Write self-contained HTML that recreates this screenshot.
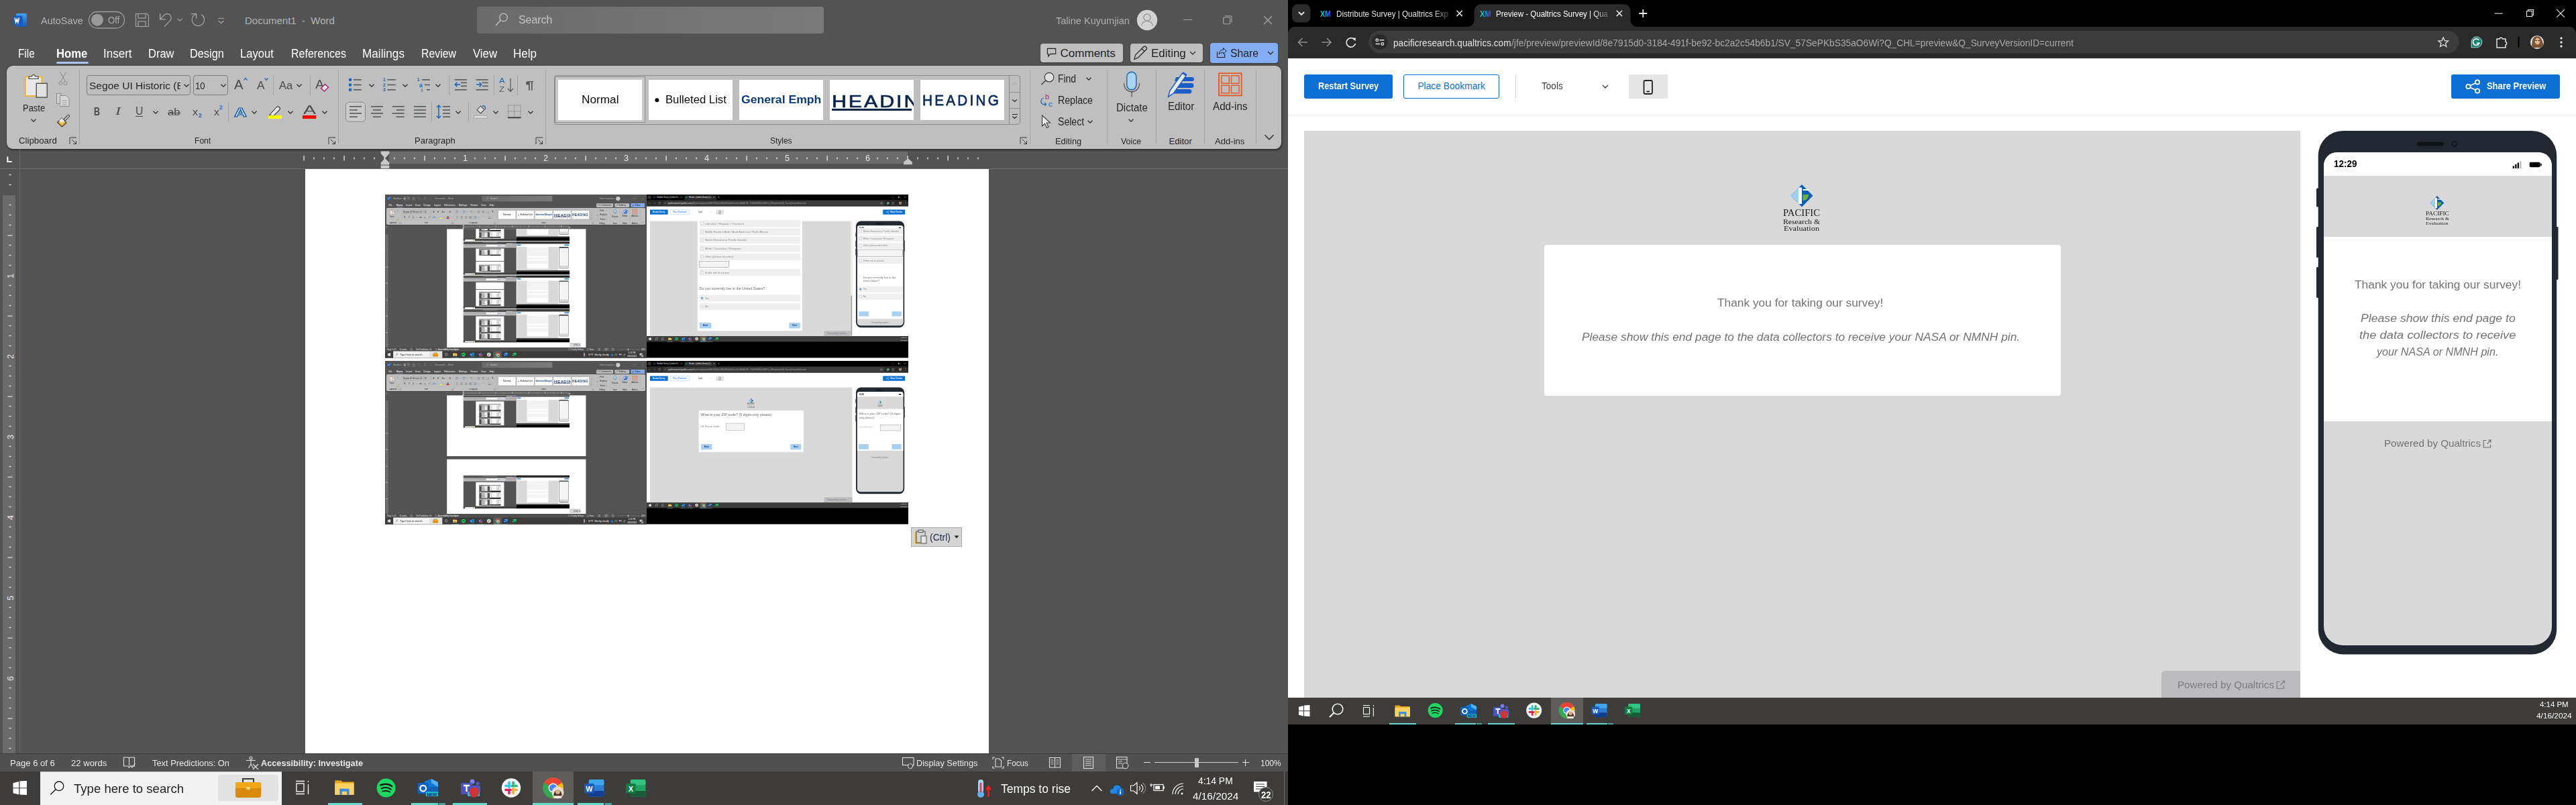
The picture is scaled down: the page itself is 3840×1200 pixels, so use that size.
<!DOCTYPE html><html><head><meta charset="utf-8"><style>*{margin:0;padding:0;box-sizing:border-box}
html,body{width:3840px;height:1200px;overflow:hidden;background:#000;font-family:"Liberation Sans",sans-serif}
.a{position:absolute}
.tx{white-space:nowrap;transform-origin:0 0}
svg{display:block}
</style></head><body><div class="a" style="left:0;top:0;width:1920px;height:1200px;overflow:hidden"><div class="a" style="left:0.00px;top:0.00px;width:1920.00px;height:1200.00px;background:#535353;"></div><svg class="a" style="left:19.00px;top:19.00px;overflow:visible;" width="22.00" height="22.00" viewBox="19.00 19.00 22.00 22.00"><defs><linearGradient id="wg" x1="0" y1="0" x2="0" y2="1"><stop offset="0" stop-color="#41a5ee"/><stop offset="0.5" stop-color="#2b7cd3"/><stop offset="1" stop-color="#185abd"/></linearGradient></defs><rect x="24" y="20" width="16" height="20" rx="1.5" fill="url(#wg)"/><rect x="20" y="23.5" width="13.5" height="13" rx="1.5" fill="#185abd"/><path d="M22 26.5 L23.6 33.5 L25.2 28.5 L26.8 33.5 L28.4 26.5" fill="none" stroke="#fff" stroke-width="1.6"/></svg><div id="t245" class="a tx" style="top:23.07px;font-size:15px;line-height:15px;color:#b4b4b4;left:61.20px;transform:scaleX(0.9639);">AutoSave</div><svg class="a" style="left:131.00px;top:16.00px;overflow:visible;" width="56.00" height="27.00" viewBox="131.00 16.00 56.00 27.00"><rect x="132.5" y="17.5" width="53" height="24.5" rx="12.25" fill="none" stroke="#9c9c9c" stroke-width="1.3"/><circle cx="145" cy="29.7" r="9" fill="#9a9a9a"/></svg><div id="t246" class="a tx" style="top:23.36px;font-size:14px;line-height:14px;color:#a8a8a8;left:160.50px;transform:scaleX(0.9394);">Off</div><svg class="a" style="left:201.00px;top:19.00px;overflow:visible;" width="22.00" height="22.00" viewBox="201.00 19.00 22.00 22.00"><path d="M202.5 20.5 H219 L221.5 23 V39.5 H202.5 Z" fill="none" stroke="#a3a3a3" stroke-width="1.2"/><rect x="206" y="20.5" width="11" height="6.5" fill="none" stroke="#a3a3a3" stroke-width="1.2"/><rect x="206" y="32" width="11" height="7.5" fill="none" stroke="#a3a3a3" stroke-width="1.2"/></svg><svg class="a" style="left:236.00px;top:18.00px;overflow:visible;" width="22.00" height="24.00" viewBox="236.00 18.00 22.00 24.00"><path d="M238.6 20.2 V28.8 H247" fill="none" stroke="#a8a8a8" stroke-width="1.3"/><path d="M238.9 28.5 L244.7 22.4 A6.15 6.15 0 0 1 253.4 31.1 L244.9 39.6" fill="none" stroke="#a8a8a8" stroke-width="1.2"/></svg><svg class="a" style="left:261.20px;top:24.00px;overflow:visible;" width="14.00" height="11.00" viewBox="261.20 24.00 14.00 11.00"><path d="M264.7 27.75 L268.2 31.25 L271.7 27.75" fill="none" stroke="#a3a3a3" stroke-width="1.1"/></svg><svg class="a" style="left:283.00px;top:18.00px;overflow:visible;" width="24.00" height="24.00" viewBox="283.00 18.00 24.00 24.00"><path d="M285.1 20.6 H292.6 V27.7" fill="none" stroke="#a8a8a8" stroke-width="1.3"/><path d="M292.4 20.8 L288.4 23.3 A9.2 9.2 0 1 0 300.2 21.5" fill="none" stroke="#a8a8a8" stroke-width="1.2"/></svg><svg class="a" style="left:323.00px;top:25.00px;overflow:visible;" width="13.00" height="12.00" viewBox="323.00 25.00 13.00 12.00"><path d="M325.3 27.4 H334" stroke="#a8a8a8" stroke-width="1"/><path d="M325.8 31 L329.6 34.7 L333.5 31" fill="none" stroke="#a8a8a8" stroke-width="1.1"/></svg><div id="t247" class="a tx" style="top:23.07px;font-size:15px;line-height:15px;color:#b4b4b4;left:365.00px;">Document1&nbsp;&nbsp;-&nbsp;&nbsp;Word</div><div class="a" style="left:711.00px;top:10.00px;width:517.00px;height:40.00px;background:linear-gradient(90deg,#6b6b6b,#7a7a7a);border-radius:4px"></div><svg class="a" style="left:736.00px;top:18.00px;overflow:visible;" width="24.00" height="23.00" viewBox="736.00 18.00 24.00 23.00"><circle cx="750.5" cy="26" r="5.8" fill="none" stroke="#c4c4c4" stroke-width="1.3"/><path d="M746.5 30 L739 38" stroke="#c4c4c4" stroke-width="1.3"/></svg><div id="t248" class="a tx" style="top:21.00px;font-size:17px;line-height:17px;color:#c6c6c6;left:773.40px;transform:scaleX(0.9338);">Search</div><div id="t249" class="a tx" style="top:23.07px;font-size:15px;line-height:15px;color:#b0b0b0;left:1573.60px;transform:scaleX(0.9683);">Taline Kuyumjian</div><svg class="a" style="left:1694.00px;top:14.00px;overflow:visible;" width="32.00" height="32.00" viewBox="1694.00 14.00 32.00 32.00"><circle cx="1710" cy="30" r="15.2" fill="#d3d3d3"/><circle cx="1710" cy="26" r="5.2" fill="none" stroke="#8e8e8e" stroke-width="1.2"/><path d="M1701.5 38.5 C1702.5 33 1706 31.5 1710 31.5 C1714 31.5 1717.5 33 1718.5 38.5" fill="none" stroke="#8e8e8e" stroke-width="1.2"/></svg><div class="a" style="left:1763.50px;top:29.00px;width:13.00px;height:1.20px;background:#a8a8a8;"></div><svg class="a" style="left:1822.00px;top:22.00px;overflow:visible;" width="16.00" height="16.00" viewBox="1822.00 22.00 16.00 16.00"><rect x="1823.6" y="25.8" width="10" height="10" rx="1.5" fill="none" stroke="#a8a8a8" stroke-width="1.1"/><path d="M1826 23.8 H1834 A2 2 0 0 1 1836 25.8 V33.5" fill="none" stroke="#a8a8a8" stroke-width="1.1"/></svg><svg class="a" style="left:1883.00px;top:23.00px;overflow:visible;" width="14.00" height="14.00" viewBox="1883.00 23.00 14.00 14.00"><path d="M1884 24 L1896 36 M1896 24 L1884 36" stroke="#a8a8a8" stroke-width="1.2"/></svg><div id="t250" class="a tx" style="top:71.55px;font-size:17.5px;line-height:17.5px;color:#ffffff;left:27.30px;transform:scaleX(0.8759);">File</div><div id="t251" class="a tx" style="top:71.55px;font-size:17.5px;line-height:17.5px;color:#ffffff;left:154.00px;transform:scaleX(0.9733);">Insert</div><div id="t252" class="a tx" style="top:71.55px;font-size:17.5px;line-height:17.5px;color:#ffffff;left:220.50px;transform:scaleX(0.9428);">Draw</div><div id="t253" class="a tx" style="top:71.55px;font-size:17.5px;line-height:17.5px;color:#ffffff;left:283.20px;transform:scaleX(0.9326);">Design</div><div id="t254" class="a tx" style="top:71.55px;font-size:17.5px;line-height:17.5px;color:#ffffff;left:358.00px;transform:scaleX(0.9516);">Layout</div><div id="t255" class="a tx" style="top:71.55px;font-size:17.5px;line-height:17.5px;color:#ffffff;left:434.00px;transform:scaleX(0.9163);">References</div><div id="t256" class="a tx" style="top:71.55px;font-size:17.5px;line-height:17.5px;color:#ffffff;left:540.00px;transform:scaleX(0.9815);">Mailings</div><div id="t257" class="a tx" style="top:71.55px;font-size:17.5px;line-height:17.5px;color:#ffffff;left:628.00px;transform:scaleX(0.9063);">Review</div><div id="t258" class="a tx" style="top:71.55px;font-size:17.5px;line-height:17.5px;color:#ffffff;left:705.00px;transform:scaleX(0.9571);">View</div><div id="t259" class="a tx" style="top:71.55px;font-size:17.5px;line-height:17.5px;color:#ffffff;left:765.00px;transform:scaleX(0.9725);">Help</div><div id="t260" class="a tx" style="top:71.55px;font-size:17.5px;line-height:17.5px;color:#ffffff;font-weight:700;left:84.40px;transform:scaleX(0.9543);">Home</div><div class="a" style="left:84.40px;top:92.20px;width:47.30px;height:2.40px;background:#a9c5f2;border-radius:1.5px"></div><div class="a" style="left:1550.60px;top:64.50px;width:123.90px;height:28.90px;background:#c0c0c0;border-radius:4px;box-shadow:0 1px 1.5px rgba(0,0,0,0.35)"></div><svg class="a" style="left:1559.00px;top:70.00px;overflow:visible;" width="17.00" height="18.00" viewBox="1559.00 70.00 17.00 18.00"><path d="M1561.4 72.4 H1573.7 V80.4 H1566 L1562.6 84 V80.4 H1561.4 Z" fill="none" stroke="#1f1f1f" stroke-width="1.1"/></svg><div id="t261" class="a tx" style="top:70.80px;font-size:17px;line-height:17px;color:#1f1f1f;left:1580.60px;">Comments</div><div class="a" style="left:1685.30px;top:64.50px;width:108.10px;height:28.90px;background:#c0c0c0;border-radius:4px;box-shadow:0 1px 1.5px rgba(0,0,0,0.35)"></div><svg class="a" style="left:1688.00px;top:67.00px;overflow:visible;" width="23.00" height="24.00" viewBox="1688.00 67.00 23.00 24.00"><path d="M1691 88.5 L1692.5 82 L1704.5 70 A2.2 2.2 0 0 1 1708.5 74 L1696.5 86 Z M1702 72.5 L1706 76.5" fill="none" stroke="#262626" stroke-width="1.2"/></svg><div id="t262" class="a tx" style="top:70.80px;font-size:17px;line-height:17px;color:#1f1f1f;left:1715.50px;transform:scaleX(0.9946);">Editing</div><svg class="a" style="left:1769.50px;top:72.50px;overflow:visible;" width="16.00" height="12.00" viewBox="1769.50 72.50 16.00 12.00"><path d="M1773.5 76.5 L1777.5 80.5 L1781.5 76.5" fill="none" stroke="#262626" stroke-width="1.2"/></svg><div class="a" style="left:1804.00px;top:64.20px;width:101.00px;height:29.60px;background:#85adf1;border-radius:4px;box-shadow:0 1px 1.5px rgba(0,0,0,0.35)"></div><svg class="a" style="left:1812.00px;top:70.00px;overflow:visible;" width="18.00" height="18.00" viewBox="1812.00 70.00 18.00 18.00"><path d="M1814.5 77.2 V85.5 H1825.7 V80.2" fill="none" stroke="#1f1f1f" stroke-width="1.1"/><path d="M1817 80.6 C1817.8 76 1820 74.3 1823.5 74.3 V71.5 L1828.2 76.1 L1823.6 80.3 V78.2 C1821 78.2 1819 79 1817 80.6 Z" fill="none" stroke="#1f1f1f" stroke-width="1"/></svg><div id="t263" class="a tx" style="top:70.80px;font-size:17px;line-height:17px;color:#1f1f1f;left:1834.30px;transform:scaleX(0.9258);">Share</div><svg class="a" style="left:1886.00px;top:72.50px;overflow:visible;" width="16.00" height="12.00" viewBox="1886.00 72.50 16.00 12.00"><path d="M1890.0 76.5 L1894 80.5 L1898.0 76.5" fill="none" stroke="#1f1f1f" stroke-width="1.2"/></svg><div class="a" style="left:10.00px;top:98.00px;width:1900.00px;height:124.00px;background:#bfbfbf;border-radius:9px;box-shadow:0 0 1.5px rgba(0,0,0,0.55),1px 2px 3px rgba(0,0,0,0.4)"></div><svg class="a" style="left:35.00px;top:107.00px;overflow:visible;" width="37.00" height="40.00" viewBox="35.00 107.00 37.00 40.00"><rect x="37.8" y="114.5" width="24.5" height="28.5" fill="#e8e8e8" stroke="#f0b429" stroke-width="1.8"/><path d="M43 117.5 V114 H47.5 A2.5 2.5 0 0 1 52.5 114 H57 V117.5 Z" fill="#e8e8e8" stroke="#454545" stroke-width="1.2"/><rect x="54.2" y="124.3" width="16" height="20.8" fill="#e2e2e2" stroke="#454545" stroke-width="1.3"/></svg><div id="t264" class="a tx" style="top:153.72px;font-size:14.5px;line-height:14.5px;color:#262626;left:34.40px;transform:scaleX(0.8927);">Paste</div><svg class="a" style="left:43.40px;top:173.50px;overflow:visible;" width="14.00" height="11.00" viewBox="43.40 173.50 14.00 11.00"><path d="M46.9 177.25 L50.4 180.75 L53.9 177.25" fill="none" stroke="#262626" stroke-width="1.2"/></svg><svg class="a" style="left:86.00px;top:106.00px;overflow:visible;" width="16.00" height="22.00" viewBox="86.00 106.00 16.00 22.00"><path d="M89.5 107 L97 121 M98.5 107 L91 121" stroke="#8c8c8c" stroke-width="1"/><circle cx="90.5" cy="124" r="2.5" fill="none" stroke="#8c8c8c"/><circle cx="97.5" cy="124" r="2.5" fill="none" stroke="#8c8c8c"/></svg><svg class="a" style="left:83.00px;top:138.00px;overflow:visible;" width="22.00" height="22.00" viewBox="83.00 138.00 22.00 22.00"><path d="M84.5 139.5 H91 V154.5 H84.5 Z" fill="#cfcfcf" stroke="#8c8c8c"/><path d="M89.5 142.5 H98.5 L103 147 V158.5 H89.5 Z" fill="#d8d8d8" stroke="#8c8c8c"/><path d="M92.5 150 H100 M92.5 153 H100 M92.5 156 H100" stroke="#8c8c8c" stroke-width="0.8"/></svg><svg class="a" style="left:84.00px;top:170.00px;overflow:visible;" width="21.00" height="20.00" viewBox="84.00 170.00 21.00 20.00"><path d="M95 178 L101.5 171.5 A1.5 1.5 0 0 1 103.5 173.5 L97 180 Z" fill="#e8e8e8" stroke="#3a3a3a" stroke-width="1.1"/><path d="M85.5 182.5 L92 176 L99 183 L92.5 189 Z" fill="#f0b429" stroke="#3a3a3a" stroke-width="1.1"/><path d="M88 180 L92 176 L96.5 180.5 L92.5 184 Z" fill="#e8e8e8"/></svg><div id="t265" class="a tx" style="top:203.25px;font-size:13.2px;line-height:13.2px;color:#262626;left:27.50px;transform:scaleX(1.0063);">Clipboard</div><svg class="a" style="left:103.00px;top:204.00px;overflow:visible;" width="12.00" height="12.00" viewBox="103.00 204.00 12.00 12.00"><path d="M104 215 V205 H114" fill="none" stroke="#3a3a3a" stroke-width="1"/><path d="M107 208 L113.5 214.5 M113.5 210 V214.5 H109" fill="none" stroke="#3a3a3a" stroke-width="1"/></svg><div class="a" style="left:118.20px;top:104.00px;width:1.00px;height:110.50px;background:#a2a2a2;"></div><div class="a" style="left:129.20px;top:112.00px;width:155.20px;height:29.80px;background:transparent;border:1px solid #7d7d7d;border-radius:4px"></div><div class="a" style="left:130px;top:113px;width:139px;height:28px;overflow:hidden"><div id="t266" class="a tx" style="top:7.17px;font-size:15.2px;line-height:15.2px;color:#262626;left:2.50px;transform:scaleX(1.0232);">Segoe UI Historic (Body)</div></div><svg class="a" style="left:270.50px;top:121.80px;overflow:visible;" width="14.00" height="11.00" viewBox="270.50 121.80 14.00 11.00"><path d="M274.0 125.55 L277.5 129.05 L281.0 125.55" fill="none" stroke="#262626" stroke-width="1.2"/></svg><div class="a" style="left:287.50px;top:112.00px;width:52.90px;height:29.80px;background:transparent;border:1px solid #7d7d7d;border-radius:4px"></div><div id="t267" class="a tx" style="top:120.27px;font-size:15.2px;line-height:15.2px;color:#262626;left:291.00px;transform:scaleX(0.8702);">10</div><svg class="a" style="left:326.00px;top:121.80px;overflow:visible;" width="14.00" height="11.00" viewBox="326.00 121.80 14.00 11.00"><path d="M329.5 125.55 L333 129.05 L336.5 125.55" fill="none" stroke="#262626" stroke-width="1.2"/></svg><div id="t268" class="a tx" style="top:115.04px;font-size:21px;line-height:21px;color:#4a4a4a;left:349.00px;transform:scaleX(0.9638);">A</div><svg class="a" style="left:362.00px;top:114.00px;overflow:visible;" width="8.00" height="7.00" viewBox="362.00 114.00 8.00 7.00"><path d="M363.5 119.5 L366 116.5 L368.5 119.5" fill="none" stroke="#2b6cb0" stroke-width="1.3"/></svg><div id="t269" class="a tx" style="top:118.70px;font-size:17px;line-height:17px;color:#4a4a4a;left:383.00px;transform:scaleX(1.0142);">A</div><svg class="a" style="left:393.00px;top:115.00px;overflow:visible;" width="8.00" height="7.00" viewBox="393.00 115.00 8.00 7.00"><path d="M394.5 116.5 L397 119.5 L399.5 116.5" fill="none" stroke="#2b6cb0" stroke-width="1.3"/></svg><div class="a" style="left:406.90px;top:112.00px;width:1.00px;height:29.80px;background:#a2a2a2;"></div><div id="t270" class="a tx" style="top:119.10px;font-size:17px;line-height:17px;color:#4a4a4a;left:415.50px;transform:scaleX(0.9715);">Aa</div><svg class="a" style="left:439.20px;top:121.80px;overflow:visible;" width="14.00" height="11.00" viewBox="439.20 121.80 14.00 11.00"><path d="M442.7 125.55 L446.2 129.05 L449.7 125.55" fill="none" stroke="#262626" stroke-width="1.2"/></svg><div class="a" style="left:461.80px;top:112.00px;width:1.00px;height:29.80px;background:#a2a2a2;"></div><div id="t271" class="a tx" style="top:116.51px;font-size:18px;line-height:18px;color:#4a4a4a;left:470.40px;transform:scaleX(1.0828);">A</div><svg class="a" style="left:477.00px;top:124.00px;overflow:visible;" width="14.00" height="14.00" viewBox="477.00 124.00 14.00 14.00"><path d="M478.5 131.5 L484.5 125.5 L489.5 130 L483.5 136 Z" fill="#e8e8e8" stroke="#b0287c" stroke-width="1.6"/></svg><div id="t272" class="a tx" style="top:157.64px;font-size:16.5px;line-height:16.5px;color:#4a4a4a;font-weight:700;left:139.70px;transform:scaleX(0.7553);">B</div><div id="t273" class="a tx" style="top:157.64px;font-size:16.5px;line-height:16.5px;color:#4a4a4a;font-style:italic;font-family:'Liberation Serif',serif;left:171.70px;transform:scaleX(1.4560);">I</div><div id="t274" class="a tx" style="top:157.34px;font-size:16.5px;line-height:16.5px;color:#4a4a4a;left:201.60px;transform:scaleX(0.9567);">U</div><div class="a" style="left:201.60px;top:173.20px;width:11.40px;height:1.20px;background:#4a4a4a;"></div><svg class="a" style="left:224.80px;top:162.00px;overflow:visible;" width="14.00" height="11.00" viewBox="224.80 162.00 14.00 11.00"><path d="M228.3 165.75 L231.8 169.25 L235.3 165.75" fill="none" stroke="#262626" stroke-width="1.2"/></svg><div id="t275" class="a tx" style="top:160.46px;font-size:14px;line-height:14px;color:#4a4a4a;left:250.00px;transform:scaleX(1.1944);">ab</div><div class="a" style="left:249.50px;top:168.00px;width:19.50px;height:1.00px;background:#4a4a4a;"></div><div id="t276" class="a tx" style="top:159.66px;font-size:14px;line-height:14px;color:#4a4a4a;left:287.00px;transform:scaleX(1.1429);">x</div><div id="t277" class="a tx" style="top:166.86px;font-size:9.5px;line-height:9.5px;color:#2b6cb0;font-weight:700;left:295.50px;transform:scaleX(0.9464);">2</div><div id="t278" class="a tx" style="top:159.66px;font-size:14px;line-height:14px;color:#4a4a4a;left:318.60px;transform:scaleX(1.1429);">x</div><div id="t279" class="a tx" style="top:154.86px;font-size:9.5px;line-height:9.5px;color:#2b6cb0;font-weight:700;left:327.00px;transform:scaleX(0.9464);">2</div><div class="a" style="left:339.90px;top:152.00px;width:1.00px;height:29.40px;background:#a2a2a2;"></div><div id="t280" class="a tx" style="top:157.52px;font-size:19px;line-height:19px;color:#1565c0;font-weight:700;left:348.50px;transform:scaleX(1.3847);-webkit-text-stroke:1px #0b4f9c;color:#bcd9f5">A</div><svg class="a" style="left:372.00px;top:162.00px;overflow:visible;" width="14.00" height="11.00" viewBox="372.00 162.00 14.00 11.00"><path d="M375.5 165.75 L379 169.25 L382.5 165.75" fill="none" stroke="#262626" stroke-width="1.2"/></svg><svg class="a" style="left:398.00px;top:155.00px;overflow:visible;" width="24.00" height="23.00" viewBox="398.00 155.00 24.00 23.00"><path d="M403 170 L412 160 A2.5 2.5 0 0 1 416.5 164 L407.5 173 L402 171.5 Z" fill="#e8e8e8" stroke="#3a3a3a" stroke-width="1.1"/><path d="M401 171 L404 173 L400 174" fill="#3a3a3a"/></svg><div class="a" style="left:400.00px;top:172.20px;width:20.20px;height:5.00px;background:#ffff00;"></div><svg class="a" style="left:426.30px;top:162.00px;overflow:visible;" width="14.00" height="11.00" viewBox="426.30 162.00 14.00 11.00"><path d="M429.8 165.75 L433.3 169.25 L436.8 165.75" fill="none" stroke="#262626" stroke-width="1.2"/></svg><div id="t281" class="a tx" style="top:155.75px;font-size:17.5px;line-height:17.5px;color:#4a4a4a;left:451.50px;transform:scaleX(1.6278);">A</div><div class="a" style="left:451.00px;top:172.20px;width:20.00px;height:5.00px;background:#ff0000;"></div><svg class="a" style="left:477.00px;top:162.00px;overflow:visible;" width="14.00" height="11.00" viewBox="477.00 162.00 14.00 11.00"><path d="M480.5 165.75 L484 169.25 L487.5 165.75" fill="none" stroke="#262626" stroke-width="1.2"/></svg><div id="t282" class="a tx" style="top:203.25px;font-size:13.2px;line-height:13.2px;color:#262626;left:289.60px;transform:scaleX(0.9171);">Font</div><svg class="a" style="left:489.00px;top:204.00px;overflow:visible;" width="12.00" height="12.00" viewBox="489.00 204.00 12.00 12.00"><path d="M490 215 V205 H500" fill="none" stroke="#3a3a3a" stroke-width="1"/><path d="M493 208 L499.5 214.5 M499.5 210 V214.5 H495" fill="none" stroke="#3a3a3a" stroke-width="1"/></svg><div class="a" style="left:503.80px;top:104.00px;width:1.00px;height:110.50px;background:#a2a2a2;"></div><svg class="a" style="left:510.00px;top:105.00px;overflow:visible;" width="302.00" height="80.00" viewBox="510.00 105.00 302.00 80.00"><rect x="520" y="116.9" width="4" height="4" fill="#1565c0"/><rect x="526.8" y="118.10000000000001" width="12" height="1.6" fill="#5a5a5a"/><rect x="520" y="124.5" width="4" height="4" fill="#1565c0"/><rect x="526.8" y="125.7" width="12" height="1.6" fill="#5a5a5a"/><rect x="520" y="131.8" width="4" height="4" fill="#1565c0"/><rect x="526.8" y="133.0" width="12" height="1.6" fill="#5a5a5a"/><rect x="577.4" y="118.10000000000001" width="12.4" height="1.6" fill="#5a5a5a"/><rect x="577.4" y="125.7" width="12.4" height="1.6" fill="#5a5a5a"/><rect x="577.4" y="133.0" width="12.4" height="1.6" fill="#5a5a5a"/><rect x="629" y="118.1" width="12" height="1.6" fill="#5a5a5a"/><rect x="633" y="125.7" width="8" height="1.6" fill="#5a5a5a"/><rect x="636" y="133" width="5" height="1.6" fill="#5a5a5a"/><rect x="677.9" y="118.1" width="18" height="1.6" fill="#5a5a5a"/><rect x="686.9" y="122.5" width="9" height="1.6" fill="#5a5a5a"/><rect x="686.9" y="127.5" width="9" height="1.6" fill="#5a5a5a"/><rect x="677.9" y="133" width="18" height="1.6" fill="#5a5a5a"/><rect x="709.8" y="118.1" width="18" height="1.6" fill="#5a5a5a"/><rect x="718.8" y="122.5" width="9" height="1.6" fill="#5a5a5a"/><rect x="718.8" y="127.5" width="9" height="1.6" fill="#5a5a5a"/><rect x="709.8" y="133" width="18" height="1.6" fill="#5a5a5a"/><path d="M686 126 H678.5 M681.5 122.8 L678.3 126 L681.5 129.2" fill="none" stroke="#1565c0" stroke-width="1.5"/><path d="M710 126 H717.5 M714.5 122.8 L717.7 126 L714.5 129.2" fill="none" stroke="#1565c0" stroke-width="1.5"/><path d="M761 117 V136 M757 132 L761 136.5 L765 132" fill="none" stroke="#5a5a5a" stroke-width="1.3"/><rect x="515.5" y="152.3" width="29" height="29" rx="5" fill="#c9c9c9" stroke="#8a8a8a" stroke-width="1"/><rect x="521" y="158.0" width="18" height="1.6" fill="#5a5a5a"/><rect x="553.0" y="158.0" width="18" height="1.6" fill="#5a5a5a"/><rect x="584.7" y="158.0" width="18" height="1.6" fill="#5a5a5a"/><rect x="617" y="158.0" width="18" height="1.6" fill="#5a5a5a"/><rect x="521" y="163.2" width="12" height="1.6" fill="#5a5a5a"/><rect x="556.0" y="163.2" width="12" height="1.6" fill="#5a5a5a"/><rect x="590.7" y="163.2" width="12" height="1.6" fill="#5a5a5a"/><rect x="617" y="163.2" width="18" height="1.6" fill="#5a5a5a"/><rect x="521" y="168.2" width="18" height="1.6" fill="#5a5a5a"/><rect x="553.0" y="168.2" width="18" height="1.6" fill="#5a5a5a"/><rect x="584.7" y="168.2" width="18" height="1.6" fill="#5a5a5a"/><rect x="617" y="168.2" width="18" height="1.6" fill="#5a5a5a"/><rect x="521" y="173.39999999999998" width="12" height="1.6" fill="#5a5a5a"/><rect x="556.0" y="173.39999999999998" width="12" height="1.6" fill="#5a5a5a"/><rect x="590.7" y="173.39999999999998" width="12" height="1.6" fill="#5a5a5a"/><rect x="617" y="173.39999999999998" width="18" height="1.6" fill="#5a5a5a"/><rect x="660" y="158.0" width="11" height="1.6" fill="#5a5a5a"/><rect x="660" y="163.2" width="11" height="1.6" fill="#5a5a5a"/><rect x="660" y="168.2" width="11" height="1.6" fill="#5a5a5a"/><rect x="660" y="173.39999999999998" width="11" height="1.6" fill="#5a5a5a"/><path d="M654 157 V176 M651 160 L654 157 L657 160 M651 173 L654 176 L657 173" fill="none" stroke="#1565c0" stroke-width="1.5"/><path d="M711 164 L716.5 158 L722 163.5 L716.5 169 Z" fill="#e0e0e0" stroke="#4a4a4a" stroke-width="1.1"/><path d="M719 158 C722 157 724 159 723.5 163" fill="none" stroke="#1565c0" stroke-width="1.4"/><rect x="706.5" y="172.5" width="19.5" height="3.5" fill="#e0e0e0" stroke="#a0a0a0" stroke-width="0.8"/><rect x="757.5" y="157" width="18.5" height="18" fill="none" stroke="#6a6a6a" stroke-width="0.9" stroke-dasharray="1.2 1.2"/><path d="M766.7 157 V175 M757.5 166 H776" stroke="#6a6a6a" stroke-width="0.9" stroke-dasharray="1.2 1.2"/><rect x="757" y="174.5" width="19.5" height="1.8" fill="#3a3a3a"/></svg><div id="t283" class="a tx" style="top:114.99px;font-size:8px;line-height:8px;color:#1565c0;font-weight:700;left:571.00px;transform:scaleX(0.8541);">1</div><div id="t284" class="a tx" style="top:122.59px;font-size:8px;line-height:8px;color:#1565c0;font-weight:700;left:571.00px;transform:scaleX(0.8541);">2</div><div id="t285" class="a tx" style="top:129.89px;font-size:8px;line-height:8px;color:#1565c0;font-weight:700;left:571.00px;transform:scaleX(0.8541);">3</div><div id="t286" class="a tx" style="top:115.24px;font-size:7.5px;line-height:7.5px;color:#1565c0;font-weight:700;left:622.00px;transform:scaleX(0.8391);">1</div><div id="t287" class="a tx" style="top:122.85px;font-size:8.5px;line-height:8.5px;color:#1565c0;font-weight:700;left:624.50px;transform:scaleX(1.0577);">a</div><div id="t288" class="a tx" style="top:130.84px;font-size:7.5px;line-height:7.5px;color:#1565c0;font-weight:700;left:628.00px;transform:scaleX(0.9598);">i</div><div id="t289" class="a tx" style="top:114.93px;font-size:11px;line-height:11px;color:#1565c0;left:743.80px;transform:scaleX(1.1585);">A</div><div id="t290" class="a tx" style="top:127.83px;font-size:11px;line-height:11px;color:#5a5a5a;left:744.00px;transform:scaleX(1.1906);">Z</div><div id="t291" class="a tx" style="top:118.50px;font-size:17px;line-height:17px;color:#5a5a5a;font-weight:700;left:782.50px;transform:scaleX(1.3750);">&para;</div><svg class="a" style="left:546.50px;top:121.80px;overflow:visible;" width="14.00" height="11.00" viewBox="546.50 121.80 14.00 11.00"><path d="M550.0 125.55 L553.5 129.05 L557.0 125.55" fill="none" stroke="#262626" stroke-width="1.2"/></svg><svg class="a" style="left:597.40px;top:121.80px;overflow:visible;" width="14.00" height="11.00" viewBox="597.40 121.80 14.00 11.00"><path d="M600.9 125.55 L604.4 129.05 L607.9 125.55" fill="none" stroke="#262626" stroke-width="1.2"/></svg><svg class="a" style="left:646.30px;top:121.80px;overflow:visible;" width="14.00" height="11.00" viewBox="646.30 121.80 14.00 11.00"><path d="M649.8 125.55 L653.3 129.05 L656.8 125.55" fill="none" stroke="#262626" stroke-width="1.2"/></svg><svg class="a" style="left:675.70px;top:162.00px;overflow:visible;" width="14.00" height="11.00" viewBox="675.70 162.00 14.00 11.00"><path d="M679.2 165.75 L682.7 169.25 L686.2 165.75" fill="none" stroke="#262626" stroke-width="1.2"/></svg><svg class="a" style="left:732.20px;top:162.00px;overflow:visible;" width="14.00" height="11.00" viewBox="732.20 162.00 14.00 11.00"><path d="M735.7 165.75 L739.2 169.25 L742.7 165.75" fill="none" stroke="#262626" stroke-width="1.2"/></svg><svg class="a" style="left:783.60px;top:162.00px;overflow:visible;" width="14.00" height="11.00" viewBox="783.60 162.00 14.00 11.00"><path d="M787.1 165.75 L790.6 169.25 L794.1 165.75" fill="none" stroke="#262626" stroke-width="1.2"/></svg><div class="a" style="left:669.00px;top:112.00px;width:1.00px;height:29.80px;background:#a2a2a2;"></div><div class="a" style="left:736.00px;top:112.00px;width:1.00px;height:29.80px;background:#a2a2a2;"></div><div class="a" style="left:771.10px;top:112.00px;width:1.00px;height:29.80px;background:#a2a2a2;"></div><div class="a" style="left:642.90px;top:152.30px;width:1.00px;height:29.10px;background:#a2a2a2;"></div><div class="a" style="left:698.00px;top:152.30px;width:1.00px;height:29.10px;background:#a2a2a2;"></div><div id="t292" class="a tx" style="top:203.25px;font-size:13.2px;line-height:13.2px;color:#262626;left:618.00px;transform:scaleX(0.9856);">Paragraph</div><svg class="a" style="left:798.00px;top:204.00px;overflow:visible;" width="12.00" height="12.00" viewBox="798.00 204.00 12.00 12.00"><path d="M799 215 V205 H809" fill="none" stroke="#3a3a3a" stroke-width="1"/><path d="M802 208 L808.5 214.5 M808.5 210 V214.5 H804" fill="none" stroke="#3a3a3a" stroke-width="1"/></svg><div class="a" style="left:813.10px;top:104.00px;width:1.00px;height:110.50px;background:#a2a2a2;"></div><div class="a" style="left:825.70px;top:112.40px;width:695.70px;height:73.90px;background:transparent;border:1px solid #8a8a8a;border-radius:4px"></div><div class="a" style="left:827.30px;top:114.40px;width:134.50px;height:69.10px;background:#c8c8c8;border:1px solid #8a8a8a"></div><div class="a" style="left:832.00px;top:118.90px;width:125.30px;height:60.10px;background:#ffffff;"></div><div class="a" style="left:967.00px;top:118.90px;width:125.30px;height:60.10px;background:#ffffff;"></div><div class="a" style="left:1102.00px;top:118.90px;width:125.30px;height:60.10px;background:#ffffff;"></div><div class="a" style="left:1237.00px;top:118.90px;width:125.30px;height:60.10px;background:#ffffff;"></div><div class="a" style="left:1372.00px;top:118.90px;width:125.30px;height:60.10px;background:#ffffff;"></div><div id="t293" class="a tx" style="top:140.45px;font-size:17.3px;line-height:17.3px;color:#0a0a0a;left:866.80px;transform:scaleX(0.9966);">Normal</div><svg class="a" style="left:975.00px;top:144.00px;overflow:visible;" width="9.00" height="10.00" viewBox="975.00 144.00 9.00 10.00"><circle cx="979.3" cy="149.2" r="3" fill="#0a0a0a"/></svg><div id="t294" class="a tx" style="top:140.45px;font-size:17.3px;line-height:17.3px;color:#0a0a0a;left:991.70px;transform:scaleX(0.9645);">Bulleted List</div><div class="a" style="left:1102px;top:119px;width:125px;height:60px;overflow:hidden"><div id="t295" class="a tx" style="top:21.45px;font-size:17.3px;line-height:17.3px;color:#0b3a7a;font-weight:700;left:2.60px;transform:scaleX(1.0182);">General Emph</div></div><div class="a" style="left:1237px;top:119px;width:125px;height:60px;overflow:hidden"><div id="t296" class="a tx" style="top:18.60px;font-size:26px;line-height:26px;color:#0b2550;letter-spacing:2.5px;left:3.30px;transform:scaleX(1.1682);-webkit-text-stroke:0.7px #0b2550">HEADING 1</div><div class="a" style="left:3.30px;top:43.00px;width:118.70px;height:2.50px;background:#0b2550;"></div></div><div id="t297" class="a tx" style="top:138.95px;font-size:22px;line-height:22px;color:#0d2c5e;letter-spacing:3.5px;left:1375.00px;transform:scaleX(0.9380);-webkit-text-stroke:0.8px #0d2c5e">HEADING</div><div class="a" style="left:1503.60px;top:112.40px;width:1.00px;height:73.90px;background:#8a8a8a;"></div><div class="a" style="left:1504.00px;top:137.30px;width:17.00px;height:1.00px;background:#8a8a8a;"></div><div class="a" style="left:1504.00px;top:160.70px;width:17.00px;height:1.00px;background:#8a8a8a;"></div><svg class="a" style="left:1506.00px;top:120.00px;overflow:visible;" width="13.00" height="9.00" viewBox="1506.00 120.00 13.00 9.00"><path d="M1509.3 126 L1512.5 123 L1515.7 126" fill="none" stroke="#9a9a9a" stroke-width="1"/></svg><svg class="a" style="left:1506.00px;top:145.00px;overflow:visible;" width="13.00" height="10.00" viewBox="1506.00 145.00 13.00 10.00"><path d="M1509.25 148.5 L1512.5 151.5 L1515.75 148.5" fill="none" stroke="#262626" stroke-width="1.1"/></svg><div class="a" style="left:1509.00px;top:169.50px;width:7.50px;height:1.00px;background:#262626;"></div><svg class="a" style="left:1506.00px;top:169.50px;overflow:visible;" width="13.00" height="10.00" viewBox="1506.00 169.50 13.00 10.00"><path d="M1509.25 173.0 L1512.5 176.0 L1515.75 173.0" fill="none" stroke="#262626" stroke-width="1.1"/></svg><div id="t298" class="a tx" style="top:203.25px;font-size:13.2px;line-height:13.2px;color:#262626;left:1147.75px;transform:scaleX(0.9050);">Styles</div><svg class="a" style="left:1519.60px;top:204.00px;overflow:visible;" width="12.00" height="12.00" viewBox="1519.60 204.00 12.00 12.00"><path d="M1520.6 215 V205 H1530.6" fill="none" stroke="#3a3a3a" stroke-width="1"/><path d="M1523.6 208 L1530.1 214.5 M1530.1 210 V214.5 H1525.6" fill="none" stroke="#3a3a3a" stroke-width="1"/></svg><div class="a" style="left:1535.20px;top:104.00px;width:1.00px;height:110.50px;background:#a2a2a2;"></div><svg class="a" style="left:1550.00px;top:106.00px;overflow:visible;" width="24.00" height="22.00" viewBox="1550.00 106.00 24.00 22.00"><circle cx="1564" cy="115.2" r="6.8" fill="#e0e0e0" stroke="#3a3a3a" stroke-width="1.2"/><path d="M1559 120 L1552.3 126" stroke="#3a3a3a" stroke-width="1.4"/></svg><div id="t299" class="a tx" style="top:109.98px;font-size:15.8px;line-height:15.8px;color:#262626;left:1576.50px;transform:scaleX(0.8786);">Find</div><svg class="a" style="left:1616.30px;top:111.80px;overflow:visible;" width="14.00" height="11.00" viewBox="1616.30 111.80 14.00 11.00"><path d="M1619.8 115.55 L1623.3 119.05 L1626.8 115.55" fill="none" stroke="#262626" stroke-width="1.2"/></svg><div id="t300" class="a tx" style="top:139.62px;font-size:10px;line-height:10px;color:#b0287c;left:1558.00px;transform:scaleX(1.0788);">b</div><div id="t301" class="a tx" style="top:150.62px;font-size:10px;line-height:10px;color:#1565c0;left:1563.00px;transform:scaleX(1.2000);">c</div><svg class="a" style="left:1549.00px;top:141.00px;overflow:visible;" width="13.00" height="19.00" viewBox="1549.00 141.00 13.00 19.00"><path d="M1556 146 C1551 147 1550.5 154 1555 155.5 L1559.5 155.5 M1557 153 L1559.5 155.5 L1557 158" fill="none" stroke="#1565c0" stroke-width="1.2"/></svg><div id="t302" class="a tx" style="top:142.23px;font-size:15.8px;line-height:15.8px;color:#262626;left:1576.50px;transform:scaleX(0.8972);">Replace</div><svg class="a" style="left:1552.00px;top:170.00px;overflow:visible;" width="16.00" height="22.00" viewBox="1552.00 170.00 16.00 22.00"><path d="M1553.5 172 V188 L1557.5 184.5 L1560.5 190.5 L1563 189.3 L1560 183 H1565.5 Z" fill="#e8e8e8" stroke="#3a3a3a" stroke-width="1.1"/></svg><div id="t303" class="a tx" style="top:173.68px;font-size:15.8px;line-height:15.8px;color:#262626;left:1576.50px;transform:scaleX(0.8906);">Select</div><svg class="a" style="left:1617.50px;top:175.50px;overflow:visible;" width="14.00" height="11.00" viewBox="1617.50 175.50 14.00 11.00"><path d="M1621.0 179.25 L1624.5 182.75 L1628.0 179.25" fill="none" stroke="#262626" stroke-width="1.2"/></svg><div id="t304" class="a tx" style="top:204.25px;font-size:13.2px;line-height:13.2px;color:#262626;left:1573.30px;transform:scaleX(0.9697);">Editing</div><div class="a" style="left:1649.80px;top:104.00px;width:1.00px;height:110.50px;background:#a2a2a2;"></div><svg class="a" style="left:1672.00px;top:105.00px;overflow:visible;" width="30.00" height="41.00" viewBox="1672.00 105.00 30.00 41.00"><rect x="1679.8" y="107.3" width="14" height="26.5" rx="7" fill="#a9d4f5" stroke="#1565c0" stroke-width="1.4"/><path d="M1675.5 124 C1675.5 141 1698.5 141 1698.5 124" fill="none" stroke="#5a5a5a" stroke-width="1.3"/><path d="M1687 136.5 V144.5" stroke="#5a5a5a" stroke-width="1.3"/></svg><div id="t305" class="a tx" style="top:153.08px;font-size:15.8px;line-height:15.8px;color:#262626;left:1663.70px;transform:scaleX(0.9519);">Dictate</div><svg class="a" style="left:1679.30px;top:174.30px;overflow:visible;" width="14.00" height="11.00" viewBox="1679.30 174.30 14.00 11.00"><path d="M1682.8 178.05 L1686.3 181.55 L1689.8 178.05" fill="none" stroke="#262626" stroke-width="1.2"/></svg><div id="t306" class="a tx" style="top:204.25px;font-size:13.2px;line-height:13.2px;color:#262626;left:1671.30px;transform:scaleX(0.9362);">Voice</div><div class="a" style="left:1723.00px;top:104.00px;width:1.00px;height:110.50px;background:#a2a2a2;"></div><svg class="a" style="left:1739.00px;top:105.00px;overflow:visible;" width="42.00" height="42.00" viewBox="1739.00 105.00 42.00 42.00"><path d="M1751 124 H1776 A3.5 3.5 0 0 1 1776 131 H1749 Z M1753 115 H1777 A3 3 0 0 1 1777 121 H1751 Z M1749 133 H1773 A3 3 0 0 1 1773 139.5 H1746 Z" fill="#1a5cc8"/><path d="M1741.5 144.3 L1744 135 L1762.5 109 L1768 113 L1749.5 139 Z" fill="#e8e8e8" stroke="#1a5cc8" stroke-width="1.5"/><path d="M1762.5 109 L1764 107.3 L1769.5 111 L1768 113 Z" fill="#1a5cc8"/></svg><div id="t307" class="a tx" style="top:151.28px;font-size:15.8px;line-height:15.8px;color:#262626;left:1740.80px;transform:scaleX(0.9499);">Editor</div><div id="t308" class="a tx" style="top:204.25px;font-size:13.2px;line-height:13.2px;color:#262626;left:1742.40px;">Editor</div><div class="a" style="left:1794.80px;top:104.00px;width:1.00px;height:110.50px;background:#a2a2a2;"></div><svg class="a" style="left:1814.00px;top:106.00px;overflow:visible;" width="40.00" height="40.00" viewBox="1814.00 106.00 40.00 40.00"><rect x="1817" y="109.2" width="33.7" height="33.2" fill="none" stroke="#e35d2a" stroke-width="1.9"/><rect x="1820.8" y="112.8" width="11.5" height="11.5" fill="none" stroke="#e35d2a" stroke-width="1.5"/><rect x="1835.5" y="112.8" width="11.5" height="11.5" fill="none" stroke="#e35d2a" stroke-width="1.5"/><rect x="1820.8" y="127.3" width="11.5" height="11.5" fill="none" stroke="#e35d2a" stroke-width="1.5"/><rect x="1835.5" y="127.3" width="11.5" height="11.5" fill="none" stroke="#e35d2a" stroke-width="1.5"/></svg><div id="t309" class="a tx" style="top:151.28px;font-size:15.8px;line-height:15.8px;color:#262626;left:1808.00px;transform:scaleX(0.9615);">Add-ins</div><div id="t310" class="a tx" style="top:204.25px;font-size:13.2px;line-height:13.2px;color:#262626;left:1811.00px;transform:scaleX(0.9930);">Add-ins</div><div class="a" style="left:1871.90px;top:104.00px;width:1.00px;height:110.50px;background:#a2a2a2;"></div><svg class="a" style="left:1878.50px;top:196.30px;overflow:visible;" width="26.00" height="17.00" viewBox="1878.50 196.30 26.00 17.00"><path d="M1885.0 201.55 L1891.5 208.05 L1898.0 201.55" fill="none" stroke="#262626" stroke-width="1.3"/></svg><div class="a" style="left:580.00px;top:226.00px;width:773.00px;height:18.00px;background:#6b6b6b;"></div><svg class="a" style="left:440.00px;top:222.00px;overflow:visible;" width="1040.00" height="30.00" viewBox="440.00 222.00 1040.00 30.00"><rect x="452.4" y="232" width="1.3" height="7.5" fill="#e8e8e8"/><rect x="467.3" y="234.6" width="1.4" height="2.8" fill="#e8e8e8"/><rect x="482.3" y="234.6" width="1.4" height="2.8" fill="#e8e8e8"/><rect x="497.3" y="234.6" width="1.4" height="2.8" fill="#e8e8e8"/><rect x="512.4" y="232" width="1.3" height="7.5" fill="#e8e8e8"/><rect x="527.3" y="234.6" width="1.4" height="2.8" fill="#e8e8e8"/><rect x="542.3" y="234.6" width="1.4" height="2.8" fill="#e8e8e8"/><rect x="557.3" y="234.6" width="1.4" height="2.8" fill="#e8e8e8"/><rect x="572.4" y="232" width="1.3" height="7.5" fill="#e8e8e8"/><rect x="587.3" y="234.6" width="1.4" height="2.8" fill="#e8e8e8"/><rect x="602.3" y="234.6" width="1.4" height="2.8" fill="#e8e8e8"/><rect x="617.3" y="234.6" width="1.4" height="2.8" fill="#e8e8e8"/><rect x="632.4" y="232" width="1.3" height="7.5" fill="#e8e8e8"/><rect x="647.3" y="234.6" width="1.4" height="2.8" fill="#e8e8e8"/><rect x="662.3" y="234.6" width="1.4" height="2.8" fill="#e8e8e8"/><rect x="677.3" y="234.6" width="1.4" height="2.8" fill="#e8e8e8"/><rect x="707.3" y="234.6" width="1.4" height="2.8" fill="#e8e8e8"/><rect x="722.3" y="234.6" width="1.4" height="2.8" fill="#e8e8e8"/><rect x="737.3" y="234.6" width="1.4" height="2.8" fill="#e8e8e8"/><rect x="752.4" y="232" width="1.3" height="7.5" fill="#e8e8e8"/><rect x="767.3" y="234.6" width="1.4" height="2.8" fill="#e8e8e8"/><rect x="782.3" y="234.6" width="1.4" height="2.8" fill="#e8e8e8"/><rect x="797.3" y="234.6" width="1.4" height="2.8" fill="#e8e8e8"/><rect x="827.3" y="234.6" width="1.4" height="2.8" fill="#e8e8e8"/><rect x="842.3" y="234.6" width="1.4" height="2.8" fill="#e8e8e8"/><rect x="857.3" y="234.6" width="1.4" height="2.8" fill="#e8e8e8"/><rect x="872.4" y="232" width="1.3" height="7.5" fill="#e8e8e8"/><rect x="887.3" y="234.6" width="1.4" height="2.8" fill="#e8e8e8"/><rect x="902.3" y="234.6" width="1.4" height="2.8" fill="#e8e8e8"/><rect x="917.3" y="234.6" width="1.4" height="2.8" fill="#e8e8e8"/><rect x="947.3" y="234.6" width="1.4" height="2.8" fill="#e8e8e8"/><rect x="962.3" y="234.6" width="1.4" height="2.8" fill="#e8e8e8"/><rect x="977.3" y="234.6" width="1.4" height="2.8" fill="#e8e8e8"/><rect x="992.4" y="232" width="1.3" height="7.5" fill="#e8e8e8"/><rect x="1007.3" y="234.6" width="1.4" height="2.8" fill="#e8e8e8"/><rect x="1022.3" y="234.6" width="1.4" height="2.8" fill="#e8e8e8"/><rect x="1037.3" y="234.6" width="1.4" height="2.8" fill="#e8e8e8"/><rect x="1067.3" y="234.6" width="1.4" height="2.8" fill="#e8e8e8"/><rect x="1082.3" y="234.6" width="1.4" height="2.8" fill="#e8e8e8"/><rect x="1097.3" y="234.6" width="1.4" height="2.8" fill="#e8e8e8"/><rect x="1112.4" y="232" width="1.3" height="7.5" fill="#e8e8e8"/><rect x="1127.3" y="234.6" width="1.4" height="2.8" fill="#e8e8e8"/><rect x="1142.3" y="234.6" width="1.4" height="2.8" fill="#e8e8e8"/><rect x="1157.3" y="234.6" width="1.4" height="2.8" fill="#e8e8e8"/><rect x="1187.3" y="234.6" width="1.4" height="2.8" fill="#e8e8e8"/><rect x="1202.3" y="234.6" width="1.4" height="2.8" fill="#e8e8e8"/><rect x="1217.3" y="234.6" width="1.4" height="2.8" fill="#e8e8e8"/><rect x="1232.4" y="232" width="1.3" height="7.5" fill="#e8e8e8"/><rect x="1247.3" y="234.6" width="1.4" height="2.8" fill="#e8e8e8"/><rect x="1262.3" y="234.6" width="1.4" height="2.8" fill="#e8e8e8"/><rect x="1277.3" y="234.6" width="1.4" height="2.8" fill="#e8e8e8"/><rect x="1307.3" y="234.6" width="1.4" height="2.8" fill="#e8e8e8"/><rect x="1322.3" y="234.6" width="1.4" height="2.8" fill="#e8e8e8"/><rect x="1337.3" y="234.6" width="1.4" height="2.8" fill="#e8e8e8"/><rect x="1352.4" y="232" width="1.3" height="7.5" fill="#e8e8e8"/><rect x="1367.3" y="234.6" width="1.4" height="2.8" fill="#e8e8e8"/><rect x="1382.3" y="234.6" width="1.4" height="2.8" fill="#e8e8e8"/><rect x="1397.3" y="234.6" width="1.4" height="2.8" fill="#e8e8e8"/><rect x="1412.4" y="232" width="1.3" height="7.5" fill="#e8e8e8"/><rect x="1427.3" y="234.6" width="1.4" height="2.8" fill="#e8e8e8"/><rect x="1442.3" y="234.6" width="1.4" height="2.8" fill="#e8e8e8"/><rect x="1457.3" y="234.6" width="1.4" height="2.8" fill="#e8e8e8"/></svg><div id="t311" class="a tx" style="top:228.85px;font-size:13px;line-height:13px;color:#e8e8e8;left:689.50px;transform:scaleX(0.9682);">1</div><div id="t312" class="a tx" style="top:228.85px;font-size:13px;line-height:13px;color:#e8e8e8;left:809.50px;transform:scaleX(0.9682);">2</div><div id="t313" class="a tx" style="top:228.85px;font-size:13px;line-height:13px;color:#e8e8e8;left:929.50px;transform:scaleX(0.9682);">3</div><div id="t314" class="a tx" style="top:228.85px;font-size:13px;line-height:13px;color:#e8e8e8;left:1049.50px;transform:scaleX(0.9682);">4</div><div id="t315" class="a tx" style="top:228.85px;font-size:13px;line-height:13px;color:#e8e8e8;left:1169.50px;transform:scaleX(0.9682);">5</div><div id="t316" class="a tx" style="top:228.85px;font-size:13px;line-height:13px;color:#e8e8e8;left:1289.50px;transform:scaleX(0.9682);">6</div><svg class="a" style="left:566.00px;top:224.00px;overflow:visible;" width="16.00" height="28.00" viewBox="566.00 224.00 16.00 28.00"><path d="M567.7 225.5 H580.3 V229 L574 236 L567.7 229 Z" fill="#c9c9c9"/><path d="M574 236 L580.3 242.5 V245.5 H567.7 V242.5 Z" fill="#c9c9c9"/><rect x="567.7" y="246.5" width="12.6" height="5.5" fill="#c9c9c9"/></svg><svg class="a" style="left:1346.00px;top:235.00px;overflow:visible;" width="15.00" height="12.00" viewBox="1346.00 235.00 15.00 12.00"><path d="M1353.5 236.3 L1359.8 241.5 V245.2 H1347.2 V241.5 Z" fill="#c4c4c4"/></svg><svg class="a" style="left:9.00px;top:232.00px;overflow:visible;" width="10.00" height="11.00" viewBox="9.00 232.00 10.00 11.00"><path d="M11.3 233.6 V241 H17.7" fill="none" stroke="#f0f0f0" stroke-width="2.2"/></svg><div class="a" style="left:0.00px;top:251.00px;width:1920.00px;height:1.00px;background:#6a6a6a;"></div><div class="a" style="left:28.80px;top:222.00px;width:1.00px;height:901.00px;background:#666666;"></div><div class="a" style="left:4.00px;top:291.00px;width:19.00px;height:832.00px;background:#6b6b6b;"></div><svg class="a" style="left:0.00px;top:252.00px;overflow:visible;" width="30.00" height="871.00" viewBox="0.00 252.00 30.00 871.00"><rect x="13.6" y="259.8" width="2.8" height="1.4" fill="#e8e8e8"/><rect x="13.6" y="274.8" width="2.8" height="1.4" fill="#e8e8e8"/><rect x="13.6" y="304.8" width="2.8" height="1.4" fill="#e8e8e8"/><rect x="13.6" y="319.8" width="2.8" height="1.4" fill="#e8e8e8"/><rect x="13.6" y="334.8" width="2.8" height="1.4" fill="#e8e8e8"/><rect x="11.5" y="350.5" width="7" height="1.2" fill="#e8e8e8"/><rect x="13.6" y="364.8" width="2.8" height="1.4" fill="#e8e8e8"/><rect x="13.6" y="379.8" width="2.8" height="1.4" fill="#e8e8e8"/><rect x="13.6" y="394.8" width="2.8" height="1.4" fill="#e8e8e8"/><rect x="13.6" y="424.8" width="2.8" height="1.4" fill="#e8e8e8"/><rect x="13.6" y="439.8" width="2.8" height="1.4" fill="#e8e8e8"/><rect x="13.6" y="454.8" width="2.8" height="1.4" fill="#e8e8e8"/><rect x="11.5" y="470.5" width="7" height="1.2" fill="#e8e8e8"/><rect x="13.6" y="484.8" width="2.8" height="1.4" fill="#e8e8e8"/><rect x="13.6" y="499.8" width="2.8" height="1.4" fill="#e8e8e8"/><rect x="13.6" y="514.8" width="2.8" height="1.4" fill="#e8e8e8"/><rect x="13.6" y="544.8" width="2.8" height="1.4" fill="#e8e8e8"/><rect x="13.6" y="559.8" width="2.8" height="1.4" fill="#e8e8e8"/><rect x="13.6" y="574.8" width="2.8" height="1.4" fill="#e8e8e8"/><rect x="11.5" y="590.5" width="7" height="1.2" fill="#e8e8e8"/><rect x="13.6" y="604.8" width="2.8" height="1.4" fill="#e8e8e8"/><rect x="13.6" y="619.8" width="2.8" height="1.4" fill="#e8e8e8"/><rect x="13.6" y="634.8" width="2.8" height="1.4" fill="#e8e8e8"/><rect x="13.6" y="664.8" width="2.8" height="1.4" fill="#e8e8e8"/><rect x="13.6" y="679.8" width="2.8" height="1.4" fill="#e8e8e8"/><rect x="13.6" y="694.8" width="2.8" height="1.4" fill="#e8e8e8"/><rect x="11.5" y="710.5" width="7" height="1.2" fill="#e8e8e8"/><rect x="13.6" y="724.8" width="2.8" height="1.4" fill="#e8e8e8"/><rect x="13.6" y="739.8" width="2.8" height="1.4" fill="#e8e8e8"/><rect x="13.6" y="754.8" width="2.8" height="1.4" fill="#e8e8e8"/><rect x="13.6" y="784.8" width="2.8" height="1.4" fill="#e8e8e8"/><rect x="13.6" y="799.8" width="2.8" height="1.4" fill="#e8e8e8"/><rect x="13.6" y="814.8" width="2.8" height="1.4" fill="#e8e8e8"/><rect x="11.5" y="830.5" width="7" height="1.2" fill="#e8e8e8"/><rect x="13.6" y="844.8" width="2.8" height="1.4" fill="#e8e8e8"/><rect x="13.6" y="859.8" width="2.8" height="1.4" fill="#e8e8e8"/><rect x="13.6" y="874.8" width="2.8" height="1.4" fill="#e8e8e8"/><rect x="13.6" y="904.8" width="2.8" height="1.4" fill="#e8e8e8"/><rect x="13.6" y="919.8" width="2.8" height="1.4" fill="#e8e8e8"/><rect x="13.6" y="934.8" width="2.8" height="1.4" fill="#e8e8e8"/><rect x="11.5" y="950.5" width="7" height="1.2" fill="#e8e8e8"/><rect x="13.6" y="964.8" width="2.8" height="1.4" fill="#e8e8e8"/><rect x="13.6" y="979.8" width="2.8" height="1.4" fill="#e8e8e8"/><rect x="13.6" y="994.8" width="2.8" height="1.4" fill="#e8e8e8"/><rect x="13.6" y="1024.8" width="2.8" height="1.4" fill="#e8e8e8"/><rect x="13.6" y="1039.8" width="2.8" height="1.4" fill="#e8e8e8"/><rect x="13.6" y="1054.8" width="2.8" height="1.4" fill="#e8e8e8"/><rect x="11.5" y="1070.5" width="7" height="1.2" fill="#e8e8e8"/><rect x="13.6" y="1084.8" width="2.8" height="1.4" fill="#e8e8e8"/><rect x="13.6" y="1099.8" width="2.8" height="1.4" fill="#e8e8e8"/><rect x="13.6" y="1114.8" width="2.8" height="1.4" fill="#e8e8e8"/></svg><div class="a" style="left:8px;top:404px;width:14px;height:14px;"><div id="t317" class="a tx" style="top:0.65px;font-size:13px;line-height:13px;color:#e8e8e8;left:3.50px;transform:scaleX(0.9682);transform-origin:50% 50%;rotate:-90deg">1</div></div><div class="a" style="left:8px;top:524px;width:14px;height:14px;"><div id="t318" class="a tx" style="top:0.65px;font-size:13px;line-height:13px;color:#e8e8e8;left:3.50px;transform:scaleX(0.9682);transform-origin:50% 50%;rotate:-90deg">2</div></div><div class="a" style="left:8px;top:644px;width:14px;height:14px;"><div id="t319" class="a tx" style="top:0.65px;font-size:13px;line-height:13px;color:#e8e8e8;left:3.50px;transform:scaleX(0.9682);transform-origin:50% 50%;rotate:-90deg">3</div></div><div class="a" style="left:8px;top:764px;width:14px;height:14px;"><div id="t320" class="a tx" style="top:0.65px;font-size:13px;line-height:13px;color:#e8e8e8;left:3.50px;transform:scaleX(0.9682);transform-origin:50% 50%;rotate:-90deg">4</div></div><div class="a" style="left:8px;top:884px;width:14px;height:14px;"><div id="t321" class="a tx" style="top:0.65px;font-size:13px;line-height:13px;color:#e8e8e8;left:3.50px;transform:scaleX(0.9682);transform-origin:50% 50%;rotate:-90deg">5</div></div><div class="a" style="left:8px;top:1004px;width:14px;height:14px;"><div id="t322" class="a tx" style="top:0.65px;font-size:13px;line-height:13px;color:#e8e8e8;left:3.50px;transform:scaleX(0.9682);transform-origin:50% 50%;rotate:-90deg">6</div></div><div class="a" style="left:30px;top:252px;width:1890px;height:871px;overflow:hidden"><div class="a" style="left:-30px;top:-252px;width:1920px;height:1200px"><div class="a" style="left:454.50px;top:252.00px;width:1019.00px;height:871.00px;background:#ffffff;"></div><div class="a" style="left:574px;top:290px;width:3840px;height:1200px;transform:scale(0.203125);transform-origin:0 0;overflow:hidden"><div class="a" style="left:0;top:0;width:1920px;height:1200px;overflow:hidden"><div class="a" style="left:0.00px;top:0.00px;width:1920.00px;height:1200.00px;background:#535353;"></div><svg class="a" style="left:19.00px;top:19.00px;overflow:visible;" width="22.00" height="22.00" viewBox="19.00 19.00 22.00 22.00"><defs><linearGradient id="wg" x1="0" y1="0" x2="0" y2="1"><stop offset="0" stop-color="#41a5ee"/><stop offset="0.5" stop-color="#2b7cd3"/><stop offset="1" stop-color="#185abd"/></linearGradient></defs><rect x="24" y="20" width="16" height="20" rx="1.5" fill="url(#wg)"/><rect x="20" y="23.5" width="13.5" height="13" rx="1.5" fill="#185abd"/><path d="M22 26.5 L23.6 33.5 L25.2 28.5 L26.8 33.5 L28.4 26.5" fill="none" stroke="#fff" stroke-width="1.6"/></svg><div id="t1" class="a tx" style="top:23.07px;font-size:15px;line-height:15px;color:#b4b4b4;left:61.20px;transform:scaleX(0.9639);">AutoSave</div><svg class="a" style="left:131.00px;top:16.00px;overflow:visible;" width="56.00" height="27.00" viewBox="131.00 16.00 56.00 27.00"><rect x="132.5" y="17.5" width="53" height="24.5" rx="12.25" fill="none" stroke="#9c9c9c" stroke-width="1.3"/><circle cx="145" cy="29.7" r="9" fill="#9a9a9a"/></svg><div id="t2" class="a tx" style="top:23.36px;font-size:14px;line-height:14px;color:#a8a8a8;left:160.50px;transform:scaleX(0.9394);">Off</div><svg class="a" style="left:201.00px;top:19.00px;overflow:visible;" width="22.00" height="22.00" viewBox="201.00 19.00 22.00 22.00"><path d="M202.5 20.5 H219 L221.5 23 V39.5 H202.5 Z" fill="none" stroke="#a3a3a3" stroke-width="1.2"/><rect x="206" y="20.5" width="11" height="6.5" fill="none" stroke="#a3a3a3" stroke-width="1.2"/><rect x="206" y="32" width="11" height="7.5" fill="none" stroke="#a3a3a3" stroke-width="1.2"/></svg><svg class="a" style="left:236.00px;top:18.00px;overflow:visible;" width="22.00" height="24.00" viewBox="236.00 18.00 22.00 24.00"><path d="M238.6 20.2 V28.8 H247" fill="none" stroke="#a8a8a8" stroke-width="1.3"/><path d="M238.9 28.5 L244.7 22.4 A6.15 6.15 0 0 1 253.4 31.1 L244.9 39.6" fill="none" stroke="#a8a8a8" stroke-width="1.2"/></svg><svg class="a" style="left:261.20px;top:24.00px;overflow:visible;" width="14.00" height="11.00" viewBox="261.20 24.00 14.00 11.00"><path d="M264.7 27.75 L268.2 31.25 L271.7 27.75" fill="none" stroke="#a3a3a3" stroke-width="1.1"/></svg><svg class="a" style="left:283.00px;top:18.00px;overflow:visible;" width="24.00" height="24.00" viewBox="283.00 18.00 24.00 24.00"><path d="M285.1 20.6 H292.6 V27.7" fill="none" stroke="#a8a8a8" stroke-width="1.3"/><path d="M292.4 20.8 L288.4 23.3 A9.2 9.2 0 1 0 300.2 21.5" fill="none" stroke="#a8a8a8" stroke-width="1.2"/></svg><svg class="a" style="left:323.00px;top:25.00px;overflow:visible;" width="13.00" height="12.00" viewBox="323.00 25.00 13.00 12.00"><path d="M325.3 27.4 H334" stroke="#a8a8a8" stroke-width="1"/><path d="M325.8 31 L329.6 34.7 L333.5 31" fill="none" stroke="#a8a8a8" stroke-width="1.1"/></svg><div id="t3" class="a tx" style="top:23.07px;font-size:15px;line-height:15px;color:#b4b4b4;left:365.00px;">Document1&nbsp;&nbsp;-&nbsp;&nbsp;Word</div><div class="a" style="left:711.00px;top:10.00px;width:517.00px;height:40.00px;background:linear-gradient(90deg,#6b6b6b,#7a7a7a);border-radius:4px"></div><svg class="a" style="left:736.00px;top:18.00px;overflow:visible;" width="24.00" height="23.00" viewBox="736.00 18.00 24.00 23.00"><circle cx="750.5" cy="26" r="5.8" fill="none" stroke="#c4c4c4" stroke-width="1.3"/><path d="M746.5 30 L739 38" stroke="#c4c4c4" stroke-width="1.3"/></svg><div id="t4" class="a tx" style="top:21.00px;font-size:17px;line-height:17px;color:#c6c6c6;left:773.40px;transform:scaleX(0.9338);">Search</div><div id="t5" class="a tx" style="top:23.07px;font-size:15px;line-height:15px;color:#b0b0b0;left:1573.60px;transform:scaleX(0.9683);">Taline Kuyumjian</div><svg class="a" style="left:1694.00px;top:14.00px;overflow:visible;" width="32.00" height="32.00" viewBox="1694.00 14.00 32.00 32.00"><circle cx="1710" cy="30" r="15.2" fill="#d3d3d3"/><circle cx="1710" cy="26" r="5.2" fill="none" stroke="#8e8e8e" stroke-width="1.2"/><path d="M1701.5 38.5 C1702.5 33 1706 31.5 1710 31.5 C1714 31.5 1717.5 33 1718.5 38.5" fill="none" stroke="#8e8e8e" stroke-width="1.2"/></svg><div class="a" style="left:1763.50px;top:29.00px;width:13.00px;height:1.20px;background:#a8a8a8;"></div><svg class="a" style="left:1822.00px;top:22.00px;overflow:visible;" width="16.00" height="16.00" viewBox="1822.00 22.00 16.00 16.00"><rect x="1823.6" y="25.8" width="10" height="10" rx="1.5" fill="none" stroke="#a8a8a8" stroke-width="1.1"/><path d="M1826 23.8 H1834 A2 2 0 0 1 1836 25.8 V33.5" fill="none" stroke="#a8a8a8" stroke-width="1.1"/></svg><svg class="a" style="left:1883.00px;top:23.00px;overflow:visible;" width="14.00" height="14.00" viewBox="1883.00 23.00 14.00 14.00"><path d="M1884 24 L1896 36 M1896 24 L1884 36" stroke="#a8a8a8" stroke-width="1.2"/></svg><div id="t6" class="a tx" style="top:71.55px;font-size:17.5px;line-height:17.5px;color:#ffffff;left:27.30px;transform:scaleX(0.8759);">File</div><div id="t7" class="a tx" style="top:71.55px;font-size:17.5px;line-height:17.5px;color:#ffffff;left:154.00px;transform:scaleX(0.9733);">Insert</div><div id="t8" class="a tx" style="top:71.55px;font-size:17.5px;line-height:17.5px;color:#ffffff;left:220.50px;transform:scaleX(0.9428);">Draw</div><div id="t9" class="a tx" style="top:71.55px;font-size:17.5px;line-height:17.5px;color:#ffffff;left:283.20px;transform:scaleX(0.9326);">Design</div><div id="t10" class="a tx" style="top:71.55px;font-size:17.5px;line-height:17.5px;color:#ffffff;left:358.00px;transform:scaleX(0.9516);">Layout</div><div id="t11" class="a tx" style="top:71.55px;font-size:17.5px;line-height:17.5px;color:#ffffff;left:434.00px;transform:scaleX(0.9163);">References</div><div id="t12" class="a tx" style="top:71.55px;font-size:17.5px;line-height:17.5px;color:#ffffff;left:540.00px;transform:scaleX(0.9815);">Mailings</div><div id="t13" class="a tx" style="top:71.55px;font-size:17.5px;line-height:17.5px;color:#ffffff;left:628.00px;transform:scaleX(0.9063);">Review</div><div id="t14" class="a tx" style="top:71.55px;font-size:17.5px;line-height:17.5px;color:#ffffff;left:705.00px;transform:scaleX(0.9571);">View</div><div id="t15" class="a tx" style="top:71.55px;font-size:17.5px;line-height:17.5px;color:#ffffff;left:765.00px;transform:scaleX(0.9725);">Help</div><div id="t16" class="a tx" style="top:71.55px;font-size:17.5px;line-height:17.5px;color:#ffffff;font-weight:700;left:84.40px;transform:scaleX(0.9543);">Home</div><div class="a" style="left:84.40px;top:92.20px;width:47.30px;height:2.40px;background:#a9c5f2;border-radius:1.5px"></div><div class="a" style="left:1550.60px;top:64.50px;width:123.90px;height:28.90px;background:#c0c0c0;border-radius:4px;box-shadow:0 1px 1.5px rgba(0,0,0,0.35)"></div><svg class="a" style="left:1559.00px;top:70.00px;overflow:visible;" width="17.00" height="18.00" viewBox="1559.00 70.00 17.00 18.00"><path d="M1561.4 72.4 H1573.7 V80.4 H1566 L1562.6 84 V80.4 H1561.4 Z" fill="none" stroke="#1f1f1f" stroke-width="1.1"/></svg><div id="t17" class="a tx" style="top:70.80px;font-size:17px;line-height:17px;color:#1f1f1f;left:1580.60px;">Comments</div><div class="a" style="left:1685.30px;top:64.50px;width:108.10px;height:28.90px;background:#c0c0c0;border-radius:4px;box-shadow:0 1px 1.5px rgba(0,0,0,0.35)"></div><svg class="a" style="left:1688.00px;top:67.00px;overflow:visible;" width="23.00" height="24.00" viewBox="1688.00 67.00 23.00 24.00"><path d="M1691 88.5 L1692.5 82 L1704.5 70 A2.2 2.2 0 0 1 1708.5 74 L1696.5 86 Z M1702 72.5 L1706 76.5" fill="none" stroke="#262626" stroke-width="1.2"/></svg><div id="t18" class="a tx" style="top:70.80px;font-size:17px;line-height:17px;color:#1f1f1f;left:1715.50px;transform:scaleX(0.9946);">Editing</div><svg class="a" style="left:1769.50px;top:72.50px;overflow:visible;" width="16.00" height="12.00" viewBox="1769.50 72.50 16.00 12.00"><path d="M1773.5 76.5 L1777.5 80.5 L1781.5 76.5" fill="none" stroke="#262626" stroke-width="1.2"/></svg><div class="a" style="left:1804.00px;top:64.20px;width:101.00px;height:29.60px;background:#85adf1;border-radius:4px;box-shadow:0 1px 1.5px rgba(0,0,0,0.35)"></div><svg class="a" style="left:1812.00px;top:70.00px;overflow:visible;" width="18.00" height="18.00" viewBox="1812.00 70.00 18.00 18.00"><path d="M1814.5 77.2 V85.5 H1825.7 V80.2" fill="none" stroke="#1f1f1f" stroke-width="1.1"/><path d="M1817 80.6 C1817.8 76 1820 74.3 1823.5 74.3 V71.5 L1828.2 76.1 L1823.6 80.3 V78.2 C1821 78.2 1819 79 1817 80.6 Z" fill="none" stroke="#1f1f1f" stroke-width="1"/></svg><div id="t19" class="a tx" style="top:70.80px;font-size:17px;line-height:17px;color:#1f1f1f;left:1834.30px;transform:scaleX(0.9258);">Share</div><svg class="a" style="left:1886.00px;top:72.50px;overflow:visible;" width="16.00" height="12.00" viewBox="1886.00 72.50 16.00 12.00"><path d="M1890.0 76.5 L1894 80.5 L1898.0 76.5" fill="none" stroke="#1f1f1f" stroke-width="1.2"/></svg><div class="a" style="left:10.00px;top:98.00px;width:1900.00px;height:124.00px;background:#bfbfbf;border-radius:9px;box-shadow:0 0 1.5px rgba(0,0,0,0.55),1px 2px 3px rgba(0,0,0,0.4)"></div><svg class="a" style="left:35.00px;top:107.00px;overflow:visible;" width="37.00" height="40.00" viewBox="35.00 107.00 37.00 40.00"><rect x="37.8" y="114.5" width="24.5" height="28.5" fill="#e8e8e8" stroke="#f0b429" stroke-width="1.8"/><path d="M43 117.5 V114 H47.5 A2.5 2.5 0 0 1 52.5 114 H57 V117.5 Z" fill="#e8e8e8" stroke="#454545" stroke-width="1.2"/><rect x="54.2" y="124.3" width="16" height="20.8" fill="#e2e2e2" stroke="#454545" stroke-width="1.3"/></svg><div id="t20" class="a tx" style="top:153.72px;font-size:14.5px;line-height:14.5px;color:#262626;left:34.40px;transform:scaleX(0.8927);">Paste</div><svg class="a" style="left:43.40px;top:173.50px;overflow:visible;" width="14.00" height="11.00" viewBox="43.40 173.50 14.00 11.00"><path d="M46.9 177.25 L50.4 180.75 L53.9 177.25" fill="none" stroke="#262626" stroke-width="1.2"/></svg><svg class="a" style="left:86.00px;top:106.00px;overflow:visible;" width="16.00" height="22.00" viewBox="86.00 106.00 16.00 22.00"><path d="M89.5 107 L97 121 M98.5 107 L91 121" stroke="#8c8c8c" stroke-width="1"/><circle cx="90.5" cy="124" r="2.5" fill="none" stroke="#8c8c8c"/><circle cx="97.5" cy="124" r="2.5" fill="none" stroke="#8c8c8c"/></svg><svg class="a" style="left:83.00px;top:138.00px;overflow:visible;" width="22.00" height="22.00" viewBox="83.00 138.00 22.00 22.00"><path d="M84.5 139.5 H91 V154.5 H84.5 Z" fill="#cfcfcf" stroke="#8c8c8c"/><path d="M89.5 142.5 H98.5 L103 147 V158.5 H89.5 Z" fill="#d8d8d8" stroke="#8c8c8c"/><path d="M92.5 150 H100 M92.5 153 H100 M92.5 156 H100" stroke="#8c8c8c" stroke-width="0.8"/></svg><svg class="a" style="left:84.00px;top:170.00px;overflow:visible;" width="21.00" height="20.00" viewBox="84.00 170.00 21.00 20.00"><path d="M95 178 L101.5 171.5 A1.5 1.5 0 0 1 103.5 173.5 L97 180 Z" fill="#e8e8e8" stroke="#3a3a3a" stroke-width="1.1"/><path d="M85.5 182.5 L92 176 L99 183 L92.5 189 Z" fill="#f0b429" stroke="#3a3a3a" stroke-width="1.1"/><path d="M88 180 L92 176 L96.5 180.5 L92.5 184 Z" fill="#e8e8e8"/></svg><div id="t21" class="a tx" style="top:203.25px;font-size:13.2px;line-height:13.2px;color:#262626;left:27.50px;transform:scaleX(1.0063);">Clipboard</div><svg class="a" style="left:103.00px;top:204.00px;overflow:visible;" width="12.00" height="12.00" viewBox="103.00 204.00 12.00 12.00"><path d="M104 215 V205 H114" fill="none" stroke="#3a3a3a" stroke-width="1"/><path d="M107 208 L113.5 214.5 M113.5 210 V214.5 H109" fill="none" stroke="#3a3a3a" stroke-width="1"/></svg><div class="a" style="left:118.20px;top:104.00px;width:1.00px;height:110.50px;background:#a2a2a2;"></div><div class="a" style="left:129.20px;top:112.00px;width:155.20px;height:29.80px;background:transparent;border:1px solid #7d7d7d;border-radius:4px"></div><div class="a" style="left:130px;top:113px;width:139px;height:28px;overflow:hidden"><div id="t22" class="a tx" style="top:7.17px;font-size:15.2px;line-height:15.2px;color:#262626;left:2.50px;transform:scaleX(1.0232);">Segoe UI Historic (Body)</div></div><svg class="a" style="left:270.50px;top:121.80px;overflow:visible;" width="14.00" height="11.00" viewBox="270.50 121.80 14.00 11.00"><path d="M274.0 125.55 L277.5 129.05 L281.0 125.55" fill="none" stroke="#262626" stroke-width="1.2"/></svg><div class="a" style="left:287.50px;top:112.00px;width:52.90px;height:29.80px;background:transparent;border:1px solid #7d7d7d;border-radius:4px"></div><div id="t23" class="a tx" style="top:120.27px;font-size:15.2px;line-height:15.2px;color:#262626;left:291.00px;transform:scaleX(0.8702);">10</div><svg class="a" style="left:326.00px;top:121.80px;overflow:visible;" width="14.00" height="11.00" viewBox="326.00 121.80 14.00 11.00"><path d="M329.5 125.55 L333 129.05 L336.5 125.55" fill="none" stroke="#262626" stroke-width="1.2"/></svg><div id="t24" class="a tx" style="top:115.04px;font-size:21px;line-height:21px;color:#4a4a4a;left:349.00px;transform:scaleX(0.9638);">A</div><svg class="a" style="left:362.00px;top:114.00px;overflow:visible;" width="8.00" height="7.00" viewBox="362.00 114.00 8.00 7.00"><path d="M363.5 119.5 L366 116.5 L368.5 119.5" fill="none" stroke="#2b6cb0" stroke-width="1.3"/></svg><div id="t25" class="a tx" style="top:118.70px;font-size:17px;line-height:17px;color:#4a4a4a;left:383.00px;transform:scaleX(1.0142);">A</div><svg class="a" style="left:393.00px;top:115.00px;overflow:visible;" width="8.00" height="7.00" viewBox="393.00 115.00 8.00 7.00"><path d="M394.5 116.5 L397 119.5 L399.5 116.5" fill="none" stroke="#2b6cb0" stroke-width="1.3"/></svg><div class="a" style="left:406.90px;top:112.00px;width:1.00px;height:29.80px;background:#a2a2a2;"></div><div id="t26" class="a tx" style="top:119.10px;font-size:17px;line-height:17px;color:#4a4a4a;left:415.50px;transform:scaleX(0.9715);">Aa</div><svg class="a" style="left:439.20px;top:121.80px;overflow:visible;" width="14.00" height="11.00" viewBox="439.20 121.80 14.00 11.00"><path d="M442.7 125.55 L446.2 129.05 L449.7 125.55" fill="none" stroke="#262626" stroke-width="1.2"/></svg><div class="a" style="left:461.80px;top:112.00px;width:1.00px;height:29.80px;background:#a2a2a2;"></div><div id="t27" class="a tx" style="top:116.51px;font-size:18px;line-height:18px;color:#4a4a4a;left:470.40px;transform:scaleX(1.0828);">A</div><svg class="a" style="left:477.00px;top:124.00px;overflow:visible;" width="14.00" height="14.00" viewBox="477.00 124.00 14.00 14.00"><path d="M478.5 131.5 L484.5 125.5 L489.5 130 L483.5 136 Z" fill="#e8e8e8" stroke="#b0287c" stroke-width="1.6"/></svg><div id="t28" class="a tx" style="top:157.64px;font-size:16.5px;line-height:16.5px;color:#4a4a4a;font-weight:700;left:139.70px;transform:scaleX(0.7553);">B</div><div id="t29" class="a tx" style="top:157.64px;font-size:16.5px;line-height:16.5px;color:#4a4a4a;font-style:italic;font-family:'Liberation Serif',serif;left:171.70px;transform:scaleX(1.4560);">I</div><div id="t30" class="a tx" style="top:157.34px;font-size:16.5px;line-height:16.5px;color:#4a4a4a;left:201.60px;transform:scaleX(0.9567);">U</div><div class="a" style="left:201.60px;top:173.20px;width:11.40px;height:1.20px;background:#4a4a4a;"></div><svg class="a" style="left:224.80px;top:162.00px;overflow:visible;" width="14.00" height="11.00" viewBox="224.80 162.00 14.00 11.00"><path d="M228.3 165.75 L231.8 169.25 L235.3 165.75" fill="none" stroke="#262626" stroke-width="1.2"/></svg><div id="t31" class="a tx" style="top:160.46px;font-size:14px;line-height:14px;color:#4a4a4a;left:250.00px;transform:scaleX(1.1944);">ab</div><div class="a" style="left:249.50px;top:168.00px;width:19.50px;height:1.00px;background:#4a4a4a;"></div><div id="t32" class="a tx" style="top:159.66px;font-size:14px;line-height:14px;color:#4a4a4a;left:287.00px;transform:scaleX(1.1429);">x</div><div id="t33" class="a tx" style="top:166.86px;font-size:9.5px;line-height:9.5px;color:#2b6cb0;font-weight:700;left:295.50px;transform:scaleX(0.9464);">2</div><div id="t34" class="a tx" style="top:159.66px;font-size:14px;line-height:14px;color:#4a4a4a;left:318.60px;transform:scaleX(1.1429);">x</div><div id="t35" class="a tx" style="top:154.86px;font-size:9.5px;line-height:9.5px;color:#2b6cb0;font-weight:700;left:327.00px;transform:scaleX(0.9464);">2</div><div class="a" style="left:339.90px;top:152.00px;width:1.00px;height:29.40px;background:#a2a2a2;"></div><div id="t36" class="a tx" style="top:157.52px;font-size:19px;line-height:19px;color:#1565c0;font-weight:700;left:348.50px;transform:scaleX(1.3847);-webkit-text-stroke:1px #0b4f9c;color:#bcd9f5">A</div><svg class="a" style="left:372.00px;top:162.00px;overflow:visible;" width="14.00" height="11.00" viewBox="372.00 162.00 14.00 11.00"><path d="M375.5 165.75 L379 169.25 L382.5 165.75" fill="none" stroke="#262626" stroke-width="1.2"/></svg><svg class="a" style="left:398.00px;top:155.00px;overflow:visible;" width="24.00" height="23.00" viewBox="398.00 155.00 24.00 23.00"><path d="M403 170 L412 160 A2.5 2.5 0 0 1 416.5 164 L407.5 173 L402 171.5 Z" fill="#e8e8e8" stroke="#3a3a3a" stroke-width="1.1"/><path d="M401 171 L404 173 L400 174" fill="#3a3a3a"/></svg><div class="a" style="left:400.00px;top:172.20px;width:20.20px;height:5.00px;background:#ffff00;"></div><svg class="a" style="left:426.30px;top:162.00px;overflow:visible;" width="14.00" height="11.00" viewBox="426.30 162.00 14.00 11.00"><path d="M429.8 165.75 L433.3 169.25 L436.8 165.75" fill="none" stroke="#262626" stroke-width="1.2"/></svg><div id="t37" class="a tx" style="top:155.75px;font-size:17.5px;line-height:17.5px;color:#4a4a4a;left:451.50px;transform:scaleX(1.6278);">A</div><div class="a" style="left:451.00px;top:172.20px;width:20.00px;height:5.00px;background:#ff0000;"></div><svg class="a" style="left:477.00px;top:162.00px;overflow:visible;" width="14.00" height="11.00" viewBox="477.00 162.00 14.00 11.00"><path d="M480.5 165.75 L484 169.25 L487.5 165.75" fill="none" stroke="#262626" stroke-width="1.2"/></svg><div id="t38" class="a tx" style="top:203.25px;font-size:13.2px;line-height:13.2px;color:#262626;left:289.60px;transform:scaleX(0.9171);">Font</div><svg class="a" style="left:489.00px;top:204.00px;overflow:visible;" width="12.00" height="12.00" viewBox="489.00 204.00 12.00 12.00"><path d="M490 215 V205 H500" fill="none" stroke="#3a3a3a" stroke-width="1"/><path d="M493 208 L499.5 214.5 M499.5 210 V214.5 H495" fill="none" stroke="#3a3a3a" stroke-width="1"/></svg><div class="a" style="left:503.80px;top:104.00px;width:1.00px;height:110.50px;background:#a2a2a2;"></div><svg class="a" style="left:510.00px;top:105.00px;overflow:visible;" width="302.00" height="80.00" viewBox="510.00 105.00 302.00 80.00"><rect x="520" y="116.9" width="4" height="4" fill="#1565c0"/><rect x="526.8" y="118.10000000000001" width="12" height="1.6" fill="#5a5a5a"/><rect x="520" y="124.5" width="4" height="4" fill="#1565c0"/><rect x="526.8" y="125.7" width="12" height="1.6" fill="#5a5a5a"/><rect x="520" y="131.8" width="4" height="4" fill="#1565c0"/><rect x="526.8" y="133.0" width="12" height="1.6" fill="#5a5a5a"/><rect x="577.4" y="118.10000000000001" width="12.4" height="1.6" fill="#5a5a5a"/><rect x="577.4" y="125.7" width="12.4" height="1.6" fill="#5a5a5a"/><rect x="577.4" y="133.0" width="12.4" height="1.6" fill="#5a5a5a"/><rect x="629" y="118.1" width="12" height="1.6" fill="#5a5a5a"/><rect x="633" y="125.7" width="8" height="1.6" fill="#5a5a5a"/><rect x="636" y="133" width="5" height="1.6" fill="#5a5a5a"/><rect x="677.9" y="118.1" width="18" height="1.6" fill="#5a5a5a"/><rect x="686.9" y="122.5" width="9" height="1.6" fill="#5a5a5a"/><rect x="686.9" y="127.5" width="9" height="1.6" fill="#5a5a5a"/><rect x="677.9" y="133" width="18" height="1.6" fill="#5a5a5a"/><rect x="709.8" y="118.1" width="18" height="1.6" fill="#5a5a5a"/><rect x="718.8" y="122.5" width="9" height="1.6" fill="#5a5a5a"/><rect x="718.8" y="127.5" width="9" height="1.6" fill="#5a5a5a"/><rect x="709.8" y="133" width="18" height="1.6" fill="#5a5a5a"/><path d="M686 126 H678.5 M681.5 122.8 L678.3 126 L681.5 129.2" fill="none" stroke="#1565c0" stroke-width="1.5"/><path d="M710 126 H717.5 M714.5 122.8 L717.7 126 L714.5 129.2" fill="none" stroke="#1565c0" stroke-width="1.5"/><path d="M761 117 V136 M757 132 L761 136.5 L765 132" fill="none" stroke="#5a5a5a" stroke-width="1.3"/><rect x="515.5" y="152.3" width="29" height="29" rx="5" fill="#c9c9c9" stroke="#8a8a8a" stroke-width="1"/><rect x="521" y="158.0" width="18" height="1.6" fill="#5a5a5a"/><rect x="553.0" y="158.0" width="18" height="1.6" fill="#5a5a5a"/><rect x="584.7" y="158.0" width="18" height="1.6" fill="#5a5a5a"/><rect x="617" y="158.0" width="18" height="1.6" fill="#5a5a5a"/><rect x="521" y="163.2" width="12" height="1.6" fill="#5a5a5a"/><rect x="556.0" y="163.2" width="12" height="1.6" fill="#5a5a5a"/><rect x="590.7" y="163.2" width="12" height="1.6" fill="#5a5a5a"/><rect x="617" y="163.2" width="18" height="1.6" fill="#5a5a5a"/><rect x="521" y="168.2" width="18" height="1.6" fill="#5a5a5a"/><rect x="553.0" y="168.2" width="18" height="1.6" fill="#5a5a5a"/><rect x="584.7" y="168.2" width="18" height="1.6" fill="#5a5a5a"/><rect x="617" y="168.2" width="18" height="1.6" fill="#5a5a5a"/><rect x="521" y="173.39999999999998" width="12" height="1.6" fill="#5a5a5a"/><rect x="556.0" y="173.39999999999998" width="12" height="1.6" fill="#5a5a5a"/><rect x="590.7" y="173.39999999999998" width="12" height="1.6" fill="#5a5a5a"/><rect x="617" y="173.39999999999998" width="18" height="1.6" fill="#5a5a5a"/><rect x="660" y="158.0" width="11" height="1.6" fill="#5a5a5a"/><rect x="660" y="163.2" width="11" height="1.6" fill="#5a5a5a"/><rect x="660" y="168.2" width="11" height="1.6" fill="#5a5a5a"/><rect x="660" y="173.39999999999998" width="11" height="1.6" fill="#5a5a5a"/><path d="M654 157 V176 M651 160 L654 157 L657 160 M651 173 L654 176 L657 173" fill="none" stroke="#1565c0" stroke-width="1.5"/><path d="M711 164 L716.5 158 L722 163.5 L716.5 169 Z" fill="#e0e0e0" stroke="#4a4a4a" stroke-width="1.1"/><path d="M719 158 C722 157 724 159 723.5 163" fill="none" stroke="#1565c0" stroke-width="1.4"/><rect x="706.5" y="172.5" width="19.5" height="3.5" fill="#e0e0e0" stroke="#a0a0a0" stroke-width="0.8"/><rect x="757.5" y="157" width="18.5" height="18" fill="none" stroke="#6a6a6a" stroke-width="0.9" stroke-dasharray="1.2 1.2"/><path d="M766.7 157 V175 M757.5 166 H776" stroke="#6a6a6a" stroke-width="0.9" stroke-dasharray="1.2 1.2"/><rect x="757" y="174.5" width="19.5" height="1.8" fill="#3a3a3a"/></svg><div id="t39" class="a tx" style="top:114.99px;font-size:8px;line-height:8px;color:#1565c0;font-weight:700;left:571.00px;transform:scaleX(0.8541);">1</div><div id="t40" class="a tx" style="top:122.59px;font-size:8px;line-height:8px;color:#1565c0;font-weight:700;left:571.00px;transform:scaleX(0.8541);">2</div><div id="t41" class="a tx" style="top:129.89px;font-size:8px;line-height:8px;color:#1565c0;font-weight:700;left:571.00px;transform:scaleX(0.8541);">3</div><div id="t42" class="a tx" style="top:115.24px;font-size:7.5px;line-height:7.5px;color:#1565c0;font-weight:700;left:622.00px;transform:scaleX(0.8391);">1</div><div id="t43" class="a tx" style="top:122.85px;font-size:8.5px;line-height:8.5px;color:#1565c0;font-weight:700;left:624.50px;transform:scaleX(1.0577);">a</div><div id="t44" class="a tx" style="top:130.84px;font-size:7.5px;line-height:7.5px;color:#1565c0;font-weight:700;left:628.00px;transform:scaleX(0.9598);">i</div><div id="t45" class="a tx" style="top:114.93px;font-size:11px;line-height:11px;color:#1565c0;left:743.80px;transform:scaleX(1.1585);">A</div><div id="t46" class="a tx" style="top:127.83px;font-size:11px;line-height:11px;color:#5a5a5a;left:744.00px;transform:scaleX(1.1906);">Z</div><div id="t47" class="a tx" style="top:118.50px;font-size:17px;line-height:17px;color:#5a5a5a;font-weight:700;left:782.50px;transform:scaleX(1.3750);">&para;</div><svg class="a" style="left:546.50px;top:121.80px;overflow:visible;" width="14.00" height="11.00" viewBox="546.50 121.80 14.00 11.00"><path d="M550.0 125.55 L553.5 129.05 L557.0 125.55" fill="none" stroke="#262626" stroke-width="1.2"/></svg><svg class="a" style="left:597.40px;top:121.80px;overflow:visible;" width="14.00" height="11.00" viewBox="597.40 121.80 14.00 11.00"><path d="M600.9 125.55 L604.4 129.05 L607.9 125.55" fill="none" stroke="#262626" stroke-width="1.2"/></svg><svg class="a" style="left:646.30px;top:121.80px;overflow:visible;" width="14.00" height="11.00" viewBox="646.30 121.80 14.00 11.00"><path d="M649.8 125.55 L653.3 129.05 L656.8 125.55" fill="none" stroke="#262626" stroke-width="1.2"/></svg><svg class="a" style="left:675.70px;top:162.00px;overflow:visible;" width="14.00" height="11.00" viewBox="675.70 162.00 14.00 11.00"><path d="M679.2 165.75 L682.7 169.25 L686.2 165.75" fill="none" stroke="#262626" stroke-width="1.2"/></svg><svg class="a" style="left:732.20px;top:162.00px;overflow:visible;" width="14.00" height="11.00" viewBox="732.20 162.00 14.00 11.00"><path d="M735.7 165.75 L739.2 169.25 L742.7 165.75" fill="none" stroke="#262626" stroke-width="1.2"/></svg><svg class="a" style="left:783.60px;top:162.00px;overflow:visible;" width="14.00" height="11.00" viewBox="783.60 162.00 14.00 11.00"><path d="M787.1 165.75 L790.6 169.25 L794.1 165.75" fill="none" stroke="#262626" stroke-width="1.2"/></svg><div class="a" style="left:669.00px;top:112.00px;width:1.00px;height:29.80px;background:#a2a2a2;"></div><div class="a" style="left:736.00px;top:112.00px;width:1.00px;height:29.80px;background:#a2a2a2;"></div><div class="a" style="left:771.10px;top:112.00px;width:1.00px;height:29.80px;background:#a2a2a2;"></div><div class="a" style="left:642.90px;top:152.30px;width:1.00px;height:29.10px;background:#a2a2a2;"></div><div class="a" style="left:698.00px;top:152.30px;width:1.00px;height:29.10px;background:#a2a2a2;"></div><div id="t48" class="a tx" style="top:203.25px;font-size:13.2px;line-height:13.2px;color:#262626;left:618.00px;transform:scaleX(0.9856);">Paragraph</div><svg class="a" style="left:798.00px;top:204.00px;overflow:visible;" width="12.00" height="12.00" viewBox="798.00 204.00 12.00 12.00"><path d="M799 215 V205 H809" fill="none" stroke="#3a3a3a" stroke-width="1"/><path d="M802 208 L808.5 214.5 M808.5 210 V214.5 H804" fill="none" stroke="#3a3a3a" stroke-width="1"/></svg><div class="a" style="left:813.10px;top:104.00px;width:1.00px;height:110.50px;background:#a2a2a2;"></div><div class="a" style="left:825.70px;top:112.40px;width:695.70px;height:73.90px;background:transparent;border:1px solid #8a8a8a;border-radius:4px"></div><div class="a" style="left:827.30px;top:114.40px;width:134.50px;height:69.10px;background:#c8c8c8;border:1px solid #8a8a8a"></div><div class="a" style="left:832.00px;top:118.90px;width:125.30px;height:60.10px;background:#ffffff;"></div><div class="a" style="left:967.00px;top:118.90px;width:125.30px;height:60.10px;background:#ffffff;"></div><div class="a" style="left:1102.00px;top:118.90px;width:125.30px;height:60.10px;background:#ffffff;"></div><div class="a" style="left:1237.00px;top:118.90px;width:125.30px;height:60.10px;background:#ffffff;"></div><div class="a" style="left:1372.00px;top:118.90px;width:125.30px;height:60.10px;background:#ffffff;"></div><div id="t49" class="a tx" style="top:140.45px;font-size:17.3px;line-height:17.3px;color:#0a0a0a;left:866.80px;transform:scaleX(0.9966);">Normal</div><svg class="a" style="left:975.00px;top:144.00px;overflow:visible;" width="9.00" height="10.00" viewBox="975.00 144.00 9.00 10.00"><circle cx="979.3" cy="149.2" r="3" fill="#0a0a0a"/></svg><div id="t50" class="a tx" style="top:140.45px;font-size:17.3px;line-height:17.3px;color:#0a0a0a;left:991.70px;transform:scaleX(0.9645);">Bulleted List</div><div class="a" style="left:1102px;top:119px;width:125px;height:60px;overflow:hidden"><div id="t51" class="a tx" style="top:21.45px;font-size:17.3px;line-height:17.3px;color:#0b3a7a;font-weight:700;left:2.60px;transform:scaleX(1.0182);">General Emph</div></div><div class="a" style="left:1237px;top:119px;width:125px;height:60px;overflow:hidden"><div id="t52" class="a tx" style="top:18.60px;font-size:26px;line-height:26px;color:#0b2550;letter-spacing:2.5px;left:3.30px;transform:scaleX(1.1682);-webkit-text-stroke:0.7px #0b2550">HEADING 1</div><div class="a" style="left:3.30px;top:43.00px;width:118.70px;height:2.50px;background:#0b2550;"></div></div><div id="t53" class="a tx" style="top:138.95px;font-size:22px;line-height:22px;color:#0d2c5e;letter-spacing:3.5px;left:1375.00px;transform:scaleX(0.9380);-webkit-text-stroke:0.8px #0d2c5e">HEADING</div><div class="a" style="left:1503.60px;top:112.40px;width:1.00px;height:73.90px;background:#8a8a8a;"></div><div class="a" style="left:1504.00px;top:137.30px;width:17.00px;height:1.00px;background:#8a8a8a;"></div><div class="a" style="left:1504.00px;top:160.70px;width:17.00px;height:1.00px;background:#8a8a8a;"></div><svg class="a" style="left:1506.00px;top:120.00px;overflow:visible;" width="13.00" height="9.00" viewBox="1506.00 120.00 13.00 9.00"><path d="M1509.3 126 L1512.5 123 L1515.7 126" fill="none" stroke="#9a9a9a" stroke-width="1"/></svg><svg class="a" style="left:1506.00px;top:145.00px;overflow:visible;" width="13.00" height="10.00" viewBox="1506.00 145.00 13.00 10.00"><path d="M1509.25 148.5 L1512.5 151.5 L1515.75 148.5" fill="none" stroke="#262626" stroke-width="1.1"/></svg><div class="a" style="left:1509.00px;top:169.50px;width:7.50px;height:1.00px;background:#262626;"></div><svg class="a" style="left:1506.00px;top:169.50px;overflow:visible;" width="13.00" height="10.00" viewBox="1506.00 169.50 13.00 10.00"><path d="M1509.25 173.0 L1512.5 176.0 L1515.75 173.0" fill="none" stroke="#262626" stroke-width="1.1"/></svg><div id="t54" class="a tx" style="top:203.25px;font-size:13.2px;line-height:13.2px;color:#262626;left:1147.75px;transform:scaleX(0.9050);">Styles</div><svg class="a" style="left:1519.60px;top:204.00px;overflow:visible;" width="12.00" height="12.00" viewBox="1519.60 204.00 12.00 12.00"><path d="M1520.6 215 V205 H1530.6" fill="none" stroke="#3a3a3a" stroke-width="1"/><path d="M1523.6 208 L1530.1 214.5 M1530.1 210 V214.5 H1525.6" fill="none" stroke="#3a3a3a" stroke-width="1"/></svg><div class="a" style="left:1535.20px;top:104.00px;width:1.00px;height:110.50px;background:#a2a2a2;"></div><svg class="a" style="left:1550.00px;top:106.00px;overflow:visible;" width="24.00" height="22.00" viewBox="1550.00 106.00 24.00 22.00"><circle cx="1564" cy="115.2" r="6.8" fill="#e0e0e0" stroke="#3a3a3a" stroke-width="1.2"/><path d="M1559 120 L1552.3 126" stroke="#3a3a3a" stroke-width="1.4"/></svg><div id="t55" class="a tx" style="top:109.98px;font-size:15.8px;line-height:15.8px;color:#262626;left:1576.50px;transform:scaleX(0.8786);">Find</div><svg class="a" style="left:1616.30px;top:111.80px;overflow:visible;" width="14.00" height="11.00" viewBox="1616.30 111.80 14.00 11.00"><path d="M1619.8 115.55 L1623.3 119.05 L1626.8 115.55" fill="none" stroke="#262626" stroke-width="1.2"/></svg><div id="t56" class="a tx" style="top:139.62px;font-size:10px;line-height:10px;color:#b0287c;left:1558.00px;transform:scaleX(1.0788);">b</div><div id="t57" class="a tx" style="top:150.62px;font-size:10px;line-height:10px;color:#1565c0;left:1563.00px;transform:scaleX(1.2000);">c</div><svg class="a" style="left:1549.00px;top:141.00px;overflow:visible;" width="13.00" height="19.00" viewBox="1549.00 141.00 13.00 19.00"><path d="M1556 146 C1551 147 1550.5 154 1555 155.5 L1559.5 155.5 M1557 153 L1559.5 155.5 L1557 158" fill="none" stroke="#1565c0" stroke-width="1.2"/></svg><div id="t58" class="a tx" style="top:142.23px;font-size:15.8px;line-height:15.8px;color:#262626;left:1576.50px;transform:scaleX(0.8972);">Replace</div><svg class="a" style="left:1552.00px;top:170.00px;overflow:visible;" width="16.00" height="22.00" viewBox="1552.00 170.00 16.00 22.00"><path d="M1553.5 172 V188 L1557.5 184.5 L1560.5 190.5 L1563 189.3 L1560 183 H1565.5 Z" fill="#e8e8e8" stroke="#3a3a3a" stroke-width="1.1"/></svg><div id="t59" class="a tx" style="top:173.68px;font-size:15.8px;line-height:15.8px;color:#262626;left:1576.50px;transform:scaleX(0.8906);">Select</div><svg class="a" style="left:1617.50px;top:175.50px;overflow:visible;" width="14.00" height="11.00" viewBox="1617.50 175.50 14.00 11.00"><path d="M1621.0 179.25 L1624.5 182.75 L1628.0 179.25" fill="none" stroke="#262626" stroke-width="1.2"/></svg><div id="t60" class="a tx" style="top:204.25px;font-size:13.2px;line-height:13.2px;color:#262626;left:1573.30px;transform:scaleX(0.9697);">Editing</div><div class="a" style="left:1649.80px;top:104.00px;width:1.00px;height:110.50px;background:#a2a2a2;"></div><svg class="a" style="left:1672.00px;top:105.00px;overflow:visible;" width="30.00" height="41.00" viewBox="1672.00 105.00 30.00 41.00"><rect x="1679.8" y="107.3" width="14" height="26.5" rx="7" fill="#a9d4f5" stroke="#1565c0" stroke-width="1.4"/><path d="M1675.5 124 C1675.5 141 1698.5 141 1698.5 124" fill="none" stroke="#5a5a5a" stroke-width="1.3"/><path d="M1687 136.5 V144.5" stroke="#5a5a5a" stroke-width="1.3"/></svg><div id="t61" class="a tx" style="top:153.08px;font-size:15.8px;line-height:15.8px;color:#262626;left:1663.70px;transform:scaleX(0.9519);">Dictate</div><svg class="a" style="left:1679.30px;top:174.30px;overflow:visible;" width="14.00" height="11.00" viewBox="1679.30 174.30 14.00 11.00"><path d="M1682.8 178.05 L1686.3 181.55 L1689.8 178.05" fill="none" stroke="#262626" stroke-width="1.2"/></svg><div id="t62" class="a tx" style="top:204.25px;font-size:13.2px;line-height:13.2px;color:#262626;left:1671.30px;transform:scaleX(0.9362);">Voice</div><div class="a" style="left:1723.00px;top:104.00px;width:1.00px;height:110.50px;background:#a2a2a2;"></div><svg class="a" style="left:1739.00px;top:105.00px;overflow:visible;" width="42.00" height="42.00" viewBox="1739.00 105.00 42.00 42.00"><path d="M1751 124 H1776 A3.5 3.5 0 0 1 1776 131 H1749 Z M1753 115 H1777 A3 3 0 0 1 1777 121 H1751 Z M1749 133 H1773 A3 3 0 0 1 1773 139.5 H1746 Z" fill="#1a5cc8"/><path d="M1741.5 144.3 L1744 135 L1762.5 109 L1768 113 L1749.5 139 Z" fill="#e8e8e8" stroke="#1a5cc8" stroke-width="1.5"/><path d="M1762.5 109 L1764 107.3 L1769.5 111 L1768 113 Z" fill="#1a5cc8"/></svg><div id="t63" class="a tx" style="top:151.28px;font-size:15.8px;line-height:15.8px;color:#262626;left:1740.80px;transform:scaleX(0.9499);">Editor</div><div id="t64" class="a tx" style="top:204.25px;font-size:13.2px;line-height:13.2px;color:#262626;left:1742.40px;">Editor</div><div class="a" style="left:1794.80px;top:104.00px;width:1.00px;height:110.50px;background:#a2a2a2;"></div><svg class="a" style="left:1814.00px;top:106.00px;overflow:visible;" width="40.00" height="40.00" viewBox="1814.00 106.00 40.00 40.00"><rect x="1817" y="109.2" width="33.7" height="33.2" fill="none" stroke="#e35d2a" stroke-width="1.9"/><rect x="1820.8" y="112.8" width="11.5" height="11.5" fill="none" stroke="#e35d2a" stroke-width="1.5"/><rect x="1835.5" y="112.8" width="11.5" height="11.5" fill="none" stroke="#e35d2a" stroke-width="1.5"/><rect x="1820.8" y="127.3" width="11.5" height="11.5" fill="none" stroke="#e35d2a" stroke-width="1.5"/><rect x="1835.5" y="127.3" width="11.5" height="11.5" fill="none" stroke="#e35d2a" stroke-width="1.5"/></svg><div id="t65" class="a tx" style="top:151.28px;font-size:15.8px;line-height:15.8px;color:#262626;left:1808.00px;transform:scaleX(0.9615);">Add-ins</div><div id="t66" class="a tx" style="top:204.25px;font-size:13.2px;line-height:13.2px;color:#262626;left:1811.00px;transform:scaleX(0.9930);">Add-ins</div><div class="a" style="left:1871.90px;top:104.00px;width:1.00px;height:110.50px;background:#a2a2a2;"></div><svg class="a" style="left:1878.50px;top:196.30px;overflow:visible;" width="26.00" height="17.00" viewBox="1878.50 196.30 26.00 17.00"><path d="M1885.0 201.55 L1891.5 208.05 L1898.0 201.55" fill="none" stroke="#262626" stroke-width="1.3"/></svg><div class="a" style="left:580.00px;top:226.00px;width:773.00px;height:18.00px;background:#6b6b6b;"></div><svg class="a" style="left:440.00px;top:222.00px;overflow:visible;" width="1040.00" height="30.00" viewBox="440.00 222.00 1040.00 30.00"><rect x="452.4" y="232" width="1.3" height="7.5" fill="#e8e8e8"/><rect x="467.3" y="234.6" width="1.4" height="2.8" fill="#e8e8e8"/><rect x="482.3" y="234.6" width="1.4" height="2.8" fill="#e8e8e8"/><rect x="497.3" y="234.6" width="1.4" height="2.8" fill="#e8e8e8"/><rect x="512.4" y="232" width="1.3" height="7.5" fill="#e8e8e8"/><rect x="527.3" y="234.6" width="1.4" height="2.8" fill="#e8e8e8"/><rect x="542.3" y="234.6" width="1.4" height="2.8" fill="#e8e8e8"/><rect x="557.3" y="234.6" width="1.4" height="2.8" fill="#e8e8e8"/><rect x="572.4" y="232" width="1.3" height="7.5" fill="#e8e8e8"/><rect x="587.3" y="234.6" width="1.4" height="2.8" fill="#e8e8e8"/><rect x="602.3" y="234.6" width="1.4" height="2.8" fill="#e8e8e8"/><rect x="617.3" y="234.6" width="1.4" height="2.8" fill="#e8e8e8"/><rect x="632.4" y="232" width="1.3" height="7.5" fill="#e8e8e8"/><rect x="647.3" y="234.6" width="1.4" height="2.8" fill="#e8e8e8"/><rect x="662.3" y="234.6" width="1.4" height="2.8" fill="#e8e8e8"/><rect x="677.3" y="234.6" width="1.4" height="2.8" fill="#e8e8e8"/><rect x="707.3" y="234.6" width="1.4" height="2.8" fill="#e8e8e8"/><rect x="722.3" y="234.6" width="1.4" height="2.8" fill="#e8e8e8"/><rect x="737.3" y="234.6" width="1.4" height="2.8" fill="#e8e8e8"/><rect x="752.4" y="232" width="1.3" height="7.5" fill="#e8e8e8"/><rect x="767.3" y="234.6" width="1.4" height="2.8" fill="#e8e8e8"/><rect x="782.3" y="234.6" width="1.4" height="2.8" fill="#e8e8e8"/><rect x="797.3" y="234.6" width="1.4" height="2.8" fill="#e8e8e8"/><rect x="827.3" y="234.6" width="1.4" height="2.8" fill="#e8e8e8"/><rect x="842.3" y="234.6" width="1.4" height="2.8" fill="#e8e8e8"/><rect x="857.3" y="234.6" width="1.4" height="2.8" fill="#e8e8e8"/><rect x="872.4" y="232" width="1.3" height="7.5" fill="#e8e8e8"/><rect x="887.3" y="234.6" width="1.4" height="2.8" fill="#e8e8e8"/><rect x="902.3" y="234.6" width="1.4" height="2.8" fill="#e8e8e8"/><rect x="917.3" y="234.6" width="1.4" height="2.8" fill="#e8e8e8"/><rect x="947.3" y="234.6" width="1.4" height="2.8" fill="#e8e8e8"/><rect x="962.3" y="234.6" width="1.4" height="2.8" fill="#e8e8e8"/><rect x="977.3" y="234.6" width="1.4" height="2.8" fill="#e8e8e8"/><rect x="992.4" y="232" width="1.3" height="7.5" fill="#e8e8e8"/><rect x="1007.3" y="234.6" width="1.4" height="2.8" fill="#e8e8e8"/><rect x="1022.3" y="234.6" width="1.4" height="2.8" fill="#e8e8e8"/><rect x="1037.3" y="234.6" width="1.4" height="2.8" fill="#e8e8e8"/><rect x="1067.3" y="234.6" width="1.4" height="2.8" fill="#e8e8e8"/><rect x="1082.3" y="234.6" width="1.4" height="2.8" fill="#e8e8e8"/><rect x="1097.3" y="234.6" width="1.4" height="2.8" fill="#e8e8e8"/><rect x="1112.4" y="232" width="1.3" height="7.5" fill="#e8e8e8"/><rect x="1127.3" y="234.6" width="1.4" height="2.8" fill="#e8e8e8"/><rect x="1142.3" y="234.6" width="1.4" height="2.8" fill="#e8e8e8"/><rect x="1157.3" y="234.6" width="1.4" height="2.8" fill="#e8e8e8"/><rect x="1187.3" y="234.6" width="1.4" height="2.8" fill="#e8e8e8"/><rect x="1202.3" y="234.6" width="1.4" height="2.8" fill="#e8e8e8"/><rect x="1217.3" y="234.6" width="1.4" height="2.8" fill="#e8e8e8"/><rect x="1232.4" y="232" width="1.3" height="7.5" fill="#e8e8e8"/><rect x="1247.3" y="234.6" width="1.4" height="2.8" fill="#e8e8e8"/><rect x="1262.3" y="234.6" width="1.4" height="2.8" fill="#e8e8e8"/><rect x="1277.3" y="234.6" width="1.4" height="2.8" fill="#e8e8e8"/><rect x="1307.3" y="234.6" width="1.4" height="2.8" fill="#e8e8e8"/><rect x="1322.3" y="234.6" width="1.4" height="2.8" fill="#e8e8e8"/><rect x="1337.3" y="234.6" width="1.4" height="2.8" fill="#e8e8e8"/><rect x="1352.4" y="232" width="1.3" height="7.5" fill="#e8e8e8"/><rect x="1367.3" y="234.6" width="1.4" height="2.8" fill="#e8e8e8"/><rect x="1382.3" y="234.6" width="1.4" height="2.8" fill="#e8e8e8"/><rect x="1397.3" y="234.6" width="1.4" height="2.8" fill="#e8e8e8"/><rect x="1412.4" y="232" width="1.3" height="7.5" fill="#e8e8e8"/><rect x="1427.3" y="234.6" width="1.4" height="2.8" fill="#e8e8e8"/><rect x="1442.3" y="234.6" width="1.4" height="2.8" fill="#e8e8e8"/><rect x="1457.3" y="234.6" width="1.4" height="2.8" fill="#e8e8e8"/></svg><div id="t67" class="a tx" style="top:228.85px;font-size:13px;line-height:13px;color:#e8e8e8;left:689.50px;transform:scaleX(0.9682);">1</div><div id="t68" class="a tx" style="top:228.85px;font-size:13px;line-height:13px;color:#e8e8e8;left:809.50px;transform:scaleX(0.9682);">2</div><div id="t69" class="a tx" style="top:228.85px;font-size:13px;line-height:13px;color:#e8e8e8;left:929.50px;transform:scaleX(0.9682);">3</div><div id="t70" class="a tx" style="top:228.85px;font-size:13px;line-height:13px;color:#e8e8e8;left:1049.50px;transform:scaleX(0.9682);">4</div><div id="t71" class="a tx" style="top:228.85px;font-size:13px;line-height:13px;color:#e8e8e8;left:1169.50px;transform:scaleX(0.9682);">5</div><div id="t72" class="a tx" style="top:228.85px;font-size:13px;line-height:13px;color:#e8e8e8;left:1289.50px;transform:scaleX(0.9682);">6</div><svg class="a" style="left:566.00px;top:224.00px;overflow:visible;" width="16.00" height="28.00" viewBox="566.00 224.00 16.00 28.00"><path d="M567.7 225.5 H580.3 V229 L574 236 L567.7 229 Z" fill="#c9c9c9"/><path d="M574 236 L580.3 242.5 V245.5 H567.7 V242.5 Z" fill="#c9c9c9"/><rect x="567.7" y="246.5" width="12.6" height="5.5" fill="#c9c9c9"/></svg><svg class="a" style="left:1346.00px;top:235.00px;overflow:visible;" width="15.00" height="12.00" viewBox="1346.00 235.00 15.00 12.00"><path d="M1353.5 236.3 L1359.8 241.5 V245.2 H1347.2 V241.5 Z" fill="#c4c4c4"/></svg><svg class="a" style="left:9.00px;top:232.00px;overflow:visible;" width="10.00" height="11.00" viewBox="9.00 232.00 10.00 11.00"><path d="M11.3 233.6 V241 H17.7" fill="none" stroke="#f0f0f0" stroke-width="2.2"/></svg><div class="a" style="left:0.00px;top:251.00px;width:1920.00px;height:1.00px;background:#6a6a6a;"></div><div class="a" style="left:28.80px;top:222.00px;width:1.00px;height:901.00px;background:#666666;"></div><div class="a" style="left:4.00px;top:291.00px;width:19.00px;height:832.00px;background:#6b6b6b;"></div><svg class="a" style="left:0.00px;top:252.00px;overflow:visible;" width="30.00" height="871.00" viewBox="0.00 252.00 30.00 871.00"><rect x="13.6" y="259.8" width="2.8" height="1.4" fill="#e8e8e8"/><rect x="13.6" y="274.8" width="2.8" height="1.4" fill="#e8e8e8"/><rect x="13.6" y="304.8" width="2.8" height="1.4" fill="#e8e8e8"/><rect x="13.6" y="319.8" width="2.8" height="1.4" fill="#e8e8e8"/><rect x="13.6" y="334.8" width="2.8" height="1.4" fill="#e8e8e8"/><rect x="11.5" y="350.5" width="7" height="1.2" fill="#e8e8e8"/><rect x="13.6" y="364.8" width="2.8" height="1.4" fill="#e8e8e8"/><rect x="13.6" y="379.8" width="2.8" height="1.4" fill="#e8e8e8"/><rect x="13.6" y="394.8" width="2.8" height="1.4" fill="#e8e8e8"/><rect x="13.6" y="424.8" width="2.8" height="1.4" fill="#e8e8e8"/><rect x="13.6" y="439.8" width="2.8" height="1.4" fill="#e8e8e8"/><rect x="13.6" y="454.8" width="2.8" height="1.4" fill="#e8e8e8"/><rect x="11.5" y="470.5" width="7" height="1.2" fill="#e8e8e8"/><rect x="13.6" y="484.8" width="2.8" height="1.4" fill="#e8e8e8"/><rect x="13.6" y="499.8" width="2.8" height="1.4" fill="#e8e8e8"/><rect x="13.6" y="514.8" width="2.8" height="1.4" fill="#e8e8e8"/><rect x="13.6" y="544.8" width="2.8" height="1.4" fill="#e8e8e8"/><rect x="13.6" y="559.8" width="2.8" height="1.4" fill="#e8e8e8"/><rect x="13.6" y="574.8" width="2.8" height="1.4" fill="#e8e8e8"/><rect x="11.5" y="590.5" width="7" height="1.2" fill="#e8e8e8"/><rect x="13.6" y="604.8" width="2.8" height="1.4" fill="#e8e8e8"/><rect x="13.6" y="619.8" width="2.8" height="1.4" fill="#e8e8e8"/><rect x="13.6" y="634.8" width="2.8" height="1.4" fill="#e8e8e8"/><rect x="13.6" y="664.8" width="2.8" height="1.4" fill="#e8e8e8"/><rect x="13.6" y="679.8" width="2.8" height="1.4" fill="#e8e8e8"/><rect x="13.6" y="694.8" width="2.8" height="1.4" fill="#e8e8e8"/><rect x="11.5" y="710.5" width="7" height="1.2" fill="#e8e8e8"/><rect x="13.6" y="724.8" width="2.8" height="1.4" fill="#e8e8e8"/><rect x="13.6" y="739.8" width="2.8" height="1.4" fill="#e8e8e8"/><rect x="13.6" y="754.8" width="2.8" height="1.4" fill="#e8e8e8"/><rect x="13.6" y="784.8" width="2.8" height="1.4" fill="#e8e8e8"/><rect x="13.6" y="799.8" width="2.8" height="1.4" fill="#e8e8e8"/><rect x="13.6" y="814.8" width="2.8" height="1.4" fill="#e8e8e8"/><rect x="11.5" y="830.5" width="7" height="1.2" fill="#e8e8e8"/><rect x="13.6" y="844.8" width="2.8" height="1.4" fill="#e8e8e8"/><rect x="13.6" y="859.8" width="2.8" height="1.4" fill="#e8e8e8"/><rect x="13.6" y="874.8" width="2.8" height="1.4" fill="#e8e8e8"/><rect x="13.6" y="904.8" width="2.8" height="1.4" fill="#e8e8e8"/><rect x="13.6" y="919.8" width="2.8" height="1.4" fill="#e8e8e8"/><rect x="13.6" y="934.8" width="2.8" height="1.4" fill="#e8e8e8"/><rect x="11.5" y="950.5" width="7" height="1.2" fill="#e8e8e8"/><rect x="13.6" y="964.8" width="2.8" height="1.4" fill="#e8e8e8"/><rect x="13.6" y="979.8" width="2.8" height="1.4" fill="#e8e8e8"/><rect x="13.6" y="994.8" width="2.8" height="1.4" fill="#e8e8e8"/><rect x="13.6" y="1024.8" width="2.8" height="1.4" fill="#e8e8e8"/><rect x="13.6" y="1039.8" width="2.8" height="1.4" fill="#e8e8e8"/><rect x="13.6" y="1054.8" width="2.8" height="1.4" fill="#e8e8e8"/><rect x="11.5" y="1070.5" width="7" height="1.2" fill="#e8e8e8"/><rect x="13.6" y="1084.8" width="2.8" height="1.4" fill="#e8e8e8"/><rect x="13.6" y="1099.8" width="2.8" height="1.4" fill="#e8e8e8"/><rect x="13.6" y="1114.8" width="2.8" height="1.4" fill="#e8e8e8"/></svg><div class="a" style="left:8px;top:404px;width:14px;height:14px;"><div id="t73" class="a tx" style="top:0.65px;font-size:13px;line-height:13px;color:#e8e8e8;left:3.50px;transform:scaleX(0.9682);transform-origin:50% 50%;rotate:-90deg">1</div></div><div class="a" style="left:8px;top:524px;width:14px;height:14px;"><div id="t74" class="a tx" style="top:0.65px;font-size:13px;line-height:13px;color:#e8e8e8;left:3.50px;transform:scaleX(0.9682);transform-origin:50% 50%;rotate:-90deg">2</div></div><div class="a" style="left:8px;top:644px;width:14px;height:14px;"><div id="t75" class="a tx" style="top:0.65px;font-size:13px;line-height:13px;color:#e8e8e8;left:3.50px;transform:scaleX(0.9682);transform-origin:50% 50%;rotate:-90deg">3</div></div><div class="a" style="left:8px;top:764px;width:14px;height:14px;"><div id="t76" class="a tx" style="top:0.65px;font-size:13px;line-height:13px;color:#e8e8e8;left:3.50px;transform:scaleX(0.9682);transform-origin:50% 50%;rotate:-90deg">4</div></div><div class="a" style="left:8px;top:884px;width:14px;height:14px;"><div id="t77" class="a tx" style="top:0.65px;font-size:13px;line-height:13px;color:#e8e8e8;left:3.50px;transform:scaleX(0.9682);transform-origin:50% 50%;rotate:-90deg">5</div></div><div class="a" style="left:8px;top:1004px;width:14px;height:14px;"><div id="t78" class="a tx" style="top:0.65px;font-size:13px;line-height:13px;color:#e8e8e8;left:3.50px;transform:scaleX(0.9682);transform-origin:50% 50%;rotate:-90deg">6</div></div><div class="a" style="left:30px;top:252px;width:1890px;height:871px;overflow:hidden"><div class="a" style="left:-30px;top:-252px;width:1920px;height:1200px"><div class="a" style="left:454.00px;top:252.00px;width:1020.00px;height:871.00px;background:#ffffff;"></div><div class="a" style="left:574px;top:96.3px;width:3840px;height:1200px;transform:scale(0.203125);transform-origin:0 0;overflow:hidden"><div class="a" style="left:0.00px;top:0.00px;width:1920.00px;height:1200.00px;background:#535353;"></div><div class="a" style="left:711.00px;top:10.00px;width:517.00px;height:40.00px;background:#767676;border-radius:4px"></div><div class="a" style="left:1550.00px;top:64.00px;width:243.00px;height:30.00px;background:#c6c6c6;"></div><div class="a" style="left:1804.00px;top:64.00px;width:101.00px;height:30.00px;background:#85adf1;"></div><div class="a" style="left:10.00px;top:98.00px;width:1900.00px;height:124.00px;background:#bfbfbf;border-radius:9px"></div><div class="a" style="left:30.00px;top:108.00px;width:780.00px;height:34.00px;background:#a8a8a8;"></div><div class="a" style="left:30.00px;top:152.00px;width:780.00px;height:30.00px;background:#acacac;"></div><div class="a" style="left:1545.00px;top:105.00px;width:355.00px;height:85.00px;background:#ababab;"></div><div class="a" style="left:832.00px;top:119.00px;width:665.00px;height:60.00px;background:#ffffff;"></div><div class="a" style="left:957.00px;top:119.00px;width:10.00px;height:60.00px;background:#c5c5c5;"></div><div class="a" style="left:1092.00px;top:119.00px;width:10.00px;height:60.00px;background:#c5c5c5;"></div><div class="a" style="left:1227.00px;top:119.00px;width:10.00px;height:60.00px;background:#c5c5c5;"></div><div class="a" style="left:1362.00px;top:119.00px;width:10.00px;height:60.00px;background:#c5c5c5;"></div><div class="a" style="left:1237.00px;top:140.00px;width:125.00px;height:20.00px;background:#6a7a96;"></div><div class="a" style="left:1375.00px;top:141.00px;width:117.00px;height:17.00px;background:#8090aa;"></div><div class="a" style="left:1816.00px;top:108.00px;width:36.00px;height:36.00px;background:#e8a080;"></div><div class="a" style="left:580.00px;top:226.00px;width:773.00px;height:18.00px;background:#6b6b6b;"></div><div class="a" style="left:454.00px;top:252.00px;width:1020.00px;height:871.00px;background:#ffffff;"></div><div class="a" style="left:0;top:252px;width:1920px;height:871px;overflow:hidden"><div class="a" style="left:574.00px;top:100.00px;width:390.00px;height:243.75px;background:#535353;"></div><div class="a" style="left:576.03px;top:119.91px;width:385.94px;height:25.19px;background:#c5c5c5;"></div><div class="a" style="left:743.00px;top:124.17px;width:135.08px;height:12.19px;background:#f4f4f4;"></div><div class="a" style="left:666.22px;top:151.19px;width:207.19px;height:176.92px;background:#ffffff;"></div><div class="a" style="left:690.59px;top:160.94px;width:79.22px;height:49.56px;background:#666666;"></div><div class="a" style="left:709.28px;top:171.30px;width:42.05px;height:35.95px;background:#e8e8e8;"></div><div class="a" style="left:769.81px;top:160.94px;width:79.22px;height:49.56px;background:#f0f0f0;"></div><div class="a" style="left:769.81px;top:205.42px;width:79.22px;height:5.08px;background:#111111;"></div><div class="a" style="left:690.59px;top:213.75px;width:79.22px;height:49.56px;background:#666666;"></div><div class="a" style="left:709.28px;top:224.11px;width:42.05px;height:35.95px;background:#e8e8e8;"></div><div class="a" style="left:769.81px;top:213.75px;width:79.22px;height:49.56px;background:#f0f0f0;"></div><div class="a" style="left:769.81px;top:258.23px;width:79.22px;height:5.08px;background:#111111;"></div><div class="a" style="left:690.59px;top:266.56px;width:79.22px;height:49.56px;background:#666666;"></div><div class="a" style="left:709.28px;top:276.92px;width:42.05px;height:35.95px;background:#e8e8e8;"></div><div class="a" style="left:769.81px;top:266.56px;width:79.22px;height:49.56px;background:#f0f0f0;"></div><div class="a" style="left:769.81px;top:311.05px;width:79.22px;height:5.08px;background:#111111;"></div><div class="a" style="left:574.00px;top:328.11px;width:390.00px;height:15.64px;background:#454443;"></div><div class="a" style="left:586.19px;top:333.59px;width:73.12px;height:10.16px;background:#e0e0e0;"></div><div class="a" style="left:964.00px;top:100.00px;width:390.00px;height:17.67px;background:#161616;"></div><div class="a" style="left:964.00px;top:117.67px;width:390.00px;height:193.58px;background:#ffffff;"></div><div class="a" style="left:968.88px;top:139.41px;width:301.64px;height:171.84px;background:#d9d9d9;"></div><div class="a" style="left:1041.59px;top:139.41px;width:156.20px;height:159.66px;background:#f7f7f7;"></div><div class="a" style="left:1275.80px;top:139.61px;width:72.31px;height:158.44px;background:#444a52;"></div><div class="a" style="left:1277.62px;top:146.11px;width:69.06px;height:149.30px;background:#f4f4f4;"></div><div class="a" style="left:964.00px;top:311.25px;width:390.00px;height:32.50px;background:#0a0a0a;"></div><div class="a" style="left:574.00px;top:348.00px;width:390.00px;height:243.75px;background:#535353;"></div><div class="a" style="left:576.03px;top:367.91px;width:385.94px;height:25.19px;background:#c5c5c5;"></div><div class="a" style="left:743.00px;top:372.17px;width:135.08px;height:12.19px;background:#f4f4f4;"></div><div class="a" style="left:666.22px;top:399.19px;width:207.19px;height:176.92px;background:#ffffff;"></div><div class="a" style="left:690.59px;top:408.94px;width:79.22px;height:49.56px;background:#666666;"></div><div class="a" style="left:709.28px;top:419.30px;width:42.05px;height:35.95px;background:#e8e8e8;"></div><div class="a" style="left:769.81px;top:408.94px;width:79.22px;height:49.56px;background:#f0f0f0;"></div><div class="a" style="left:769.81px;top:453.42px;width:79.22px;height:5.08px;background:#111111;"></div><div class="a" style="left:690.59px;top:461.75px;width:79.22px;height:49.56px;background:#666666;"></div><div class="a" style="left:709.28px;top:472.11px;width:42.05px;height:35.95px;background:#e8e8e8;"></div><div class="a" style="left:769.81px;top:461.75px;width:79.22px;height:49.56px;background:#f0f0f0;"></div><div class="a" style="left:769.81px;top:506.23px;width:79.22px;height:5.08px;background:#111111;"></div><div class="a" style="left:690.59px;top:514.56px;width:79.22px;height:49.56px;background:#666666;"></div><div class="a" style="left:709.28px;top:524.92px;width:42.05px;height:35.95px;background:#e8e8e8;"></div><div class="a" style="left:769.81px;top:514.56px;width:79.22px;height:49.56px;background:#f0f0f0;"></div><div class="a" style="left:769.81px;top:559.05px;width:79.22px;height:5.08px;background:#111111;"></div><div class="a" style="left:574.00px;top:576.11px;width:390.00px;height:15.64px;background:#454443;"></div><div class="a" style="left:586.19px;top:581.59px;width:73.12px;height:10.16px;background:#e0e0e0;"></div><div class="a" style="left:964.00px;top:348.00px;width:390.00px;height:17.67px;background:#161616;"></div><div class="a" style="left:964.00px;top:365.67px;width:390.00px;height:193.58px;background:#ffffff;"></div><div class="a" style="left:968.88px;top:387.41px;width:301.64px;height:171.84px;background:#d9d9d9;"></div><div class="a" style="left:1041.59px;top:387.41px;width:156.20px;height:159.66px;background:#f7f7f7;"></div><div class="a" style="left:1275.80px;top:387.61px;width:72.31px;height:158.44px;background:#444a52;"></div><div class="a" style="left:1277.62px;top:394.11px;width:69.06px;height:149.30px;background:#f4f4f4;"></div><div class="a" style="left:964.00px;top:559.25px;width:390.00px;height:32.50px;background:#0a0a0a;"></div><div class="a" style="left:574.00px;top:596.00px;width:390.00px;height:243.75px;background:#535353;"></div><div class="a" style="left:576.03px;top:615.91px;width:385.94px;height:25.19px;background:#c5c5c5;"></div><div class="a" style="left:743.00px;top:620.17px;width:135.08px;height:12.19px;background:#f4f4f4;"></div><div class="a" style="left:666.22px;top:647.19px;width:207.19px;height:176.92px;background:#ffffff;"></div><div class="a" style="left:690.59px;top:656.94px;width:79.22px;height:49.56px;background:#666666;"></div><div class="a" style="left:709.28px;top:667.30px;width:42.05px;height:35.95px;background:#e8e8e8;"></div><div class="a" style="left:769.81px;top:656.94px;width:79.22px;height:49.56px;background:#f0f0f0;"></div><div class="a" style="left:769.81px;top:701.42px;width:79.22px;height:5.08px;background:#111111;"></div><div class="a" style="left:690.59px;top:709.75px;width:79.22px;height:49.56px;background:#666666;"></div><div class="a" style="left:709.28px;top:720.11px;width:42.05px;height:35.95px;background:#e8e8e8;"></div><div class="a" style="left:769.81px;top:709.75px;width:79.22px;height:49.56px;background:#f0f0f0;"></div><div class="a" style="left:769.81px;top:754.23px;width:79.22px;height:5.08px;background:#111111;"></div><div class="a" style="left:690.59px;top:762.56px;width:79.22px;height:49.56px;background:#666666;"></div><div class="a" style="left:709.28px;top:772.92px;width:42.05px;height:35.95px;background:#e8e8e8;"></div><div class="a" style="left:769.81px;top:762.56px;width:79.22px;height:49.56px;background:#f0f0f0;"></div><div class="a" style="left:769.81px;top:807.05px;width:79.22px;height:5.08px;background:#111111;"></div><div class="a" style="left:574.00px;top:824.11px;width:390.00px;height:15.64px;background:#454443;"></div><div class="a" style="left:586.19px;top:829.59px;width:73.12px;height:10.16px;background:#e0e0e0;"></div><div class="a" style="left:964.00px;top:596.00px;width:390.00px;height:17.67px;background:#161616;"></div><div class="a" style="left:964.00px;top:613.67px;width:390.00px;height:193.58px;background:#ffffff;"></div><div class="a" style="left:968.88px;top:635.41px;width:301.64px;height:171.84px;background:#d9d9d9;"></div><div class="a" style="left:1041.59px;top:635.41px;width:156.20px;height:159.66px;background:#f7f7f7;"></div><div class="a" style="left:1275.80px;top:635.61px;width:72.31px;height:158.44px;background:#444a52;"></div><div class="a" style="left:1277.62px;top:642.11px;width:69.06px;height:149.30px;background:#f4f4f4;"></div><div class="a" style="left:964.00px;top:807.25px;width:390.00px;height:32.50px;background:#0a0a0a;"></div></div><div class="a" style="left:0.00px;top:1123.00px;width:1920.00px;height:27.00px;background:#4b4b4b;"></div><div class="a" style="left:0.00px;top:1150.00px;width:1920.00px;height:50.00px;background:#3c3b39;"></div><div class="a" style="left:60.00px;top:1150.00px;width:360.00px;height:50.00px;background:#f2f2f2;"></div><div class="a" style="left:325.00px;top:1155.00px;width:90.00px;height:39.00px;background:#e2e2e2;"></div><div class="a" style="left:351.00px;top:1162.00px;width:38.00px;height:27.00px;background:#e09010;"></div><div class="a" style="left:1920.00px;top:0.00px;width:1920.00px;height:40.00px;background:#000;"></div><div class="a" style="left:1920.00px;top:40.00px;width:1920.00px;height:47.00px;background:#282828;"></div><div class="a" style="left:2040.00px;top:46.00px;width:1626.00px;height:33.00px;background:#3c3c3c;border-radius:17px"></div><div class="a" style="left:1920.00px;top:87.00px;width:1920.00px;height:953.00px;background:#ffffff;"></div><div class="a" style="left:1944.00px;top:111.00px;width:132.00px;height:35.00px;background:#0b6fd3;"></div><div class="a" style="left:2092.00px;top:111.00px;width:143.00px;height:35.00px;background:#fff;border:2px solid #0b6fd3"></div><div class="a" style="left:3654.00px;top:111.00px;width:162.00px;height:35.00px;background:#0b6fd3;"></div><div class="a" style="left:1944.00px;top:194.00px;width:1485.00px;height:846.00px;background:#d9d9d9;"></div><div class="a" style="left:2302.00px;top:194.00px;width:769.00px;height:786.00px;background:#ffffff;"></div><div class="a" style="left:2316.00px;top:230.00px;width:740.00px;height:45.00px;background:#efefef;"></div><div class="a" style="left:2316.00px;top:290.00px;width:740.00px;height:45.00px;background:#efefef;"></div><div class="a" style="left:2316.00px;top:350.00px;width:740.00px;height:45.00px;background:#efefef;"></div><div class="a" style="left:2316.00px;top:410.00px;width:740.00px;height:45.00px;background:#efefef;"></div><div class="a" style="left:2316.00px;top:470.00px;width:740.00px;height:45.00px;background:#efefef;"></div><div class="a" style="left:2316.00px;top:590.00px;width:740.00px;height:45.00px;background:#efefef;"></div><div class="a" style="left:2316.00px;top:700.00px;width:740.00px;height:45.00px;background:#efefef;"></div><div class="a" style="left:2316.00px;top:760.00px;width:740.00px;height:45.00px;background:#efefef;"></div><div class="a" style="left:3455.00px;top:195.00px;width:356.00px;height:780.00px;background:#222831;border-radius:37px"></div><div class="a" style="left:3464.00px;top:227.00px;width:340.00px;height:735.00px;background:#f4f4f4;border-radius:20px"></div><div class="a" style="left:3464.00px;top:870.00px;width:340.00px;height:92.00px;background:#d9d9d9;"></div><div class="a" style="left:1920.00px;top:1040.00px;width:1920.00px;height:40.00px;background:#3d3c3a;"></div><div class="a" style="left:1920.00px;top:1080.00px;width:1920.00px;height:120.00px;background:#000000;"></div></div><div class="a" style="left:574px;top:344.7px;width:3840px;height:1200px;transform:scale(0.203125);transform-origin:0 0;overflow:hidden"><div class="a" style="left:0.00px;top:0.00px;width:1920.00px;height:1200.00px;background:#535353;"></div><div class="a" style="left:711.00px;top:10.00px;width:517.00px;height:40.00px;background:#767676;border-radius:4px"></div><div class="a" style="left:1550.00px;top:64.00px;width:243.00px;height:30.00px;background:#c6c6c6;"></div><div class="a" style="left:1804.00px;top:64.00px;width:101.00px;height:30.00px;background:#85adf1;"></div><div class="a" style="left:10.00px;top:98.00px;width:1900.00px;height:124.00px;background:#bfbfbf;border-radius:9px"></div><div class="a" style="left:30.00px;top:108.00px;width:780.00px;height:34.00px;background:#a8a8a8;"></div><div class="a" style="left:30.00px;top:152.00px;width:780.00px;height:30.00px;background:#acacac;"></div><div class="a" style="left:1545.00px;top:105.00px;width:355.00px;height:85.00px;background:#ababab;"></div><div class="a" style="left:832.00px;top:119.00px;width:665.00px;height:60.00px;background:#ffffff;"></div><div class="a" style="left:957.00px;top:119.00px;width:10.00px;height:60.00px;background:#c5c5c5;"></div><div class="a" style="left:1092.00px;top:119.00px;width:10.00px;height:60.00px;background:#c5c5c5;"></div><div class="a" style="left:1227.00px;top:119.00px;width:10.00px;height:60.00px;background:#c5c5c5;"></div><div class="a" style="left:1362.00px;top:119.00px;width:10.00px;height:60.00px;background:#c5c5c5;"></div><div class="a" style="left:1237.00px;top:140.00px;width:125.00px;height:20.00px;background:#6a7a96;"></div><div class="a" style="left:1375.00px;top:141.00px;width:117.00px;height:17.00px;background:#8090aa;"></div><div class="a" style="left:1816.00px;top:108.00px;width:36.00px;height:36.00px;background:#e8a080;"></div><div class="a" style="left:580.00px;top:226.00px;width:773.00px;height:18.00px;background:#6b6b6b;"></div><div class="a" style="left:454.00px;top:252.00px;width:1020.00px;height:452.00px;background:#ffffff;"></div><div class="a" style="left:454.00px;top:724.00px;width:1020.00px;height:399.00px;background:#ffffff;"></div><div class="a" style="left:0;top:252px;width:1920px;height:452px;overflow:hidden"><div class="a" style="left:574.00px;top:11.00px;width:390.00px;height:243.75px;background:#535353;"></div><div class="a" style="left:576.03px;top:30.91px;width:385.94px;height:25.19px;background:#c5c5c5;"></div><div class="a" style="left:743.00px;top:35.17px;width:135.08px;height:12.19px;background:#f4f4f4;"></div><div class="a" style="left:666.22px;top:62.19px;width:207.19px;height:176.92px;background:#ffffff;"></div><div class="a" style="left:690.59px;top:71.94px;width:79.22px;height:49.56px;background:#666666;"></div><div class="a" style="left:709.28px;top:82.30px;width:42.05px;height:35.95px;background:#e8e8e8;"></div><div class="a" style="left:769.81px;top:71.94px;width:79.22px;height:49.56px;background:#f0f0f0;"></div><div class="a" style="left:769.81px;top:116.42px;width:79.22px;height:5.08px;background:#111111;"></div><div class="a" style="left:690.59px;top:124.75px;width:79.22px;height:49.56px;background:#666666;"></div><div class="a" style="left:709.28px;top:135.11px;width:42.05px;height:35.95px;background:#e8e8e8;"></div><div class="a" style="left:769.81px;top:124.75px;width:79.22px;height:49.56px;background:#f0f0f0;"></div><div class="a" style="left:769.81px;top:169.23px;width:79.22px;height:5.08px;background:#111111;"></div><div class="a" style="left:690.59px;top:177.56px;width:79.22px;height:49.56px;background:#666666;"></div><div class="a" style="left:709.28px;top:187.92px;width:42.05px;height:35.95px;background:#e8e8e8;"></div><div class="a" style="left:769.81px;top:177.56px;width:79.22px;height:49.56px;background:#f0f0f0;"></div><div class="a" style="left:769.81px;top:222.05px;width:79.22px;height:5.08px;background:#111111;"></div><div class="a" style="left:574.00px;top:239.11px;width:390.00px;height:15.64px;background:#454443;"></div><div class="a" style="left:586.19px;top:244.59px;width:73.12px;height:10.16px;background:#e0e0e0;"></div><div class="a" style="left:964.00px;top:11.00px;width:390.00px;height:17.67px;background:#161616;"></div><div class="a" style="left:964.00px;top:28.67px;width:390.00px;height:193.58px;background:#ffffff;"></div><div class="a" style="left:968.88px;top:50.41px;width:301.64px;height:171.84px;background:#d9d9d9;"></div><div class="a" style="left:1041.59px;top:50.41px;width:156.20px;height:159.66px;background:#f7f7f7;"></div><div class="a" style="left:1275.80px;top:50.61px;width:72.31px;height:158.44px;background:#444a52;"></div><div class="a" style="left:1277.62px;top:57.11px;width:69.06px;height:149.30px;background:#f4f4f4;"></div><div class="a" style="left:964.00px;top:222.25px;width:390.00px;height:32.50px;background:#0a0a0a;"></div></div><div class="a" style="left:574.00px;top:840.00px;width:390.00px;height:243.75px;background:#535353;"></div><div class="a" style="left:576.03px;top:859.91px;width:385.94px;height:25.19px;background:#c5c5c5;"></div><div class="a" style="left:743.00px;top:864.17px;width:135.08px;height:12.19px;background:#f4f4f4;"></div><div class="a" style="left:666.22px;top:891.19px;width:207.19px;height:176.92px;background:#ffffff;"></div><div class="a" style="left:690.59px;top:900.94px;width:79.22px;height:49.56px;background:#666666;"></div><div class="a" style="left:709.28px;top:911.30px;width:42.05px;height:35.95px;background:#e8e8e8;"></div><div class="a" style="left:769.81px;top:900.94px;width:79.22px;height:49.56px;background:#f0f0f0;"></div><div class="a" style="left:769.81px;top:945.42px;width:79.22px;height:5.08px;background:#111111;"></div><div class="a" style="left:690.59px;top:953.75px;width:79.22px;height:49.56px;background:#666666;"></div><div class="a" style="left:709.28px;top:964.11px;width:42.05px;height:35.95px;background:#e8e8e8;"></div><div class="a" style="left:769.81px;top:953.75px;width:79.22px;height:49.56px;background:#f0f0f0;"></div><div class="a" style="left:769.81px;top:998.23px;width:79.22px;height:5.08px;background:#111111;"></div><div class="a" style="left:690.59px;top:1006.56px;width:79.22px;height:49.56px;background:#666666;"></div><div class="a" style="left:709.28px;top:1016.92px;width:42.05px;height:35.95px;background:#e8e8e8;"></div><div class="a" style="left:769.81px;top:1006.56px;width:79.22px;height:49.56px;background:#f0f0f0;"></div><div class="a" style="left:769.81px;top:1051.05px;width:79.22px;height:5.08px;background:#111111;"></div><div class="a" style="left:574.00px;top:1068.11px;width:390.00px;height:15.64px;background:#454443;"></div><div class="a" style="left:586.19px;top:1073.59px;width:73.12px;height:10.16px;background:#e0e0e0;"></div><div class="a" style="left:964.00px;top:840.00px;width:390.00px;height:17.67px;background:#161616;"></div><div class="a" style="left:964.00px;top:857.67px;width:390.00px;height:193.58px;background:#ffffff;"></div><div class="a" style="left:968.88px;top:879.41px;width:301.64px;height:171.84px;background:#d9d9d9;"></div><div class="a" style="left:1041.59px;top:879.41px;width:156.20px;height:159.66px;background:#f7f7f7;"></div><div class="a" style="left:1275.80px;top:879.61px;width:72.31px;height:158.44px;background:#444a52;"></div><div class="a" style="left:1277.62px;top:886.11px;width:69.06px;height:149.30px;background:#f4f4f4;"></div><div class="a" style="left:964.00px;top:1051.25px;width:390.00px;height:32.50px;background:#0a0a0a;"></div><div class="a" style="left:0.00px;top:1123.00px;width:1920.00px;height:27.00px;background:#4b4b4b;"></div><div class="a" style="left:0.00px;top:1150.00px;width:1920.00px;height:50.00px;background:#3c3b39;"></div><div class="a" style="left:60.00px;top:1150.00px;width:360.00px;height:50.00px;background:#f2f2f2;"></div><div class="a" style="left:325.00px;top:1155.00px;width:90.00px;height:39.00px;background:#e2e2e2;"></div><div class="a" style="left:351.00px;top:1162.00px;width:38.00px;height:27.00px;background:#e09010;"></div><div class="a" style="left:1920.00px;top:0.00px;width:1920.00px;height:40.00px;background:#000;"></div><div class="a" style="left:1920.00px;top:40.00px;width:1920.00px;height:47.00px;background:#282828;"></div><div class="a" style="left:2040.00px;top:46.00px;width:1626.00px;height:33.00px;background:#3c3c3c;border-radius:17px"></div><div class="a" style="left:1920.00px;top:87.00px;width:1920.00px;height:953.00px;background:#ffffff;"></div><div class="a" style="left:1944.00px;top:111.00px;width:132.00px;height:35.00px;background:#0b6fd3;"></div><div class="a" style="left:2092.00px;top:111.00px;width:143.00px;height:35.00px;background:#fff;border:2px solid #0b6fd3"></div><div class="a" style="left:3654.00px;top:111.00px;width:162.00px;height:35.00px;background:#0b6fd3;"></div><div class="a" style="left:1944.00px;top:194.00px;width:1485.00px;height:846.00px;background:#d9d9d9;"></div><div class="a" style="left:2302.00px;top:194.00px;width:769.00px;height:786.00px;background:#ffffff;"></div><div class="a" style="left:2316.00px;top:230.00px;width:740.00px;height:45.00px;background:#efefef;"></div><div class="a" style="left:2316.00px;top:290.00px;width:740.00px;height:45.00px;background:#efefef;"></div><div class="a" style="left:2316.00px;top:350.00px;width:740.00px;height:45.00px;background:#efefef;"></div><div class="a" style="left:2316.00px;top:410.00px;width:740.00px;height:45.00px;background:#efefef;"></div><div class="a" style="left:2316.00px;top:470.00px;width:740.00px;height:45.00px;background:#efefef;"></div><div class="a" style="left:2316.00px;top:590.00px;width:740.00px;height:45.00px;background:#efefef;"></div><div class="a" style="left:2316.00px;top:700.00px;width:740.00px;height:45.00px;background:#efefef;"></div><div class="a" style="left:2316.00px;top:760.00px;width:740.00px;height:45.00px;background:#efefef;"></div><div class="a" style="left:3455.00px;top:195.00px;width:356.00px;height:780.00px;background:#222831;border-radius:37px"></div><div class="a" style="left:3464.00px;top:227.00px;width:340.00px;height:735.00px;background:#f4f4f4;border-radius:20px"></div><div class="a" style="left:3464.00px;top:870.00px;width:340.00px;height:92.00px;background:#d9d9d9;"></div><div class="a" style="left:1920.00px;top:1040.00px;width:1920.00px;height:40.00px;background:#3d3c3a;"></div><div class="a" style="left:1920.00px;top:1080.00px;width:1920.00px;height:120.00px;background:#000000;"></div></div><div class="a" style="left:574px;top:593.1px;width:3840px;height:1200px;transform:scale(0.203125);transform-origin:0 0;overflow:hidden"><div class="a" style="left:0.00px;top:0.00px;width:1920.00px;height:1200.00px;background:#535353;"></div><div class="a" style="left:711.00px;top:10.00px;width:517.00px;height:40.00px;background:#767676;border-radius:4px"></div><div class="a" style="left:1550.00px;top:64.00px;width:243.00px;height:30.00px;background:#c6c6c6;"></div><div class="a" style="left:1804.00px;top:64.00px;width:101.00px;height:30.00px;background:#85adf1;"></div><div class="a" style="left:10.00px;top:98.00px;width:1900.00px;height:124.00px;background:#bfbfbf;border-radius:9px"></div><div class="a" style="left:30.00px;top:108.00px;width:780.00px;height:34.00px;background:#a8a8a8;"></div><div class="a" style="left:30.00px;top:152.00px;width:780.00px;height:30.00px;background:#acacac;"></div><div class="a" style="left:1545.00px;top:105.00px;width:355.00px;height:85.00px;background:#ababab;"></div><div class="a" style="left:832.00px;top:119.00px;width:665.00px;height:60.00px;background:#ffffff;"></div><div class="a" style="left:957.00px;top:119.00px;width:10.00px;height:60.00px;background:#c5c5c5;"></div><div class="a" style="left:1092.00px;top:119.00px;width:10.00px;height:60.00px;background:#c5c5c5;"></div><div class="a" style="left:1227.00px;top:119.00px;width:10.00px;height:60.00px;background:#c5c5c5;"></div><div class="a" style="left:1362.00px;top:119.00px;width:10.00px;height:60.00px;background:#c5c5c5;"></div><div class="a" style="left:1237.00px;top:140.00px;width:125.00px;height:20.00px;background:#6a7a96;"></div><div class="a" style="left:1375.00px;top:141.00px;width:117.00px;height:17.00px;background:#8090aa;"></div><div class="a" style="left:1816.00px;top:108.00px;width:36.00px;height:36.00px;background:#e8a080;"></div><div class="a" style="left:580.00px;top:226.00px;width:773.00px;height:18.00px;background:#6b6b6b;"></div><div class="a" style="left:454.00px;top:252.00px;width:1020.00px;height:248.00px;background:#ffffff;"></div><div class="a" style="left:454.00px;top:520.00px;width:1020.00px;height:603.00px;background:#ffffff;"></div><div class="a" style="left:574.00px;top:600.00px;width:390.00px;height:243.75px;background:#535353;"></div><div class="a" style="left:576.03px;top:619.91px;width:385.94px;height:25.19px;background:#c5c5c5;"></div><div class="a" style="left:743.00px;top:624.17px;width:135.08px;height:12.19px;background:#f4f4f4;"></div><div class="a" style="left:666.22px;top:651.19px;width:207.19px;height:176.92px;background:#ffffff;"></div><div class="a" style="left:690.59px;top:660.94px;width:79.22px;height:49.56px;background:#666666;"></div><div class="a" style="left:709.28px;top:671.30px;width:42.05px;height:35.95px;background:#e8e8e8;"></div><div class="a" style="left:769.81px;top:660.94px;width:79.22px;height:49.56px;background:#f0f0f0;"></div><div class="a" style="left:769.81px;top:705.42px;width:79.22px;height:5.08px;background:#111111;"></div><div class="a" style="left:690.59px;top:713.75px;width:79.22px;height:49.56px;background:#666666;"></div><div class="a" style="left:709.28px;top:724.11px;width:42.05px;height:35.95px;background:#e8e8e8;"></div><div class="a" style="left:769.81px;top:713.75px;width:79.22px;height:49.56px;background:#f0f0f0;"></div><div class="a" style="left:769.81px;top:758.23px;width:79.22px;height:5.08px;background:#111111;"></div><div class="a" style="left:690.59px;top:766.56px;width:79.22px;height:49.56px;background:#666666;"></div><div class="a" style="left:709.28px;top:776.92px;width:42.05px;height:35.95px;background:#e8e8e8;"></div><div class="a" style="left:769.81px;top:766.56px;width:79.22px;height:49.56px;background:#f0f0f0;"></div><div class="a" style="left:769.81px;top:811.05px;width:79.22px;height:5.08px;background:#111111;"></div><div class="a" style="left:574.00px;top:828.11px;width:390.00px;height:15.64px;background:#454443;"></div><div class="a" style="left:586.19px;top:833.59px;width:73.12px;height:10.16px;background:#e0e0e0;"></div><div class="a" style="left:964.00px;top:600.00px;width:390.00px;height:17.67px;background:#161616;"></div><div class="a" style="left:964.00px;top:617.67px;width:390.00px;height:193.58px;background:#ffffff;"></div><div class="a" style="left:968.88px;top:639.41px;width:301.64px;height:171.84px;background:#d9d9d9;"></div><div class="a" style="left:1041.59px;top:639.41px;width:156.20px;height:159.66px;background:#f7f7f7;"></div><div class="a" style="left:1275.80px;top:639.61px;width:72.31px;height:158.44px;background:#444a52;"></div><div class="a" style="left:1277.62px;top:646.11px;width:69.06px;height:149.30px;background:#f4f4f4;"></div><div class="a" style="left:964.00px;top:811.25px;width:390.00px;height:32.50px;background:#0a0a0a;"></div><div class="a" style="left:574.00px;top:850.00px;width:390.00px;height:243.75px;background:#535353;"></div><div class="a" style="left:576.03px;top:869.91px;width:385.94px;height:25.19px;background:#c5c5c5;"></div><div class="a" style="left:743.00px;top:874.17px;width:135.08px;height:12.19px;background:#f4f4f4;"></div><div class="a" style="left:666.22px;top:901.19px;width:207.19px;height:176.92px;background:#ffffff;"></div><div class="a" style="left:690.59px;top:910.94px;width:79.22px;height:49.56px;background:#666666;"></div><div class="a" style="left:709.28px;top:921.30px;width:42.05px;height:35.95px;background:#e8e8e8;"></div><div class="a" style="left:769.81px;top:910.94px;width:79.22px;height:49.56px;background:#f0f0f0;"></div><div class="a" style="left:769.81px;top:955.42px;width:79.22px;height:5.08px;background:#111111;"></div><div class="a" style="left:690.59px;top:963.75px;width:79.22px;height:49.56px;background:#666666;"></div><div class="a" style="left:709.28px;top:974.11px;width:42.05px;height:35.95px;background:#e8e8e8;"></div><div class="a" style="left:769.81px;top:963.75px;width:79.22px;height:49.56px;background:#f0f0f0;"></div><div class="a" style="left:769.81px;top:1008.23px;width:79.22px;height:5.08px;background:#111111;"></div><div class="a" style="left:690.59px;top:1016.56px;width:79.22px;height:49.56px;background:#666666;"></div><div class="a" style="left:709.28px;top:1026.92px;width:42.05px;height:35.95px;background:#e8e8e8;"></div><div class="a" style="left:769.81px;top:1016.56px;width:79.22px;height:49.56px;background:#f0f0f0;"></div><div class="a" style="left:769.81px;top:1061.05px;width:79.22px;height:5.08px;background:#111111;"></div><div class="a" style="left:574.00px;top:1078.11px;width:390.00px;height:15.64px;background:#454443;"></div><div class="a" style="left:586.19px;top:1083.59px;width:73.12px;height:10.16px;background:#e0e0e0;"></div><div class="a" style="left:964.00px;top:850.00px;width:390.00px;height:17.67px;background:#161616;"></div><div class="a" style="left:964.00px;top:867.67px;width:390.00px;height:193.58px;background:#ffffff;"></div><div class="a" style="left:968.88px;top:889.41px;width:301.64px;height:171.84px;background:#d9d9d9;"></div><div class="a" style="left:1041.59px;top:889.41px;width:156.20px;height:159.66px;background:#f7f7f7;"></div><div class="a" style="left:1275.80px;top:889.61px;width:72.31px;height:158.44px;background:#444a52;"></div><div class="a" style="left:1277.62px;top:896.11px;width:69.06px;height:149.30px;background:#f4f4f4;"></div><div class="a" style="left:964.00px;top:1061.25px;width:390.00px;height:32.50px;background:#0a0a0a;"></div><div class="a" style="left:0.00px;top:1123.00px;width:1920.00px;height:27.00px;background:#4b4b4b;"></div><div class="a" style="left:0.00px;top:1150.00px;width:1920.00px;height:50.00px;background:#3c3b39;"></div><div class="a" style="left:60.00px;top:1150.00px;width:360.00px;height:50.00px;background:#f2f2f2;"></div><div class="a" style="left:325.00px;top:1155.00px;width:90.00px;height:39.00px;background:#e2e2e2;"></div><div class="a" style="left:351.00px;top:1162.00px;width:38.00px;height:27.00px;background:#e09010;"></div><div class="a" style="left:1920.00px;top:0.00px;width:1920.00px;height:40.00px;background:#000;"></div><div class="a" style="left:1920.00px;top:40.00px;width:1920.00px;height:47.00px;background:#282828;"></div><div class="a" style="left:2040.00px;top:46.00px;width:1626.00px;height:33.00px;background:#3c3c3c;border-radius:17px"></div><div class="a" style="left:1920.00px;top:87.00px;width:1920.00px;height:953.00px;background:#ffffff;"></div><div class="a" style="left:1944.00px;top:111.00px;width:132.00px;height:35.00px;background:#0b6fd3;"></div><div class="a" style="left:2092.00px;top:111.00px;width:143.00px;height:35.00px;background:#fff;border:2px solid #0b6fd3"></div><div class="a" style="left:3654.00px;top:111.00px;width:162.00px;height:35.00px;background:#0b6fd3;"></div><div class="a" style="left:1944.00px;top:194.00px;width:1485.00px;height:846.00px;background:#d9d9d9;"></div><div class="a" style="left:2302.00px;top:194.00px;width:769.00px;height:786.00px;background:#ffffff;"></div><div class="a" style="left:2316.00px;top:230.00px;width:740.00px;height:45.00px;background:#efefef;"></div><div class="a" style="left:2316.00px;top:290.00px;width:740.00px;height:45.00px;background:#efefef;"></div><div class="a" style="left:2316.00px;top:350.00px;width:740.00px;height:45.00px;background:#efefef;"></div><div class="a" style="left:2316.00px;top:410.00px;width:740.00px;height:45.00px;background:#efefef;"></div><div class="a" style="left:2316.00px;top:470.00px;width:740.00px;height:45.00px;background:#efefef;"></div><div class="a" style="left:2316.00px;top:590.00px;width:740.00px;height:45.00px;background:#efefef;"></div><div class="a" style="left:2316.00px;top:700.00px;width:740.00px;height:45.00px;background:#efefef;"></div><div class="a" style="left:2316.00px;top:760.00px;width:740.00px;height:45.00px;background:#efefef;"></div><div class="a" style="left:3455.00px;top:195.00px;width:356.00px;height:780.00px;background:#222831;border-radius:37px"></div><div class="a" style="left:3464.00px;top:227.00px;width:340.00px;height:735.00px;background:#f4f4f4;border-radius:20px"></div><div class="a" style="left:3464.00px;top:870.00px;width:340.00px;height:92.00px;background:#d9d9d9;"></div><div class="a" style="left:1920.00px;top:1040.00px;width:1920.00px;height:40.00px;background:#3d3c3a;"></div><div class="a" style="left:1920.00px;top:1080.00px;width:1920.00px;height:120.00px;background:#000000;"></div></div><div class="a" style="left:574px;top:841.5px;width:3840px;height:1200px;transform:scale(0.203125);transform-origin:0 0;overflow:hidden"><div class="a" style="left:0.00px;top:0.00px;width:1920.00px;height:1200.00px;background:#535353;"></div><div class="a" style="left:711.00px;top:10.00px;width:517.00px;height:40.00px;background:#767676;border-radius:4px"></div><div class="a" style="left:1550.00px;top:64.00px;width:243.00px;height:30.00px;background:#c6c6c6;"></div><div class="a" style="left:1804.00px;top:64.00px;width:101.00px;height:30.00px;background:#85adf1;"></div><div class="a" style="left:10.00px;top:98.00px;width:1900.00px;height:124.00px;background:#bfbfbf;border-radius:9px"></div><div class="a" style="left:30.00px;top:108.00px;width:780.00px;height:34.00px;background:#a8a8a8;"></div><div class="a" style="left:30.00px;top:152.00px;width:780.00px;height:30.00px;background:#acacac;"></div><div class="a" style="left:1545.00px;top:105.00px;width:355.00px;height:85.00px;background:#ababab;"></div><div class="a" style="left:832.00px;top:119.00px;width:665.00px;height:60.00px;background:#ffffff;"></div><div class="a" style="left:957.00px;top:119.00px;width:10.00px;height:60.00px;background:#c5c5c5;"></div><div class="a" style="left:1092.00px;top:119.00px;width:10.00px;height:60.00px;background:#c5c5c5;"></div><div class="a" style="left:1227.00px;top:119.00px;width:10.00px;height:60.00px;background:#c5c5c5;"></div><div class="a" style="left:1362.00px;top:119.00px;width:10.00px;height:60.00px;background:#c5c5c5;"></div><div class="a" style="left:1237.00px;top:140.00px;width:125.00px;height:20.00px;background:#6a7a96;"></div><div class="a" style="left:1375.00px;top:141.00px;width:117.00px;height:17.00px;background:#8090aa;"></div><div class="a" style="left:1816.00px;top:108.00px;width:36.00px;height:36.00px;background:#e8a080;"></div><div class="a" style="left:580.00px;top:226.00px;width:773.00px;height:18.00px;background:#6b6b6b;"></div><div class="a" style="left:454.00px;top:252.00px;width:1020.00px;height:871.00px;background:#ffffff;"></div><div class="a" style="left:0;top:252px;width:1920px;height:871px;overflow:hidden"><div class="a" style="left:574.00px;top:100.00px;width:390.00px;height:243.75px;background:#535353;"></div><div class="a" style="left:576.03px;top:119.91px;width:385.94px;height:25.19px;background:#c5c5c5;"></div><div class="a" style="left:743.00px;top:124.17px;width:135.08px;height:12.19px;background:#f4f4f4;"></div><div class="a" style="left:666.22px;top:151.19px;width:207.19px;height:176.92px;background:#ffffff;"></div><div class="a" style="left:690.59px;top:160.94px;width:79.22px;height:49.56px;background:#666666;"></div><div class="a" style="left:709.28px;top:171.30px;width:42.05px;height:35.95px;background:#e8e8e8;"></div><div class="a" style="left:769.81px;top:160.94px;width:79.22px;height:49.56px;background:#f0f0f0;"></div><div class="a" style="left:769.81px;top:205.42px;width:79.22px;height:5.08px;background:#111111;"></div><div class="a" style="left:690.59px;top:213.75px;width:79.22px;height:49.56px;background:#666666;"></div><div class="a" style="left:709.28px;top:224.11px;width:42.05px;height:35.95px;background:#e8e8e8;"></div><div class="a" style="left:769.81px;top:213.75px;width:79.22px;height:49.56px;background:#f0f0f0;"></div><div class="a" style="left:769.81px;top:258.23px;width:79.22px;height:5.08px;background:#111111;"></div><div class="a" style="left:690.59px;top:266.56px;width:79.22px;height:49.56px;background:#666666;"></div><div class="a" style="left:709.28px;top:276.92px;width:42.05px;height:35.95px;background:#e8e8e8;"></div><div class="a" style="left:769.81px;top:266.56px;width:79.22px;height:49.56px;background:#f0f0f0;"></div><div class="a" style="left:769.81px;top:311.05px;width:79.22px;height:5.08px;background:#111111;"></div><div class="a" style="left:574.00px;top:328.11px;width:390.00px;height:15.64px;background:#454443;"></div><div class="a" style="left:586.19px;top:333.59px;width:73.12px;height:10.16px;background:#e0e0e0;"></div><div class="a" style="left:964.00px;top:100.00px;width:390.00px;height:17.67px;background:#161616;"></div><div class="a" style="left:964.00px;top:117.67px;width:390.00px;height:193.58px;background:#ffffff;"></div><div class="a" style="left:968.88px;top:139.41px;width:301.64px;height:171.84px;background:#d9d9d9;"></div><div class="a" style="left:1041.59px;top:139.41px;width:156.20px;height:159.66px;background:#f7f7f7;"></div><div class="a" style="left:1275.80px;top:139.61px;width:72.31px;height:158.44px;background:#444a52;"></div><div class="a" style="left:1277.62px;top:146.11px;width:69.06px;height:149.30px;background:#f4f4f4;"></div><div class="a" style="left:964.00px;top:311.25px;width:390.00px;height:32.50px;background:#0a0a0a;"></div><div class="a" style="left:574.00px;top:348.00px;width:390.00px;height:243.75px;background:#535353;"></div><div class="a" style="left:576.03px;top:367.91px;width:385.94px;height:25.19px;background:#c5c5c5;"></div><div class="a" style="left:743.00px;top:372.17px;width:135.08px;height:12.19px;background:#f4f4f4;"></div><div class="a" style="left:666.22px;top:399.19px;width:207.19px;height:176.92px;background:#ffffff;"></div><div class="a" style="left:690.59px;top:408.94px;width:79.22px;height:49.56px;background:#666666;"></div><div class="a" style="left:709.28px;top:419.30px;width:42.05px;height:35.95px;background:#e8e8e8;"></div><div class="a" style="left:769.81px;top:408.94px;width:79.22px;height:49.56px;background:#f0f0f0;"></div><div class="a" style="left:769.81px;top:453.42px;width:79.22px;height:5.08px;background:#111111;"></div><div class="a" style="left:690.59px;top:461.75px;width:79.22px;height:49.56px;background:#666666;"></div><div class="a" style="left:709.28px;top:472.11px;width:42.05px;height:35.95px;background:#e8e8e8;"></div><div class="a" style="left:769.81px;top:461.75px;width:79.22px;height:49.56px;background:#f0f0f0;"></div><div class="a" style="left:769.81px;top:506.23px;width:79.22px;height:5.08px;background:#111111;"></div><div class="a" style="left:690.59px;top:514.56px;width:79.22px;height:49.56px;background:#666666;"></div><div class="a" style="left:709.28px;top:524.92px;width:42.05px;height:35.95px;background:#e8e8e8;"></div><div class="a" style="left:769.81px;top:514.56px;width:79.22px;height:49.56px;background:#f0f0f0;"></div><div class="a" style="left:769.81px;top:559.05px;width:79.22px;height:5.08px;background:#111111;"></div><div class="a" style="left:574.00px;top:576.11px;width:390.00px;height:15.64px;background:#454443;"></div><div class="a" style="left:586.19px;top:581.59px;width:73.12px;height:10.16px;background:#e0e0e0;"></div><div class="a" style="left:964.00px;top:348.00px;width:390.00px;height:17.67px;background:#161616;"></div><div class="a" style="left:964.00px;top:365.67px;width:390.00px;height:193.58px;background:#ffffff;"></div><div class="a" style="left:968.88px;top:387.41px;width:301.64px;height:171.84px;background:#d9d9d9;"></div><div class="a" style="left:1041.59px;top:387.41px;width:156.20px;height:159.66px;background:#f7f7f7;"></div><div class="a" style="left:1275.80px;top:387.61px;width:72.31px;height:158.44px;background:#444a52;"></div><div class="a" style="left:1277.62px;top:394.11px;width:69.06px;height:149.30px;background:#f4f4f4;"></div><div class="a" style="left:964.00px;top:559.25px;width:390.00px;height:32.50px;background:#0a0a0a;"></div><div class="a" style="left:574.00px;top:596.00px;width:390.00px;height:243.75px;background:#535353;"></div><div class="a" style="left:576.03px;top:615.91px;width:385.94px;height:25.19px;background:#c5c5c5;"></div><div class="a" style="left:743.00px;top:620.17px;width:135.08px;height:12.19px;background:#f4f4f4;"></div><div class="a" style="left:666.22px;top:647.19px;width:207.19px;height:176.92px;background:#ffffff;"></div><div class="a" style="left:690.59px;top:656.94px;width:79.22px;height:49.56px;background:#666666;"></div><div class="a" style="left:709.28px;top:667.30px;width:42.05px;height:35.95px;background:#e8e8e8;"></div><div class="a" style="left:769.81px;top:656.94px;width:79.22px;height:49.56px;background:#f0f0f0;"></div><div class="a" style="left:769.81px;top:701.42px;width:79.22px;height:5.08px;background:#111111;"></div><div class="a" style="left:690.59px;top:709.75px;width:79.22px;height:49.56px;background:#666666;"></div><div class="a" style="left:709.28px;top:720.11px;width:42.05px;height:35.95px;background:#e8e8e8;"></div><div class="a" style="left:769.81px;top:709.75px;width:79.22px;height:49.56px;background:#f0f0f0;"></div><div class="a" style="left:769.81px;top:754.23px;width:79.22px;height:5.08px;background:#111111;"></div><div class="a" style="left:690.59px;top:762.56px;width:79.22px;height:49.56px;background:#666666;"></div><div class="a" style="left:709.28px;top:772.92px;width:42.05px;height:35.95px;background:#e8e8e8;"></div><div class="a" style="left:769.81px;top:762.56px;width:79.22px;height:49.56px;background:#f0f0f0;"></div><div class="a" style="left:769.81px;top:807.05px;width:79.22px;height:5.08px;background:#111111;"></div><div class="a" style="left:574.00px;top:824.11px;width:390.00px;height:15.64px;background:#454443;"></div><div class="a" style="left:586.19px;top:829.59px;width:73.12px;height:10.16px;background:#e0e0e0;"></div><div class="a" style="left:964.00px;top:596.00px;width:390.00px;height:17.67px;background:#161616;"></div><div class="a" style="left:964.00px;top:613.67px;width:390.00px;height:193.58px;background:#ffffff;"></div><div class="a" style="left:968.88px;top:635.41px;width:301.64px;height:171.84px;background:#d9d9d9;"></div><div class="a" style="left:1041.59px;top:635.41px;width:156.20px;height:159.66px;background:#f7f7f7;"></div><div class="a" style="left:1275.80px;top:635.61px;width:72.31px;height:158.44px;background:#444a52;"></div><div class="a" style="left:1277.62px;top:642.11px;width:69.06px;height:149.30px;background:#f4f4f4;"></div><div class="a" style="left:964.00px;top:807.25px;width:390.00px;height:32.50px;background:#0a0a0a;"></div></div><div class="a" style="left:0.00px;top:1123.00px;width:1920.00px;height:27.00px;background:#4b4b4b;"></div><div class="a" style="left:0.00px;top:1150.00px;width:1920.00px;height:50.00px;background:#3c3b39;"></div><div class="a" style="left:60.00px;top:1150.00px;width:360.00px;height:50.00px;background:#f2f2f2;"></div><div class="a" style="left:325.00px;top:1155.00px;width:90.00px;height:39.00px;background:#e2e2e2;"></div><div class="a" style="left:351.00px;top:1162.00px;width:38.00px;height:27.00px;background:#e09010;"></div><div class="a" style="left:1920.00px;top:0.00px;width:1920.00px;height:40.00px;background:#000;"></div><div class="a" style="left:1920.00px;top:40.00px;width:1920.00px;height:47.00px;background:#282828;"></div><div class="a" style="left:2040.00px;top:46.00px;width:1626.00px;height:33.00px;background:#3c3c3c;border-radius:17px"></div><div class="a" style="left:1920.00px;top:87.00px;width:1920.00px;height:953.00px;background:#ffffff;"></div><div class="a" style="left:1944.00px;top:111.00px;width:132.00px;height:35.00px;background:#0b6fd3;"></div><div class="a" style="left:2092.00px;top:111.00px;width:143.00px;height:35.00px;background:#fff;border:2px solid #0b6fd3"></div><div class="a" style="left:3654.00px;top:111.00px;width:162.00px;height:35.00px;background:#0b6fd3;"></div><div class="a" style="left:1944.00px;top:194.00px;width:1485.00px;height:846.00px;background:#d9d9d9;"></div><div class="a" style="left:2302.00px;top:194.00px;width:769.00px;height:786.00px;background:#ffffff;"></div><div class="a" style="left:2316.00px;top:230.00px;width:740.00px;height:45.00px;background:#efefef;"></div><div class="a" style="left:2316.00px;top:290.00px;width:740.00px;height:45.00px;background:#efefef;"></div><div class="a" style="left:2316.00px;top:350.00px;width:740.00px;height:45.00px;background:#efefef;"></div><div class="a" style="left:2316.00px;top:410.00px;width:740.00px;height:45.00px;background:#efefef;"></div><div class="a" style="left:2316.00px;top:470.00px;width:740.00px;height:45.00px;background:#efefef;"></div><div class="a" style="left:2316.00px;top:590.00px;width:740.00px;height:45.00px;background:#efefef;"></div><div class="a" style="left:2316.00px;top:700.00px;width:740.00px;height:45.00px;background:#efefef;"></div><div class="a" style="left:2316.00px;top:760.00px;width:740.00px;height:45.00px;background:#efefef;"></div><div class="a" style="left:3455.00px;top:195.00px;width:356.00px;height:780.00px;background:#222831;border-radius:37px"></div><div class="a" style="left:3464.00px;top:227.00px;width:340.00px;height:735.00px;background:#f4f4f4;border-radius:20px"></div><div class="a" style="left:3464.00px;top:870.00px;width:340.00px;height:92.00px;background:#d9d9d9;"></div><div class="a" style="left:1920.00px;top:1040.00px;width:1920.00px;height:40.00px;background:#3d3c3a;"></div><div class="a" style="left:1920.00px;top:1080.00px;width:1920.00px;height:120.00px;background:#000000;"></div></div><div class="a" style="left:1358.00px;top:1089.00px;width:76.00px;height:29.00px;background:#d4d4d4;border:1px solid #a9a9a9"></div><div class="a" style="left:1365.00px;top:1095.00px;width:14.00px;height:17.00px;background:#e8e8e8;border:1.5px solid #d9a520"></div><div id="t0" class="a tx" style="top:1096.23px;font-size:15.5px;line-height:15.5px;color:#1f2a44;left:1385.50px;transform:scaleX(0.9004);">(Ctrl)</div><div class="a" style="left:1422.50px;top:1101.50px;width:7.00px;height:4.00px;background:#222;"></div></div></div><div class="a" style="left:0.00px;top:1123.00px;width:1920.00px;height:27.00px;background:#505050;"></div><div class="a" style="left:0.00px;top:1122.50px;width:1920.00px;height:1.00px;background:#3c3c3c;"></div><div id="t79" class="a tx" style="top:1130.95px;font-size:13.2px;line-height:13.2px;color:#e8e8e8;left:15.20px;transform:scaleX(0.9903);">Page 1 of 1</div><div id="t80" class="a tx" style="top:1130.95px;font-size:13.2px;line-height:13.2px;color:#e8e8e8;left:106.20px;transform:scaleX(1.0166);">11 words</div><svg class="a" style="left:182.00px;top:1127.00px;overflow:visible;" width="21.00" height="20.00" viewBox="182.00 1127.00 21.00 20.00"><path d="M184.5 1129 H190.5 C192.5 1129 192.5 1131 192.5 1131 C192.5 1131 192.5 1129 194.5 1129 H200.5 V1142 H194 L192.5 1144.5 L191 1142 H184.5 Z" fill="none" stroke="#e0e0e0" stroke-width="1.1"/><path d="M192.5 1131 V1141 M194.5 1141 L197 1144 L201.5 1138" fill="none" stroke="#e0e0e0" stroke-width="1.1"/></svg><div id="t81" class="a tx" style="top:1130.95px;font-size:13.2px;line-height:13.2px;color:#e8e8e8;left:227.00px;transform:scaleX(0.9745);">Text Predictions: On</div><svg class="a" style="left:364.00px;top:1127.00px;overflow:visible;" width="23.00" height="21.00" viewBox="364.00 1127.00 23.00 21.00"><circle cx="374" cy="1130" r="2" fill="none" stroke="#e0e0e0" stroke-width="1.1"/><path d="M367 1133.5 H381 M374 1133.5 V1139 L370.5 1145 M374 1139 L377.5 1145" fill="none" stroke="#e0e0e0" stroke-width="1.1"/><path d="M377 1139 L385 1147 M385 1139 L377 1147" stroke="#e0e0e0" stroke-width="1.1"/></svg><div id="t82" class="a tx" style="top:1130.95px;font-size:13.2px;line-height:13.2px;color:#e8e8e8;font-weight:700;left:389.00px;transform:scaleX(0.9646);">Accessibility: Investigate</div><svg class="a" style="left:1343.00px;top:1126.00px;overflow:visible;" width="22.00" height="22.00" viewBox="1343.00 1126.00 22.00 22.00"><rect x="1345.5" y="1129.5" width="16.5" height="11" fill="none" stroke="#e0e0e0" stroke-width="1.1"/><circle cx="1357" cy="1142" r="3.5" fill="#4b4b4b" stroke="#e0e0e0" stroke-width="1.4" stroke-dasharray="1.5 1"/></svg><div id="t83" class="a tx" style="top:1130.95px;font-size:13.2px;line-height:13.2px;color:#e8e8e8;left:1366.00px;transform:scaleX(0.9667);">Display Settings</div><svg class="a" style="left:1477.00px;top:1126.00px;overflow:visible;" width="22.00" height="22.00" viewBox="1477.00 1126.00 22.00 22.00"><path d="M1480 1132 V1129 H1483 M1493 1129 H1496 V1132 M1496 1142 V1145 H1493 M1483 1145 H1480 V1142" fill="none" stroke="#e0e0e0" stroke-width="1.1"/><path d="M1484 1131 H1489.5 L1492.5 1134 V1143 H1484 Z" fill="none" stroke="#e0e0e0" stroke-width="1.1"/></svg><div id="t84" class="a tx" style="top:1130.95px;font-size:13.2px;line-height:13.2px;color:#e8e8e8;left:1500.50px;transform:scaleX(0.8883);">Focus</div><svg class="a" style="left:1562.00px;top:1127.00px;overflow:visible;" width="21.00" height="20.00" viewBox="1562.00 1127.00 21.00 20.00"><path d="M1564.5 1129.5 H1572.5 V1144 H1564.5 Z M1572.5 1129.5 H1580.5 V1144 H1572.5 Z" fill="none" stroke="#e0e0e0" stroke-width="1.1"/><path d="M1566.5 1133 H1570.5 M1566.5 1136 H1570.5 M1566.5 1139 H1570.5 M1574.5 1133 H1578.5 M1574.5 1136 H1578.5 M1574.5 1139 H1578.5" stroke="#e0e0e0" stroke-width="0.9"/></svg><div class="a" style="left:1598.00px;top:1124.00px;width:50.00px;height:26.00px;background:#5d5d5d;"></div><svg class="a" style="left:1613.00px;top:1127.00px;overflow:visible;" width="19.00" height="20.00" viewBox="1613.00 1127.00 19.00 20.00"><rect x="1615.5" y="1128.5" width="14" height="17" fill="none" stroke="#e0e0e0" stroke-width="1.1"/><path d="M1618 1132 H1627 M1618 1135 H1627 M1618 1138 H1627 M1618 1141 H1627" stroke="#e0e0e0" stroke-width="0.9"/></svg><svg class="a" style="left:1662.00px;top:1127.00px;overflow:visible;" width="22.00" height="21.00" viewBox="1662.00 1127.00 22.00 21.00"><rect x="1664.5" y="1128.5" width="15.5" height="16.5" fill="none" stroke="#e0e0e0" stroke-width="1.1"/><path d="M1664.5 1132 H1680 M1667 1135 H1673 M1667 1138 H1673" stroke="#e0e0e0" stroke-width="0.9"/><circle cx="1677.5" cy="1141.5" r="4.3" fill="#4b4b4b" stroke="#e0e0e0" stroke-width="1"/></svg><div class="a" style="left:1705.00px;top:1136.00px;width:10.00px;height:1.20px;background:#e0e0e0;"></div><div class="a" style="left:1721.00px;top:1136.20px;width:125.00px;height:0.80px;background:#d0d0d0;"></div><div class="a" style="left:1781.00px;top:1130.00px;width:6.00px;height:14.00px;background:#c8c8c8;"></div><div class="a" style="left:1852.00px;top:1136.00px;width:9.60px;height:1.20px;background:#e0e0e0;"></div><div class="a" style="left:1856.20px;top:1131.60px;width:1.20px;height:10.00px;background:#e0e0e0;"></div><div id="t85" class="a tx" style="top:1130.95px;font-size:13.2px;line-height:13.2px;color:#e8e8e8;left:1878.60px;transform:scaleX(0.9102);">100%</div><div class="a" style="left:0.00px;top:1150.00px;width:1920.00px;height:50.00px;background:#3e3c3a;"></div><svg class="a" style="left:0.00px;top:1150.00px;overflow:visible;" width="1920.00" height="50.00" viewBox="0.00 1150.00 1920.00 50.00"><path d="M19.5 1167.37 L28.2125 1165.115 V1174.135 H19.5 Z M29.4425 1164.5 L40 1163.885 V1174.135 H29.4425 Z M19.5 1175.365 H28.2125 V1184.385 L19.5 1182.13 Z M29.4425 1175.365 H40 V1185 L29.4425 1184.385 Z" fill="#fff"/><rect x="60" y="1150" width="360" height="50" fill="#f2f2f2"/><rect x="60" y="1150" width="360" height="1" fill="#bdbdbd"/><circle cx="88" cy="1171.8" r="6.8" fill="none" stroke="#1a1a1a" stroke-width="1.3"/><path d="M83.2 1176.8 L75.2 1184.6" stroke="#1a1a1a" stroke-width="1.4"/><rect x="325" y="1155" width="90" height="39" rx="4" fill="#e2e2e2"/><rect x="351" y="1166" width="38" height="23" rx="3" fill="#d98a0b"/><rect x="351" y="1166" width="38" height="9" rx="3" fill="#f0a818"/><path d="M362 1166 V1161 H378 V1166" fill="none" stroke="#3a3a3a" stroke-width="2"/><rect x="367.5" y="1173" width="5" height="4" fill="#f7e07a"/><path d="M441 1164.5 H454 M441 1183.5 H454" stroke="#fff" stroke-width="1.3"/><rect x="442" y="1168" width="11" height="12" fill="none" stroke="#fff" stroke-width="1.3"/><path d="M459.5 1164 V1166 M459.5 1169 V1184" stroke="#fff" stroke-width="1.3"/><g transform="translate(499.3,1160.5) scale(1.0107142857142857)"><path d="M0 3 H9 L11 5 H28 V24 H0 Z" fill="#e8a712"/><rect x="0" y="7" width="28" height="17" fill="#fbd365"/><path d="M7 24 V15 H21 V24 H17.5 V19 H10.5 V24 Z" fill="#3a8ee6"/></g><circle cx="575.6" cy="1174.6" r="14" fill="#1ed760"/><path d="M567.2 1170.3999999999999 C574.2 1167.6 580.5 1169.0 584.28 1172.08" fill="none" stroke="#191414" stroke-width="2.3800000000000003" stroke-linecap="round"/><path d="M568.6 1175.3 C574.2 1173.1999999999998 579.8000000000001 1174.32 582.88 1176.6999999999998" fill="none" stroke="#191414" stroke-width="1.9600000000000002" stroke-linecap="round"/><path d="M569.72 1179.78 C574.2 1178.3799999999999 578.6800000000001 1178.8 581.48 1180.62" fill="none" stroke="#191414" stroke-width="1.68" stroke-linecap="round"/><g transform="translate(622.6,1161) scale(1.0133333333333332)"><path d="M10 4 L20 0 L30 5 V20 H10 Z" fill="#0f78d4"/><path d="M20 0 L30 5 V12 L20 6 Z" fill="#50b0f0"/><path d="M14 12 L30 12 V24 H14 Z" fill="#1160b8"/><rect x="0" y="6" width="16" height="16" rx="1.5" fill="#0a64c8"/><circle cx="8" cy="14" r="4.3" fill="none" stroke="#fff" stroke-width="2.2"/><rect x="12" y="19" width="18" height="7" rx="1" fill="#19c3d8"/><text x="21" y="25.3" font-size="6.5" font-weight="700" text-anchor="middle" fill="#0b2d5a" font-family="Liberation Sans">NEW</text></g><g transform="translate(687,1161) scale(1.0)"><circle cx="17" cy="4" r="3.5" fill="#7b83eb"/><circle cx="25" cy="7" r="2.8" fill="#5059c9"/><rect x="12" y="10" width="17" height="12" rx="3" fill="#5059c9"/><rect x="0" y="6" width="17" height="17" rx="1.5" fill="#4b53bc"/><path d="M4 10 H13 M8.5 10 V19" stroke="#fff" stroke-width="2.4"/><rect x="10" y="19" width="18" height="7" rx="1" fill="#19c3d8"/><circle cx="20" cy="20" r="7.5" fill="#d13438"/></g><circle cx="762" cy="1174.5" r="14.2" fill="#f4f4f4"/><g transform="translate(762,1174.5) scale(1.0142857142857142)" stroke-linecap="round" stroke-width="3.6"><path d="M-3 -8 V-1" stroke="#36c5f0"/><path d="M-8 -3 H-6" stroke="#36c5f0"/><path d="M8 -3 H1" stroke="#2eb67d"/><path d="M3 -8 V-6" stroke="#2eb67d"/><path d="M3 8 V1" stroke="#ecb22e"/><path d="M8 3 H6" stroke="#ecb22e"/><path d="M-8 3 H-1" stroke="#e01e5a"/><path d="M-3 8 V6" stroke="#e01e5a"/></g><rect x="794" y="1150" width="61" height="50" fill="#5e5d5c"/><circle cx="824.5" cy="1174.5" r="15.5" fill="#34a853"/><path d="M824.5 1174.5 L811.077 1166.75 A15.5 15.5 0 0 1 837.923 1166.75 Z" fill="#ea4335"/><path d="M824.5 1174.5 L837.923 1166.75 A15.5 15.5 0 0 1 824.5 1190.0 Z" fill="#fbbc04"/><circle cx="824.5" cy="1174.5" r="6.9750000000000005" fill="#fff"/><circle cx="824.5" cy="1174.5" r="5.58" fill="#4285f4"/><circle cx="831.475" cy="1181.475" r="8.99" fill="#e8ddd0"/><path d="M825.275 1186.125 C825.275 1174.5 837.675 1174.5 837.675 1186.125" fill="#4a3426"/><circle cx="831.475" cy="1180.39" r="3.41" fill="#d9b08c"/><path d="M825.275 1190.0 C827.6 1185.35 835.35 1185.35 837.675 1190.0" fill="#f1ece6"/><g transform="translate(871,1162) scale(0.98)"><rect x="7" y="0" width="23" height="26" rx="2" fill="#2b7cd3"/><rect x="7" y="0" width="23" height="8.7" rx="2" fill="#41a5ee"/><rect x="7" y="17.3" width="23" height="8.7" rx="2" fill="#103f91"/><rect x="0" y="6" width="15" height="15" rx="1.5" fill="#185abd"/><text x="7.5" y="18" font-size="11" font-weight="700" text-anchor="middle" fill="#fff" font-family="Liberation Sans">W</text></g><g transform="translate(933,1162) scale(0.98)"><rect x="7" y="0" width="23" height="26" rx="2" fill="#21a366"/><rect x="7" y="0" width="23" height="8.7" rx="2" fill="#33c481"/><rect x="7" y="17.3" width="23" height="8.7" rx="2" fill="#185c37"/><rect x="0" y="6" width="15" height="15" rx="1.5" fill="#107c41"/><text x="7.5" y="18" font-size="11" font-weight="700" text-anchor="middle" fill="#fff" font-family="Liberation Sans">X</text></g><rect x="489" y="1197" width="51" height="3" fill="#66d9cc"/><rect x="613" y="1197" width="40" height="3" fill="#66d9cc"/><rect x="674.8" y="1197" width="51.200000000000045" height="3" fill="#66d9cc"/><rect x="794" y="1197" width="61" height="3" fill="#66d9cc"/><rect x="861" y="1197" width="39" height="3" fill="#66d9cc"/><rect x="654" y="1197" width="10" height="3" fill="#4aa39a"/><rect x="901.5" y="1197" width="10.200000000000045" height="3" fill="#4aa39a"/><rect x="1458" y="1162" width="8" height="20" rx="4" fill="#a8d3f7"/><circle cx="1462" cy="1184" r="5" fill="#5fb2f2"/><rect x="1460.6" y="1167" width="2.8" height="14" fill="#e04050"/><path d="M1473.5 1188 V1174 M1470 1177.5 L1473.5 1172 L1477 1177.5" fill="none" stroke="#ff1a1a" stroke-width="2.2"/><path d="M1627.5 1179 L1635 1171.5 L1642.5 1179" fill="none" stroke="#fff" stroke-width="1.4"/><path d="M1658 1183 C1653 1183 1654 1175 1659.5 1176 C1660 1169 1670 1169 1671 1175 C1676 1175 1676 1183 1671 1183 Z" fill="#1e88e5"/><circle cx="1670" cy="1181" r="5.5" fill="#1565c0"/><rect x="1669.3" y="1179.5" width="1.6" height="4.5" fill="#fff"/><rect x="1669.3" y="1177" width="1.6" height="1.6" fill="#fff"/><path d="M1685.5 1171 H1690 L1695 1166.5 V1183.5 L1690 1179 H1685.5 Z" fill="none" stroke="#fff" stroke-width="1.2"/><path d="M1698 1172 C1700 1174 1700 1176 1698 1178 M1701 1169.5 C1704.5 1173 1704.5 1177 1701 1180.5" fill="none" stroke="#fff" stroke-width="1.1"/><path d="M1703.5 1167 C1709 1172 1709 1178 1703.5 1183" fill="none" stroke="#888" stroke-width="1.1"/><rect x="1720" y="1169.5" width="14" height="9" fill="none" stroke="#fff" stroke-width="1.2"/><rect x="1722" y="1171.5" width="7" height="5" fill="#fff"/><rect x="1734" y="1172" width="1.8" height="4" fill="#fff"/><path d="M1716 1168 V1173 M1714 1170 H1719" stroke="#fff" stroke-width="1.2"/><path d="M1748 1184 A16 16 0 0 1 1764 1168 M1752 1184 A12 12 0 0 1 1764 1172 M1756 1184 A8 8 0 0 1 1764 1176" fill="none" stroke="#fff" stroke-width="1.2"/><circle cx="1762" cy="1183" r="1.5" fill="#fff"/><path d="M1869 1165 H1888.5 V1180.5 H1869 Z" fill="#fff"/><path d="M1872 1169 H1885 M1872 1172.5 H1885 M1872 1176 H1885" stroke="#3c3b39" stroke-width="1.1"/><circle cx="1887" cy="1184" r="10.5" fill="#3c3b39" stroke="#8c8c8c" stroke-width="1"/><rect x="1914" y="1150" width="1" height="50" fill="#6d6c6a"/></svg><div id="t86" class="a tx" style="top:1166.12px;font-size:19px;line-height:19px;color:#1f1f1f;left:110.00px;transform:scaleX(0.9766);">Type here to search</div><div id="t87" class="a tx" style="top:1166.86px;font-size:18.5px;line-height:18.5px;color:#ffffff;left:1492.00px;transform:scaleX(0.9281);">57&deg;F&nbsp; Mostly cloudy</div><div id="t88" class="a tx" style="top:1155.93px;font-size:15.5px;line-height:15.5px;color:#ffffff;left:1785.90px;transform:scaleX(0.8956);">4:13 PM</div><div id="t89" class="a tx" style="top:1178.73px;font-size:15.5px;line-height:15.5px;color:#ffffff;left:1777.70px;transform:scaleX(0.9905);">4/16/2024</div><div id="t90" class="a tx" style="top:1177.66px;font-size:14px;line-height:14px;color:#ffffff;font-weight:700;left:1879.75px;transform:scaleX(0.9311);">22</div></div><div class="a" style="left:1920px;top:0;width:1920px;height:1200px;overflow:hidden"><div class="a" style="left:0.00px;top:0.00px;width:1920.00px;height:1200.00px;background:#000;"></div><div class="a" style="left:0.00px;top:0.00px;width:1920.00px;height:40.00px;background:#000000;"></div><svg class="a" style="left:0.00px;top:0.00px;overflow:visible;" width="1920.00" height="87.00" viewBox="0.00 0.00 1920.00 87.00"><rect x="6" y="6.3" width="27.5" height="27.2" rx="8" fill="#2a2a2a"/><path d="M16 18 L20 22 L24 18" fill="none" stroke="#e8e8e8" stroke-width="1.8"/><path d="M267.7 40 A10 10 0 0 0 277.7 30 V16.3 A10 10 0 0 1 287.7 6.3 H500.6 A10 10 0 0 1 510.6 16.3 V30 A10 10 0 0 0 520.6 40 Z" fill="#2a2a2a"/><defs><linearGradient id="xm48" x1="0" y1="0" x2="1" y2="1"><stop offset="0" stop-color="#21dbaa"/><stop offset="0.5" stop-color="#00b4ef"/><stop offset="1" stop-color="#5f3ae8"/></linearGradient></defs><defs><linearGradient id="xm286" x1="0" y1="0" x2="1" y2="1"><stop offset="0" stop-color="#21dbaa"/><stop offset="0.5" stop-color="#00b4ef"/><stop offset="1" stop-color="#5f3ae8"/></linearGradient></defs><path d="M251.5 15.8 L259.8 24.1 M259.8 15.8 L251.5 24.1" stroke="#e0e0e0" stroke-width="1.6"/><path d="M489.8 15.8 L498.1 24.1 M498.1 15.8 L489.8 24.1" stroke="#e0e0e0" stroke-width="1.6"/><path d="M529.3 14 V26 M523.3 20 H535.3" stroke="#e8e8e8" stroke-width="1.8"/><rect x="1798.6" y="19.5" width="12" height="1.1" fill="#e8e8e8"/><rect x="1846.5" y="16.5" width="8" height="8" fill="none" stroke="#e8e8e8" stroke-width="1.1"/><path d="M1848.5 16.5 V14.5 H1856.5 V22.5 H1854.5" fill="none" stroke="#e8e8e8" stroke-width="1.1"/><path d="M1891.3 14.2 L1902.8 25.7 M1902.8 14.2 L1891.3 25.7" stroke="#e8e8e8" stroke-width="1.2"/><path d="M0 87 V50 A10 10 0 0 1 10 40 H1910 A10 10 0 0 1 1920 50 V87 Z" fill="#2a2a2a"/><rect x="120" y="45.8" width="1625.7" height="33.6" rx="16.8" fill="#3c3c3c"/><path d="M29 63 H15.5 M21.5 57 L15.5 63 L21.5 69" fill="none" stroke="#8f8f8f" stroke-width="1.6"/><path d="M50.5 63 H64 M58 57 L64 63 L58 69" fill="none" stroke="#8f8f8f" stroke-width="1.6"/><path d="M99.5 59.5 A6.8 6.8 0 1 0 100.5 65" fill="none" stroke="#e3e3e3" stroke-width="1.7"/><path d="M96 56.5 H100.8 V61.3 Z" fill="#e3e3e3"/><circle cx="136.8" cy="62.6" r="11.7" fill="#2a2a2a"/><path d="M136.5 59.8 H143.3 M130.5 65.5 H137" stroke="#e3e3e3" stroke-width="1.6"/><circle cx="132.8" cy="59.8" r="1.8" fill="none" stroke="#e3e3e3" stroke-width="1.3"/><circle cx="140.8" cy="65.5" r="1.8" fill="none" stroke="#e3e3e3" stroke-width="1.3"/><path d="M1722.2 55.8 L1724.3 60.6 L1729.5 61 L1725.5 64.4 L1726.8 69.5 L1722.2 66.8 L1717.6 69.5 L1718.9 64.4 L1714.9 61 L1720.1 60.6 Z" fill="none" stroke="#e3e3e3" stroke-width="1.3"/><path d="M1764 70.8 V64 A8 8 0 1 1 1771.5 70.8 Z" fill="#13856d" stroke="#e8e8e8" stroke-width="0.8"/><path d="M1775.2 59.8 A4.8 4.8 0 1 0 1775.8 64.3 H1771.8" fill="none" stroke="#fff" stroke-width="1.8"/><path d="M1802 58 H1806 A2.3 2.3 0 0 1 1810.5 58 H1815 V62.5 A2.3 2.3 0 0 1 1815 67 V71 H1802 Z" fill="none" stroke="#e3e3e3" stroke-width="1.5"/><rect x="1833.5" y="55" width="2" height="16" fill="#000"/><defs><clipPath id="avc"><circle cx="1862" cy="63" r="10"/></clipPath></defs><g clip-path="url(#avc)"><rect x="1850" y="51" width="24" height="24" fill="#ecebe8"/><path d="M1855 75 C1853 62 1855 54 1862 54 C1868 54 1871 60 1872 75 Z" fill="#7a5236"/><ellipse cx="1862.5" cy="61.5" rx="3.8" ry="5" fill="#e2b894"/><path d="M1853 76 C1855 69 1869 69 1872 76" fill="#d9d2c4"/><path d="M1859 60.3 H1861.8 M1863.2 60.3 H1866" stroke="#222" stroke-width="1"/></g><circle cx="1898" cy="57" r="1.7" fill="#e3e3e3"/><circle cx="1898" cy="63" r="1.7" fill="#e3e3e3"/><circle cx="1898" cy="69" r="1.7" fill="#e3e3e3"/></svg><div id="t117" class="a tx" style="top:13.81px;font-size:13.5px;line-height:13.5px;color:transparent;font-weight:700;left:48.00px;transform:scaleX(0.7901);background:linear-gradient(90deg,#21dbaa,#00a3f0 55%,#5f3ae8);-webkit-background-clip:text;background-clip:text">XM</div><div id="t118" class="a tx" style="top:13.81px;font-size:13.5px;line-height:13.5px;color:transparent;font-weight:700;left:286.00px;transform:scaleX(0.8198);background:linear-gradient(90deg,#21dbaa,#00a3f0 55%,#5f3ae8);-webkit-background-clip:text;background-clip:text">XM</div><div class="a" style="left:72px;top:8px;width:168px;height:26px;overflow:hidden;-webkit-mask-image:linear-gradient(90deg,#000 86%,rgba(0,0,0,0.25));mask-image:linear-gradient(90deg,#000 86%,rgba(0,0,0,0.25))"><div id="t119" class="a tx" style="top:6.10px;font-size:13px;line-height:13px;color:#e3e3e3;left:0.00px;transform:scaleX(0.8936);">Distribute Survey | Qualtrics Exp</div></div><div class="a" style="left:310px;top:8px;width:168px;height:26px;overflow:hidden;-webkit-mask-image:linear-gradient(90deg,#000 86%,rgba(0,0,0,0.25));mask-image:linear-gradient(90deg,#000 86%,rgba(0,0,0,0.25))"><div id="t120" class="a tx" style="top:6.10px;font-size:13px;line-height:13px;color:#ffffff;left:0.00px;transform:scaleX(0.8868);">Preview - Qualtrics Survey | Qua</div></div><div id="t121" class="a tx" style="top:55.77px;font-size:15.2px;line-height:15.2px;color:#e3e3e3;left:157.00px;transform:scaleX(0.8962);">pacificresearch.qualtrics.com</div><div id="t122" class="a tx" style="top:55.77px;font-size:15.2px;line-height:15.2px;color:#a9a9a9;left:333.00px;transform:scaleX(0.9056);">/jfe/preview/previewId/8e7915d0-3184-491f-be92-bc2a2c54b6b1/SV_57SePKbS35aO6Wi?Q_CHL=preview&amp;Q_SurveyVersionID=current</div><div class="a" style="left:0.00px;top:87.00px;width:1920.00px;height:953.00px;background:#ffffff;"></div><div class="a" style="left:24.00px;top:111.00px;width:131.80px;height:35.50px;background:#0b6fd3;border-radius:3px"></div><div id="t91" class="a tx" style="top:122.26px;font-size:13.8px;line-height:13.8px;color:#ffffff;font-weight:700;left:45.10px;transform:scaleX(0.9261);">Restart Survey</div><div class="a" style="left:171.80px;top:111.00px;width:143.20px;height:35.50px;background:#fff;border:1.5px solid #0b6fd3;border-radius:3px"></div><div id="t92" class="a tx" style="top:122.26px;font-size:13.8px;line-height:13.8px;color:#0b6fd3;left:193.40px;">Place Bookmark</div><div class="a" style="left:339.00px;top:111.00px;width:1.00px;height:35.50px;background:#d5d5d5;"></div><div id="t93" class="a tx" style="top:122.26px;font-size:13.8px;line-height:13.8px;color:#3a3a3a;left:378.30px;transform:scaleX(0.9842);">Tools</div><svg class="a" style="left:465.20px;top:122.50px;overflow:visible;" width="16.00" height="12.00" viewBox="465.20 122.50 16.00 12.00"><path d="M469.2 126.5 L473.2 130.5 L477.2 126.5" fill="none" stroke="#3a3a3a" stroke-width="1.3"/></svg><div class="a" style="left:508.00px;top:111.00px;width:57.80px;height:35.50px;background:#e6e6e6;"></div><svg class="a" style="left:528.00px;top:117.00px;overflow:visible;" width="18.00" height="25.00" viewBox="528.00 117.00 18.00 25.00"><rect x="530.5" y="120" width="12.5" height="20" rx="2.2" fill="none" stroke="#222" stroke-width="1.8"/><rect x="534.5" y="135.5" width="4.5" height="1.8" fill="#222"/></svg><div class="a" style="left:1734.00px;top:111.00px;width:162.00px;height:35.50px;background:#0b6fd3;border-radius:3px"></div><svg class="a" style="left:1754.00px;top:118.00px;overflow:visible;" width="24.00" height="22.00" viewBox="1754.00 118.00 24.00 22.00"><circle cx="1773" cy="122.5" r="3.2" fill="none" stroke="#fff" stroke-width="1.8"/><circle cx="1759.5" cy="129" r="3.2" fill="none" stroke="#fff" stroke-width="1.8"/><circle cx="1773" cy="135.5" r="3.2" fill="none" stroke="#fff" stroke-width="1.8"/><path d="M1762.5 127.5 L1770 124 M1762.5 130.5 L1770 134" stroke="#fff" stroke-width="1.8"/></svg><div id="t94" class="a tx" style="top:122.26px;font-size:13.8px;line-height:13.8px;color:#ffffff;font-weight:700;left:1786.70px;transform:scaleX(0.9360);">Share Preview</div><div class="a" style="left:0.00px;top:170.50px;width:1920.00px;height:2.00px;background:#f2f2f2;"></div><div class="a" style="left:24.00px;top:195.00px;width:1485.00px;height:845.00px;background:#d9d9d9;"></div><div class="a" style="left:372.70px;top:194.30px;width:769.10px;height:806.70px;background:#ffffff;"></div><div class="a" style="left:386.50px;top:188.00px;width:739.50px;height:50.00px;background:#efefef;"></div><div class="a" style="left:397.50px;top:204.00px;width:18.00px;height:18.00px;background:#fff;border:1.5px solid #555;border-radius:2px"></div><div id="t95" class="a tx" style="top:203.23px;font-size:20px;line-height:20px;color:#8a8a8a;left:426.50px;">Latino/a/x / Hispanic / Chicano/a</div><div class="a" style="left:386.50px;top:248.60px;width:739.50px;height:50.00px;background:#efefef;"></div><div class="a" style="left:397.50px;top:264.60px;width:18.00px;height:18.00px;background:#fff;border:1.5px solid #555;border-radius:2px"></div><div id="t96" class="a tx" style="top:263.83px;font-size:20px;line-height:20px;color:#8a8a8a;left:426.50px;">Middle Eastern/ Arab / Arab American / North African</div><div class="a" style="left:386.50px;top:309.20px;width:739.50px;height:50.00px;background:#efefef;"></div><div class="a" style="left:397.50px;top:325.20px;width:18.00px;height:18.00px;background:#fff;border:1.5px solid #555;border-radius:2px"></div><div id="t97" class="a tx" style="top:324.43px;font-size:20px;line-height:20px;color:#8a8a8a;left:426.50px;">Native Hawaiian or Pacific Islander</div><div class="a" style="left:386.50px;top:371.00px;width:739.50px;height:50.00px;background:#efefef;"></div><div class="a" style="left:397.50px;top:387.00px;width:18.00px;height:18.00px;background:#fff;border:1.5px solid #555;border-radius:2px"></div><div id="t98" class="a tx" style="top:386.23px;font-size:20px;line-height:20px;color:#8a8a8a;left:426.50px;">White / Caucasian / European</div><div class="a" style="left:386.50px;top:431.70px;width:739.50px;height:50.00px;background:#efefef;"></div><div class="a" style="left:397.50px;top:447.70px;width:18.00px;height:18.00px;background:#fff;border:1.5px solid #555;border-radius:2px"></div><div id="t99" class="a tx" style="top:446.93px;font-size:20px;line-height:20px;color:#8a8a8a;left:426.50px;">Other (please describe)</div><div class="a" style="left:386.00px;top:488.00px;width:219.00px;height:47.00px;background:#f4f4f4;border:2px solid #6a6a6a"></div><div class="a" style="left:386.50px;top:547.00px;width:739.50px;height:50.00px;background:#efefef;"></div><div class="a" style="left:397.50px;top:563.00px;width:18.00px;height:18.00px;background:#fff;border:1.5px solid #555;border-radius:2px"></div><div id="t100" class="a tx" style="top:562.23px;font-size:20px;line-height:20px;color:#8a8a8a;left:426.50px;">Prefer not to answer</div><div id="t101" class="a tx" style="top:678.28px;font-size:24px;line-height:24px;color:#6a6a6a;left:386.50px;transform:scaleX(1.0786);">Do you currently live in the United States?</div><div class="a" style="left:386.50px;top:735.00px;width:739.50px;height:50.00px;background:#efefef;"></div><div class="a" style="left:397.50px;top:751.00px;width:18.00px;height:18.00px;background:#fff;border:1.5px solid #555;border-radius:50%"></div><div class="a" style="left:401.00px;top:754.50px;width:11.00px;height:11.00px;background:#0b6fd3;border-radius:50%"></div><div id="t102" class="a tx" style="top:750.23px;font-size:20px;line-height:20px;color:#8a8a8a;left:426.50px;">Yes</div><div class="a" style="left:386.50px;top:795.50px;width:739.50px;height:50.00px;background:#efefef;"></div><div class="a" style="left:397.50px;top:811.50px;width:18.00px;height:18.00px;background:#fff;border:1.5px solid #555;border-radius:50%"></div><div id="t103" class="a tx" style="top:810.73px;font-size:20px;line-height:20px;color:#8a8a8a;left:426.50px;">No</div><div class="a" style="left:388.60px;top:940.00px;width:85.40px;height:42.00px;background:#a9d0f2;border-radius:3px"></div><div id="t104" class="a tx" style="top:953.67px;font-size:15px;line-height:15px;color:#1a3a6a;font-weight:700;left:413.37px;">Back</div><div class="a" style="left:1045.00px;top:940.00px;width:81.00px;height:42.00px;background:#a9d0f2;border-radius:3px"></div><div id="t105" class="a tx" style="top:953.67px;font-size:15px;line-height:15px;color:#1a3a6a;font-weight:700;left:1069.24px;">Next</div><div class="a" style="left:1302.00px;top:1000.00px;width:195.00px;height:40.00px;background:#bcbcbe;border-radius:5px 0 0 0"></div><div id="t106" class="a tx" style="top:1014.86px;font-size:13.8px;line-height:13.8px;color:#7b7b80;left:1325.60px;transform:scaleX(1.0982);">Powered by Qualtrics</div><div class="a" style="left:1497.00px;top:194.30px;width:12.00px;height:845.70px;background:#f0f0f0;"></div><div class="a" style="left:1499.00px;top:740.00px;width:8.00px;height:295.00px;background:#a0a0a0;border-radius:4px"></div><svg class="a" style="left:1450.00px;top:190.00px;overflow:visible;" width="450.00" height="790.00" viewBox="1450.00 190.00 450.00 790.00"><rect x="1533" y="280.6" width="3.5" height="28" rx="1.5" fill="#222831"/><rect x="1533" y="338" width="3.5" height="46" rx="1.5" fill="#222831"/><rect x="1533" y="398" width="3.5" height="46" rx="1.5" fill="#222831"/><rect x="1889.5" y="338" width="4" height="79" rx="1.5" fill="#222831"/><rect x="1535.7" y="195" width="355.5" height="780.4" rx="37" fill="#222831"/><rect x="1683" y="211.5" width="40" height="6" rx="3" fill="#0f1318"/><circle cx="1739" cy="214.3" r="3.6" fill="none" stroke="#0f1318" stroke-width="1.6"/></svg><div class="a" style="left:1544px;top:226.6px;width:340px;height:735.4px;border-radius:20px 20px 28px 28px;overflow:hidden"><div class="a" style="left:0.00px;top:0.00px;width:340.00px;height:735.40px;background:#ffffff;"></div><div id="t107" class="a tx" style="top:10.82px;font-size:14.5px;line-height:14.5px;color:#000;font-weight:700;left:15.00px;transform:scaleX(0.9276);">12:29</div><div class="a" style="left:306.70px;top:14.80px;width:16.00px;height:7.50px;background:#000;border-radius:2px"></div><div class="a" style="left:4.50px;top:19.40px;width:329.50px;height:44.00px;background:#efefef;"></div><div class="a" style="left:15.50px;top:32.40px;width:18.00px;height:18.00px;background:#fff;border:1.5px solid #555;border-radius:2px"></div><div id="t108" class="a tx" style="top:33.10px;font-size:17px;line-height:17px;color:#8a8a8a;left:44.50px;">Native Hawaiian or Pacific Islander</div><div class="a" style="left:4.50px;top:73.40px;width:329.50px;height:44.00px;background:#efefef;"></div><div class="a" style="left:15.50px;top:86.40px;width:18.00px;height:18.00px;background:#fff;border:1.5px solid #555;border-radius:2px"></div><div id="t109" class="a tx" style="top:87.10px;font-size:17px;line-height:17px;color:#8a8a8a;left:44.50px;">White / Caucasian / European</div><div class="a" style="left:4.50px;top:127.00px;width:329.50px;height:44.00px;background:#efefef;"></div><div class="a" style="left:15.50px;top:140.00px;width:18.00px;height:18.00px;background:#fff;border:1.5px solid #555;border-radius:2px"></div><div id="t110" class="a tx" style="top:140.70px;font-size:17px;line-height:17px;color:#8a8a8a;left:44.50px;">Other (please describe)</div><div class="a" style="left:4.50px;top:176.00px;width:329.50px;height:52.00px;background:#f4f4f4;border:2px solid #6a6a6a"></div><div class="a" style="left:4.50px;top:236.00px;width:329.50px;height:44.00px;background:#efefef;"></div><div class="a" style="left:15.50px;top:249.00px;width:18.00px;height:18.00px;background:#fff;border:1.5px solid #555;border-radius:2px"></div><div id="t111" class="a tx" style="top:249.70px;font-size:17px;line-height:17px;color:#8a8a8a;left:44.50px;">Prefer not to answer</div><div id="t112" class="a tx" style="top:372.70px;font-size:17px;line-height:17px;color:#6a6a6a;left:45.00px;transform:scaleX(1.1981);">Do you currently live in the</div><div id="t113" class="a tx" style="top:400.70px;font-size:17px;line-height:17px;color:#6a6a6a;left:45.00px;transform:scaleX(1.0761);">United States?</div><div class="a" style="left:4.50px;top:446.00px;width:329.50px;height:44.00px;background:#efefef;"></div><div class="a" style="left:15.50px;top:459.00px;width:18.00px;height:18.00px;background:#fff;border:1.5px solid #555;border-radius:50%"></div><div class="a" style="left:19.00px;top:462.50px;width:11.00px;height:11.00px;background:#0b6fd3;border-radius:50%"></div><div id="t114" class="a tx" style="top:459.70px;font-size:17px;line-height:17px;color:#8a8a8a;left:44.50px;">Yes</div><div class="a" style="left:4.50px;top:500.40px;width:329.50px;height:44.00px;background:#efefef;"></div><div class="a" style="left:15.50px;top:513.40px;width:18.00px;height:18.00px;background:#fff;border:1.5px solid #555;border-radius:50%"></div><div id="t115" class="a tx" style="top:514.10px;font-size:17px;line-height:17px;color:#8a8a8a;left:44.50px;">No</div><div class="a" style="left:12.00px;top:631.00px;width:73.00px;height:36.00px;background:#a9d0f2;border-radius:3px"></div><div class="a" style="left:256.00px;top:631.00px;width:70.00px;height:36.00px;background:#a9d0f2;border-radius:3px"></div><div class="a" style="left:0.00px;top:685.00px;width:340.00px;height:50.40px;background:#d9d9d9;"></div><div id="t116" class="a tx" style="top:706.65px;font-size:13px;line-height:13px;color:#7a7a7a;left:108.22px;">Powered by Qualtrics</div></div><svg class="a" style="left:0.00px;top:1040.00px;overflow:visible;" width="1920.00" height="40.00" viewBox="0.00 1040.00 1920.00 40.00"><rect x="0" y="1040" width="1920" height="40" fill="#3d3c3a"/><path d="M16 1053.81 L23.0125 1051.995 V1059.255 H16 Z M24.002499999999998 1051.5 L32.5 1051.005 V1059.255 H24.002499999999998 Z M16 1060.245 H23.0125 V1067.505 L16 1065.69 Z M24.002499999999998 1060.245 H32.5 V1068 L24.002499999999998 1067.505 Z" fill="#fff"/><circle cx="74" cy="1057" r="7.8" fill="none" stroke="#fff" stroke-width="1.6"/><path d="M68.5 1062.5 L62 1069" stroke="#fff" stroke-width="1.9"/><path d="M112 1051.5 H122 M112 1068 H122" stroke="#fff" stroke-width="1.1"/><rect x="112.5" y="1054.5" width="9" height="10" fill="none" stroke="#fff" stroke-width="1.1"/><path d="M127.3 1051 V1053 M127.3 1055 V1068" stroke="#fff" stroke-width="1.1"/><g transform="translate(159.5,1049) scale(0.8035714285714286)"><path d="M0 3 H9 L11 5 H28 V24 H0 Z" fill="#e8a712"/><rect x="0" y="7" width="28" height="17" fill="#fbd365"/><path d="M7 24 V15 H21 V24 H17.5 V19 H10.5 V24 Z" fill="#3a8ee6"/></g><circle cx="219.6" cy="1059" r="11" fill="#1ed760"/><path d="M213.0 1055.7 C218.5 1053.5 223.45 1054.6 226.42 1057.02" fill="none" stroke="#191414" stroke-width="1.87" stroke-linecap="round"/><path d="M214.1 1059.55 C218.5 1057.9 222.9 1058.78 225.32 1060.65" fill="none" stroke="#191414" stroke-width="1.54" stroke-linecap="round"/><path d="M214.98 1063.07 C218.5 1061.97 222.01999999999998 1062.3 224.22 1063.73" fill="none" stroke="#191414" stroke-width="1.3199999999999998" stroke-linecap="round"/><g transform="translate(257,1049) scale(0.8)"><path d="M10 4 L20 0 L30 5 V20 H10 Z" fill="#0f78d4"/><path d="M20 0 L30 5 V12 L20 6 Z" fill="#50b0f0"/><path d="M14 12 L30 12 V24 H14 Z" fill="#1160b8"/><rect x="0" y="6" width="16" height="16" rx="1.5" fill="#0a64c8"/><circle cx="8" cy="14" r="4.3" fill="none" stroke="#fff" stroke-width="2.2"/><rect x="12" y="19" width="18" height="7" rx="1" fill="#19c3d8"/><text x="21" y="25.3" font-size="6.5" font-weight="700" text-anchor="middle" fill="#0b2d5a" font-family="Liberation Sans">NEW</text></g><g transform="translate(306,1049) scale(0.8)"><circle cx="17" cy="4" r="3.5" fill="#7b83eb"/><circle cx="25" cy="7" r="2.8" fill="#5059c9"/><rect x="12" y="10" width="17" height="12" rx="3" fill="#5059c9"/><rect x="0" y="6" width="17" height="17" rx="1.5" fill="#4b53bc"/><path d="M4 10 H13 M8.5 10 V19" stroke="#fff" stroke-width="2.4"/><rect x="10" y="19" width="18" height="7" rx="1" fill="#19c3d8"/><circle cx="20" cy="20" r="7.5" fill="#d13438"/></g><circle cx="366.7" cy="1059" r="11.5" fill="#f4f4f4"/><g transform="translate(366.7,1059) scale(0.8214285714285714)" stroke-linecap="round" stroke-width="3.6"><path d="M-3 -8 V-1" stroke="#36c5f0"/><path d="M-8 -3 H-6" stroke="#36c5f0"/><path d="M8 -3 H1" stroke="#2eb67d"/><path d="M3 -8 V-6" stroke="#2eb67d"/><path d="M3 8 V1" stroke="#ecb22e"/><path d="M8 3 H6" stroke="#ecb22e"/><path d="M-8 3 H-1" stroke="#e01e5a"/><path d="M-3 8 V6" stroke="#e01e5a"/></g><rect x="392" y="1040" width="48" height="40" fill="#5e5d5c"/><circle cx="415.7" cy="1059" r="12" fill="#34a853"/><path d="M415.7 1059 L405.308 1053.0 A12 12 0 0 1 426.092 1053.0 Z" fill="#ea4335"/><path d="M415.7 1059 L426.092 1053.0 A12 12 0 0 1 415.7 1071 Z" fill="#fbbc04"/><circle cx="415.7" cy="1059" r="5.4" fill="#fff"/><circle cx="415.7" cy="1059" r="4.32" fill="#4285f4"/><circle cx="421.09999999999997" cy="1064.4" r="6.959999999999999" fill="#e8ddd0"/><path d="M416.3 1068.0 C416.3 1059 425.9 1059 425.9 1068.0" fill="#4a3426"/><circle cx="421.09999999999997" cy="1063.56" r="2.64" fill="#d9b08c"/><path d="M416.3 1071.0 C418.09999999999997 1067.4 424.09999999999997 1067.4 425.9 1071.0" fill="#f1ece6"/><g transform="translate(452.5,1049) scale(0.7666666666666667)"><rect x="7" y="0" width="23" height="26" rx="2" fill="#2b7cd3"/><rect x="7" y="0" width="23" height="8.7" rx="2" fill="#41a5ee"/><rect x="7" y="17.3" width="23" height="8.7" rx="2" fill="#103f91"/><rect x="0" y="6" width="15" height="15" rx="1.5" fill="#185abd"/><text x="7.5" y="18" font-size="11" font-weight="700" text-anchor="middle" fill="#fff" font-family="Liberation Sans">W</text></g><g transform="translate(502,1049) scale(0.7666666666666667)"><rect x="7" y="0" width="23" height="26" rx="2" fill="#21a366"/><rect x="7" y="0" width="23" height="8.7" rx="2" fill="#33c481"/><rect x="7" y="17.3" width="23" height="8.7" rx="2" fill="#185c37"/><rect x="0" y="6" width="15" height="15" rx="1.5" fill="#107c41"/><text x="7.5" y="18" font-size="11" font-weight="700" text-anchor="middle" fill="#fff" font-family="Liberation Sans">X</text></g><rect x="151" y="1078" width="40" height="2" fill="#66d9cc"/><rect x="249" y="1078" width="31" height="2" fill="#66d9cc"/><rect x="298" y="1078" width="40" height="2" fill="#66d9cc"/><rect x="392" y="1078" width="48" height="2" fill="#66d9cc"/><rect x="445" y="1078" width="31" height="2" fill="#66d9cc"/><rect x="281" y="1078" width="8" height="2" fill="#4aa39a"/><rect x="477" y="1078" width="8" height="2" fill="#4aa39a"/></svg><div id="t123" class="a tx" style="top:1044.98px;font-size:11.5px;line-height:11.5px;color:#ffffff;left:1866.00px;transform:scaleX(0.9947);">4:13 PM</div><div id="t124" class="a tx" style="top:1062.38px;font-size:11.5px;line-height:11.5px;color:#ffffff;left:1861.00px;transform:scaleX(1.0301);">4/16/2024</div></div></div><div class="a" style="left:574px;top:538.1px;width:3840px;height:1200px;transform:scale(0.203125);transform-origin:0 0;overflow:hidden"><div class="a" style="left:0;top:0;width:1920px;height:1200px;overflow:hidden"><div class="a" style="left:0.00px;top:0.00px;width:1920.00px;height:1200.00px;background:#535353;"></div><svg class="a" style="left:19.00px;top:19.00px;overflow:visible;" width="22.00" height="22.00" viewBox="19.00 19.00 22.00 22.00"><defs><linearGradient id="wg" x1="0" y1="0" x2="0" y2="1"><stop offset="0" stop-color="#41a5ee"/><stop offset="0.5" stop-color="#2b7cd3"/><stop offset="1" stop-color="#185abd"/></linearGradient></defs><rect x="24" y="20" width="16" height="20" rx="1.5" fill="url(#wg)"/><rect x="20" y="23.5" width="13.5" height="13" rx="1.5" fill="#185abd"/><path d="M22 26.5 L23.6 33.5 L25.2 28.5 L26.8 33.5 L28.4 26.5" fill="none" stroke="#fff" stroke-width="1.6"/></svg><div id="t126" class="a tx" style="top:23.07px;font-size:15px;line-height:15px;color:#b4b4b4;left:61.20px;transform:scaleX(0.9639);">AutoSave</div><svg class="a" style="left:131.00px;top:16.00px;overflow:visible;" width="56.00" height="27.00" viewBox="131.00 16.00 56.00 27.00"><rect x="132.5" y="17.5" width="53" height="24.5" rx="12.25" fill="none" stroke="#9c9c9c" stroke-width="1.3"/><circle cx="145" cy="29.7" r="9" fill="#9a9a9a"/></svg><div id="t127" class="a tx" style="top:23.36px;font-size:14px;line-height:14px;color:#a8a8a8;left:160.50px;transform:scaleX(0.9394);">Off</div><svg class="a" style="left:201.00px;top:19.00px;overflow:visible;" width="22.00" height="22.00" viewBox="201.00 19.00 22.00 22.00"><path d="M202.5 20.5 H219 L221.5 23 V39.5 H202.5 Z" fill="none" stroke="#a3a3a3" stroke-width="1.2"/><rect x="206" y="20.5" width="11" height="6.5" fill="none" stroke="#a3a3a3" stroke-width="1.2"/><rect x="206" y="32" width="11" height="7.5" fill="none" stroke="#a3a3a3" stroke-width="1.2"/></svg><svg class="a" style="left:236.00px;top:18.00px;overflow:visible;" width="22.00" height="24.00" viewBox="236.00 18.00 22.00 24.00"><path d="M238.6 20.2 V28.8 H247" fill="none" stroke="#a8a8a8" stroke-width="1.3"/><path d="M238.9 28.5 L244.7 22.4 A6.15 6.15 0 0 1 253.4 31.1 L244.9 39.6" fill="none" stroke="#a8a8a8" stroke-width="1.2"/></svg><svg class="a" style="left:261.20px;top:24.00px;overflow:visible;" width="14.00" height="11.00" viewBox="261.20 24.00 14.00 11.00"><path d="M264.7 27.75 L268.2 31.25 L271.7 27.75" fill="none" stroke="#a3a3a3" stroke-width="1.1"/></svg><svg class="a" style="left:283.00px;top:18.00px;overflow:visible;" width="24.00" height="24.00" viewBox="283.00 18.00 24.00 24.00"><path d="M285.1 20.6 H292.6 V27.7" fill="none" stroke="#a8a8a8" stroke-width="1.3"/><path d="M292.4 20.8 L288.4 23.3 A9.2 9.2 0 1 0 300.2 21.5" fill="none" stroke="#a8a8a8" stroke-width="1.2"/></svg><svg class="a" style="left:323.00px;top:25.00px;overflow:visible;" width="13.00" height="12.00" viewBox="323.00 25.00 13.00 12.00"><path d="M325.3 27.4 H334" stroke="#a8a8a8" stroke-width="1"/><path d="M325.8 31 L329.6 34.7 L333.5 31" fill="none" stroke="#a8a8a8" stroke-width="1.1"/></svg><div id="t128" class="a tx" style="top:23.07px;font-size:15px;line-height:15px;color:#b4b4b4;left:365.00px;">Document1&nbsp;&nbsp;-&nbsp;&nbsp;Word</div><div class="a" style="left:711.00px;top:10.00px;width:517.00px;height:40.00px;background:linear-gradient(90deg,#6b6b6b,#7a7a7a);border-radius:4px"></div><svg class="a" style="left:736.00px;top:18.00px;overflow:visible;" width="24.00" height="23.00" viewBox="736.00 18.00 24.00 23.00"><circle cx="750.5" cy="26" r="5.8" fill="none" stroke="#c4c4c4" stroke-width="1.3"/><path d="M746.5 30 L739 38" stroke="#c4c4c4" stroke-width="1.3"/></svg><div id="t129" class="a tx" style="top:21.00px;font-size:17px;line-height:17px;color:#c6c6c6;left:773.40px;transform:scaleX(0.9338);">Search</div><div id="t130" class="a tx" style="top:23.07px;font-size:15px;line-height:15px;color:#b0b0b0;left:1573.60px;transform:scaleX(0.9683);">Taline Kuyumjian</div><svg class="a" style="left:1694.00px;top:14.00px;overflow:visible;" width="32.00" height="32.00" viewBox="1694.00 14.00 32.00 32.00"><circle cx="1710" cy="30" r="15.2" fill="#d3d3d3"/><circle cx="1710" cy="26" r="5.2" fill="none" stroke="#8e8e8e" stroke-width="1.2"/><path d="M1701.5 38.5 C1702.5 33 1706 31.5 1710 31.5 C1714 31.5 1717.5 33 1718.5 38.5" fill="none" stroke="#8e8e8e" stroke-width="1.2"/></svg><div class="a" style="left:1763.50px;top:29.00px;width:13.00px;height:1.20px;background:#a8a8a8;"></div><svg class="a" style="left:1822.00px;top:22.00px;overflow:visible;" width="16.00" height="16.00" viewBox="1822.00 22.00 16.00 16.00"><rect x="1823.6" y="25.8" width="10" height="10" rx="1.5" fill="none" stroke="#a8a8a8" stroke-width="1.1"/><path d="M1826 23.8 H1834 A2 2 0 0 1 1836 25.8 V33.5" fill="none" stroke="#a8a8a8" stroke-width="1.1"/></svg><svg class="a" style="left:1883.00px;top:23.00px;overflow:visible;" width="14.00" height="14.00" viewBox="1883.00 23.00 14.00 14.00"><path d="M1884 24 L1896 36 M1896 24 L1884 36" stroke="#a8a8a8" stroke-width="1.2"/></svg><div id="t131" class="a tx" style="top:71.55px;font-size:17.5px;line-height:17.5px;color:#ffffff;left:27.30px;transform:scaleX(0.8759);">File</div><div id="t132" class="a tx" style="top:71.55px;font-size:17.5px;line-height:17.5px;color:#ffffff;left:154.00px;transform:scaleX(0.9733);">Insert</div><div id="t133" class="a tx" style="top:71.55px;font-size:17.5px;line-height:17.5px;color:#ffffff;left:220.50px;transform:scaleX(0.9428);">Draw</div><div id="t134" class="a tx" style="top:71.55px;font-size:17.5px;line-height:17.5px;color:#ffffff;left:283.20px;transform:scaleX(0.9326);">Design</div><div id="t135" class="a tx" style="top:71.55px;font-size:17.5px;line-height:17.5px;color:#ffffff;left:358.00px;transform:scaleX(0.9516);">Layout</div><div id="t136" class="a tx" style="top:71.55px;font-size:17.5px;line-height:17.5px;color:#ffffff;left:434.00px;transform:scaleX(0.9163);">References</div><div id="t137" class="a tx" style="top:71.55px;font-size:17.5px;line-height:17.5px;color:#ffffff;left:540.00px;transform:scaleX(0.9815);">Mailings</div><div id="t138" class="a tx" style="top:71.55px;font-size:17.5px;line-height:17.5px;color:#ffffff;left:628.00px;transform:scaleX(0.9063);">Review</div><div id="t139" class="a tx" style="top:71.55px;font-size:17.5px;line-height:17.5px;color:#ffffff;left:705.00px;transform:scaleX(0.9571);">View</div><div id="t140" class="a tx" style="top:71.55px;font-size:17.5px;line-height:17.5px;color:#ffffff;left:765.00px;transform:scaleX(0.9725);">Help</div><div id="t141" class="a tx" style="top:71.55px;font-size:17.5px;line-height:17.5px;color:#ffffff;font-weight:700;left:84.40px;transform:scaleX(0.9543);">Home</div><div class="a" style="left:84.40px;top:92.20px;width:47.30px;height:2.40px;background:#a9c5f2;border-radius:1.5px"></div><div class="a" style="left:1550.60px;top:64.50px;width:123.90px;height:28.90px;background:#c0c0c0;border-radius:4px;box-shadow:0 1px 1.5px rgba(0,0,0,0.35)"></div><svg class="a" style="left:1559.00px;top:70.00px;overflow:visible;" width="17.00" height="18.00" viewBox="1559.00 70.00 17.00 18.00"><path d="M1561.4 72.4 H1573.7 V80.4 H1566 L1562.6 84 V80.4 H1561.4 Z" fill="none" stroke="#1f1f1f" stroke-width="1.1"/></svg><div id="t142" class="a tx" style="top:70.80px;font-size:17px;line-height:17px;color:#1f1f1f;left:1580.60px;">Comments</div><div class="a" style="left:1685.30px;top:64.50px;width:108.10px;height:28.90px;background:#c0c0c0;border-radius:4px;box-shadow:0 1px 1.5px rgba(0,0,0,0.35)"></div><svg class="a" style="left:1688.00px;top:67.00px;overflow:visible;" width="23.00" height="24.00" viewBox="1688.00 67.00 23.00 24.00"><path d="M1691 88.5 L1692.5 82 L1704.5 70 A2.2 2.2 0 0 1 1708.5 74 L1696.5 86 Z M1702 72.5 L1706 76.5" fill="none" stroke="#262626" stroke-width="1.2"/></svg><div id="t143" class="a tx" style="top:70.80px;font-size:17px;line-height:17px;color:#1f1f1f;left:1715.50px;transform:scaleX(0.9946);">Editing</div><svg class="a" style="left:1769.50px;top:72.50px;overflow:visible;" width="16.00" height="12.00" viewBox="1769.50 72.50 16.00 12.00"><path d="M1773.5 76.5 L1777.5 80.5 L1781.5 76.5" fill="none" stroke="#262626" stroke-width="1.2"/></svg><div class="a" style="left:1804.00px;top:64.20px;width:101.00px;height:29.60px;background:#85adf1;border-radius:4px;box-shadow:0 1px 1.5px rgba(0,0,0,0.35)"></div><svg class="a" style="left:1812.00px;top:70.00px;overflow:visible;" width="18.00" height="18.00" viewBox="1812.00 70.00 18.00 18.00"><path d="M1814.5 77.2 V85.5 H1825.7 V80.2" fill="none" stroke="#1f1f1f" stroke-width="1.1"/><path d="M1817 80.6 C1817.8 76 1820 74.3 1823.5 74.3 V71.5 L1828.2 76.1 L1823.6 80.3 V78.2 C1821 78.2 1819 79 1817 80.6 Z" fill="none" stroke="#1f1f1f" stroke-width="1"/></svg><div id="t144" class="a tx" style="top:70.80px;font-size:17px;line-height:17px;color:#1f1f1f;left:1834.30px;transform:scaleX(0.9258);">Share</div><svg class="a" style="left:1886.00px;top:72.50px;overflow:visible;" width="16.00" height="12.00" viewBox="1886.00 72.50 16.00 12.00"><path d="M1890.0 76.5 L1894 80.5 L1898.0 76.5" fill="none" stroke="#1f1f1f" stroke-width="1.2"/></svg><div class="a" style="left:10.00px;top:98.00px;width:1900.00px;height:124.00px;background:#bfbfbf;border-radius:9px;box-shadow:0 0 1.5px rgba(0,0,0,0.55),1px 2px 3px rgba(0,0,0,0.4)"></div><svg class="a" style="left:35.00px;top:107.00px;overflow:visible;" width="37.00" height="40.00" viewBox="35.00 107.00 37.00 40.00"><rect x="37.8" y="114.5" width="24.5" height="28.5" fill="#e8e8e8" stroke="#f0b429" stroke-width="1.8"/><path d="M43 117.5 V114 H47.5 A2.5 2.5 0 0 1 52.5 114 H57 V117.5 Z" fill="#e8e8e8" stroke="#454545" stroke-width="1.2"/><rect x="54.2" y="124.3" width="16" height="20.8" fill="#e2e2e2" stroke="#454545" stroke-width="1.3"/></svg><div id="t145" class="a tx" style="top:153.72px;font-size:14.5px;line-height:14.5px;color:#262626;left:34.40px;transform:scaleX(0.8927);">Paste</div><svg class="a" style="left:43.40px;top:173.50px;overflow:visible;" width="14.00" height="11.00" viewBox="43.40 173.50 14.00 11.00"><path d="M46.9 177.25 L50.4 180.75 L53.9 177.25" fill="none" stroke="#262626" stroke-width="1.2"/></svg><svg class="a" style="left:86.00px;top:106.00px;overflow:visible;" width="16.00" height="22.00" viewBox="86.00 106.00 16.00 22.00"><path d="M89.5 107 L97 121 M98.5 107 L91 121" stroke="#8c8c8c" stroke-width="1"/><circle cx="90.5" cy="124" r="2.5" fill="none" stroke="#8c8c8c"/><circle cx="97.5" cy="124" r="2.5" fill="none" stroke="#8c8c8c"/></svg><svg class="a" style="left:83.00px;top:138.00px;overflow:visible;" width="22.00" height="22.00" viewBox="83.00 138.00 22.00 22.00"><path d="M84.5 139.5 H91 V154.5 H84.5 Z" fill="#cfcfcf" stroke="#8c8c8c"/><path d="M89.5 142.5 H98.5 L103 147 V158.5 H89.5 Z" fill="#d8d8d8" stroke="#8c8c8c"/><path d="M92.5 150 H100 M92.5 153 H100 M92.5 156 H100" stroke="#8c8c8c" stroke-width="0.8"/></svg><svg class="a" style="left:84.00px;top:170.00px;overflow:visible;" width="21.00" height="20.00" viewBox="84.00 170.00 21.00 20.00"><path d="M95 178 L101.5 171.5 A1.5 1.5 0 0 1 103.5 173.5 L97 180 Z" fill="#e8e8e8" stroke="#3a3a3a" stroke-width="1.1"/><path d="M85.5 182.5 L92 176 L99 183 L92.5 189 Z" fill="#f0b429" stroke="#3a3a3a" stroke-width="1.1"/><path d="M88 180 L92 176 L96.5 180.5 L92.5 184 Z" fill="#e8e8e8"/></svg><div id="t146" class="a tx" style="top:203.25px;font-size:13.2px;line-height:13.2px;color:#262626;left:27.50px;transform:scaleX(1.0063);">Clipboard</div><svg class="a" style="left:103.00px;top:204.00px;overflow:visible;" width="12.00" height="12.00" viewBox="103.00 204.00 12.00 12.00"><path d="M104 215 V205 H114" fill="none" stroke="#3a3a3a" stroke-width="1"/><path d="M107 208 L113.5 214.5 M113.5 210 V214.5 H109" fill="none" stroke="#3a3a3a" stroke-width="1"/></svg><div class="a" style="left:118.20px;top:104.00px;width:1.00px;height:110.50px;background:#a2a2a2;"></div><div class="a" style="left:129.20px;top:112.00px;width:155.20px;height:29.80px;background:transparent;border:1px solid #7d7d7d;border-radius:4px"></div><div class="a" style="left:130px;top:113px;width:139px;height:28px;overflow:hidden"><div id="t147" class="a tx" style="top:7.17px;font-size:15.2px;line-height:15.2px;color:#262626;left:2.50px;transform:scaleX(1.0232);">Segoe UI Historic (Body)</div></div><svg class="a" style="left:270.50px;top:121.80px;overflow:visible;" width="14.00" height="11.00" viewBox="270.50 121.80 14.00 11.00"><path d="M274.0 125.55 L277.5 129.05 L281.0 125.55" fill="none" stroke="#262626" stroke-width="1.2"/></svg><div class="a" style="left:287.50px;top:112.00px;width:52.90px;height:29.80px;background:transparent;border:1px solid #7d7d7d;border-radius:4px"></div><div id="t148" class="a tx" style="top:120.27px;font-size:15.2px;line-height:15.2px;color:#262626;left:291.00px;transform:scaleX(0.8702);">10</div><svg class="a" style="left:326.00px;top:121.80px;overflow:visible;" width="14.00" height="11.00" viewBox="326.00 121.80 14.00 11.00"><path d="M329.5 125.55 L333 129.05 L336.5 125.55" fill="none" stroke="#262626" stroke-width="1.2"/></svg><div id="t149" class="a tx" style="top:115.04px;font-size:21px;line-height:21px;color:#4a4a4a;left:349.00px;transform:scaleX(0.9638);">A</div><svg class="a" style="left:362.00px;top:114.00px;overflow:visible;" width="8.00" height="7.00" viewBox="362.00 114.00 8.00 7.00"><path d="M363.5 119.5 L366 116.5 L368.5 119.5" fill="none" stroke="#2b6cb0" stroke-width="1.3"/></svg><div id="t150" class="a tx" style="top:118.70px;font-size:17px;line-height:17px;color:#4a4a4a;left:383.00px;transform:scaleX(1.0142);">A</div><svg class="a" style="left:393.00px;top:115.00px;overflow:visible;" width="8.00" height="7.00" viewBox="393.00 115.00 8.00 7.00"><path d="M394.5 116.5 L397 119.5 L399.5 116.5" fill="none" stroke="#2b6cb0" stroke-width="1.3"/></svg><div class="a" style="left:406.90px;top:112.00px;width:1.00px;height:29.80px;background:#a2a2a2;"></div><div id="t151" class="a tx" style="top:119.10px;font-size:17px;line-height:17px;color:#4a4a4a;left:415.50px;transform:scaleX(0.9715);">Aa</div><svg class="a" style="left:439.20px;top:121.80px;overflow:visible;" width="14.00" height="11.00" viewBox="439.20 121.80 14.00 11.00"><path d="M442.7 125.55 L446.2 129.05 L449.7 125.55" fill="none" stroke="#262626" stroke-width="1.2"/></svg><div class="a" style="left:461.80px;top:112.00px;width:1.00px;height:29.80px;background:#a2a2a2;"></div><div id="t152" class="a tx" style="top:116.51px;font-size:18px;line-height:18px;color:#4a4a4a;left:470.40px;transform:scaleX(1.0828);">A</div><svg class="a" style="left:477.00px;top:124.00px;overflow:visible;" width="14.00" height="14.00" viewBox="477.00 124.00 14.00 14.00"><path d="M478.5 131.5 L484.5 125.5 L489.5 130 L483.5 136 Z" fill="#e8e8e8" stroke="#b0287c" stroke-width="1.6"/></svg><div id="t153" class="a tx" style="top:157.64px;font-size:16.5px;line-height:16.5px;color:#4a4a4a;font-weight:700;left:139.70px;transform:scaleX(0.7553);">B</div><div id="t154" class="a tx" style="top:157.64px;font-size:16.5px;line-height:16.5px;color:#4a4a4a;font-style:italic;font-family:'Liberation Serif',serif;left:171.70px;transform:scaleX(1.4560);">I</div><div id="t155" class="a tx" style="top:157.34px;font-size:16.5px;line-height:16.5px;color:#4a4a4a;left:201.60px;transform:scaleX(0.9567);">U</div><div class="a" style="left:201.60px;top:173.20px;width:11.40px;height:1.20px;background:#4a4a4a;"></div><svg class="a" style="left:224.80px;top:162.00px;overflow:visible;" width="14.00" height="11.00" viewBox="224.80 162.00 14.00 11.00"><path d="M228.3 165.75 L231.8 169.25 L235.3 165.75" fill="none" stroke="#262626" stroke-width="1.2"/></svg><div id="t156" class="a tx" style="top:160.46px;font-size:14px;line-height:14px;color:#4a4a4a;left:250.00px;transform:scaleX(1.1944);">ab</div><div class="a" style="left:249.50px;top:168.00px;width:19.50px;height:1.00px;background:#4a4a4a;"></div><div id="t157" class="a tx" style="top:159.66px;font-size:14px;line-height:14px;color:#4a4a4a;left:287.00px;transform:scaleX(1.1429);">x</div><div id="t158" class="a tx" style="top:166.86px;font-size:9.5px;line-height:9.5px;color:#2b6cb0;font-weight:700;left:295.50px;transform:scaleX(0.9464);">2</div><div id="t159" class="a tx" style="top:159.66px;font-size:14px;line-height:14px;color:#4a4a4a;left:318.60px;transform:scaleX(1.1429);">x</div><div id="t160" class="a tx" style="top:154.86px;font-size:9.5px;line-height:9.5px;color:#2b6cb0;font-weight:700;left:327.00px;transform:scaleX(0.9464);">2</div><div class="a" style="left:339.90px;top:152.00px;width:1.00px;height:29.40px;background:#a2a2a2;"></div><div id="t161" class="a tx" style="top:157.52px;font-size:19px;line-height:19px;color:#1565c0;font-weight:700;left:348.50px;transform:scaleX(1.3847);-webkit-text-stroke:1px #0b4f9c;color:#bcd9f5">A</div><svg class="a" style="left:372.00px;top:162.00px;overflow:visible;" width="14.00" height="11.00" viewBox="372.00 162.00 14.00 11.00"><path d="M375.5 165.75 L379 169.25 L382.5 165.75" fill="none" stroke="#262626" stroke-width="1.2"/></svg><svg class="a" style="left:398.00px;top:155.00px;overflow:visible;" width="24.00" height="23.00" viewBox="398.00 155.00 24.00 23.00"><path d="M403 170 L412 160 A2.5 2.5 0 0 1 416.5 164 L407.5 173 L402 171.5 Z" fill="#e8e8e8" stroke="#3a3a3a" stroke-width="1.1"/><path d="M401 171 L404 173 L400 174" fill="#3a3a3a"/></svg><div class="a" style="left:400.00px;top:172.20px;width:20.20px;height:5.00px;background:#ffff00;"></div><svg class="a" style="left:426.30px;top:162.00px;overflow:visible;" width="14.00" height="11.00" viewBox="426.30 162.00 14.00 11.00"><path d="M429.8 165.75 L433.3 169.25 L436.8 165.75" fill="none" stroke="#262626" stroke-width="1.2"/></svg><div id="t162" class="a tx" style="top:155.75px;font-size:17.5px;line-height:17.5px;color:#4a4a4a;left:451.50px;transform:scaleX(1.6278);">A</div><div class="a" style="left:451.00px;top:172.20px;width:20.00px;height:5.00px;background:#ff0000;"></div><svg class="a" style="left:477.00px;top:162.00px;overflow:visible;" width="14.00" height="11.00" viewBox="477.00 162.00 14.00 11.00"><path d="M480.5 165.75 L484 169.25 L487.5 165.75" fill="none" stroke="#262626" stroke-width="1.2"/></svg><div id="t163" class="a tx" style="top:203.25px;font-size:13.2px;line-height:13.2px;color:#262626;left:289.60px;transform:scaleX(0.9171);">Font</div><svg class="a" style="left:489.00px;top:204.00px;overflow:visible;" width="12.00" height="12.00" viewBox="489.00 204.00 12.00 12.00"><path d="M490 215 V205 H500" fill="none" stroke="#3a3a3a" stroke-width="1"/><path d="M493 208 L499.5 214.5 M499.5 210 V214.5 H495" fill="none" stroke="#3a3a3a" stroke-width="1"/></svg><div class="a" style="left:503.80px;top:104.00px;width:1.00px;height:110.50px;background:#a2a2a2;"></div><svg class="a" style="left:510.00px;top:105.00px;overflow:visible;" width="302.00" height="80.00" viewBox="510.00 105.00 302.00 80.00"><rect x="520" y="116.9" width="4" height="4" fill="#1565c0"/><rect x="526.8" y="118.10000000000001" width="12" height="1.6" fill="#5a5a5a"/><rect x="520" y="124.5" width="4" height="4" fill="#1565c0"/><rect x="526.8" y="125.7" width="12" height="1.6" fill="#5a5a5a"/><rect x="520" y="131.8" width="4" height="4" fill="#1565c0"/><rect x="526.8" y="133.0" width="12" height="1.6" fill="#5a5a5a"/><rect x="577.4" y="118.10000000000001" width="12.4" height="1.6" fill="#5a5a5a"/><rect x="577.4" y="125.7" width="12.4" height="1.6" fill="#5a5a5a"/><rect x="577.4" y="133.0" width="12.4" height="1.6" fill="#5a5a5a"/><rect x="629" y="118.1" width="12" height="1.6" fill="#5a5a5a"/><rect x="633" y="125.7" width="8" height="1.6" fill="#5a5a5a"/><rect x="636" y="133" width="5" height="1.6" fill="#5a5a5a"/><rect x="677.9" y="118.1" width="18" height="1.6" fill="#5a5a5a"/><rect x="686.9" y="122.5" width="9" height="1.6" fill="#5a5a5a"/><rect x="686.9" y="127.5" width="9" height="1.6" fill="#5a5a5a"/><rect x="677.9" y="133" width="18" height="1.6" fill="#5a5a5a"/><rect x="709.8" y="118.1" width="18" height="1.6" fill="#5a5a5a"/><rect x="718.8" y="122.5" width="9" height="1.6" fill="#5a5a5a"/><rect x="718.8" y="127.5" width="9" height="1.6" fill="#5a5a5a"/><rect x="709.8" y="133" width="18" height="1.6" fill="#5a5a5a"/><path d="M686 126 H678.5 M681.5 122.8 L678.3 126 L681.5 129.2" fill="none" stroke="#1565c0" stroke-width="1.5"/><path d="M710 126 H717.5 M714.5 122.8 L717.7 126 L714.5 129.2" fill="none" stroke="#1565c0" stroke-width="1.5"/><path d="M761 117 V136 M757 132 L761 136.5 L765 132" fill="none" stroke="#5a5a5a" stroke-width="1.3"/><rect x="515.5" y="152.3" width="29" height="29" rx="5" fill="#c9c9c9" stroke="#8a8a8a" stroke-width="1"/><rect x="521" y="158.0" width="18" height="1.6" fill="#5a5a5a"/><rect x="553.0" y="158.0" width="18" height="1.6" fill="#5a5a5a"/><rect x="584.7" y="158.0" width="18" height="1.6" fill="#5a5a5a"/><rect x="617" y="158.0" width="18" height="1.6" fill="#5a5a5a"/><rect x="521" y="163.2" width="12" height="1.6" fill="#5a5a5a"/><rect x="556.0" y="163.2" width="12" height="1.6" fill="#5a5a5a"/><rect x="590.7" y="163.2" width="12" height="1.6" fill="#5a5a5a"/><rect x="617" y="163.2" width="18" height="1.6" fill="#5a5a5a"/><rect x="521" y="168.2" width="18" height="1.6" fill="#5a5a5a"/><rect x="553.0" y="168.2" width="18" height="1.6" fill="#5a5a5a"/><rect x="584.7" y="168.2" width="18" height="1.6" fill="#5a5a5a"/><rect x="617" y="168.2" width="18" height="1.6" fill="#5a5a5a"/><rect x="521" y="173.39999999999998" width="12" height="1.6" fill="#5a5a5a"/><rect x="556.0" y="173.39999999999998" width="12" height="1.6" fill="#5a5a5a"/><rect x="590.7" y="173.39999999999998" width="12" height="1.6" fill="#5a5a5a"/><rect x="617" y="173.39999999999998" width="18" height="1.6" fill="#5a5a5a"/><rect x="660" y="158.0" width="11" height="1.6" fill="#5a5a5a"/><rect x="660" y="163.2" width="11" height="1.6" fill="#5a5a5a"/><rect x="660" y="168.2" width="11" height="1.6" fill="#5a5a5a"/><rect x="660" y="173.39999999999998" width="11" height="1.6" fill="#5a5a5a"/><path d="M654 157 V176 M651 160 L654 157 L657 160 M651 173 L654 176 L657 173" fill="none" stroke="#1565c0" stroke-width="1.5"/><path d="M711 164 L716.5 158 L722 163.5 L716.5 169 Z" fill="#e0e0e0" stroke="#4a4a4a" stroke-width="1.1"/><path d="M719 158 C722 157 724 159 723.5 163" fill="none" stroke="#1565c0" stroke-width="1.4"/><rect x="706.5" y="172.5" width="19.5" height="3.5" fill="#e0e0e0" stroke="#a0a0a0" stroke-width="0.8"/><rect x="757.5" y="157" width="18.5" height="18" fill="none" stroke="#6a6a6a" stroke-width="0.9" stroke-dasharray="1.2 1.2"/><path d="M766.7 157 V175 M757.5 166 H776" stroke="#6a6a6a" stroke-width="0.9" stroke-dasharray="1.2 1.2"/><rect x="757" y="174.5" width="19.5" height="1.8" fill="#3a3a3a"/></svg><div id="t164" class="a tx" style="top:114.99px;font-size:8px;line-height:8px;color:#1565c0;font-weight:700;left:571.00px;transform:scaleX(0.8541);">1</div><div id="t165" class="a tx" style="top:122.59px;font-size:8px;line-height:8px;color:#1565c0;font-weight:700;left:571.00px;transform:scaleX(0.8541);">2</div><div id="t166" class="a tx" style="top:129.89px;font-size:8px;line-height:8px;color:#1565c0;font-weight:700;left:571.00px;transform:scaleX(0.8541);">3</div><div id="t167" class="a tx" style="top:115.24px;font-size:7.5px;line-height:7.5px;color:#1565c0;font-weight:700;left:622.00px;transform:scaleX(0.8391);">1</div><div id="t168" class="a tx" style="top:122.85px;font-size:8.5px;line-height:8.5px;color:#1565c0;font-weight:700;left:624.50px;transform:scaleX(1.0577);">a</div><div id="t169" class="a tx" style="top:130.84px;font-size:7.5px;line-height:7.5px;color:#1565c0;font-weight:700;left:628.00px;transform:scaleX(0.9598);">i</div><div id="t170" class="a tx" style="top:114.93px;font-size:11px;line-height:11px;color:#1565c0;left:743.80px;transform:scaleX(1.1585);">A</div><div id="t171" class="a tx" style="top:127.83px;font-size:11px;line-height:11px;color:#5a5a5a;left:744.00px;transform:scaleX(1.1906);">Z</div><div id="t172" class="a tx" style="top:118.50px;font-size:17px;line-height:17px;color:#5a5a5a;font-weight:700;left:782.50px;transform:scaleX(1.3750);">&para;</div><svg class="a" style="left:546.50px;top:121.80px;overflow:visible;" width="14.00" height="11.00" viewBox="546.50 121.80 14.00 11.00"><path d="M550.0 125.55 L553.5 129.05 L557.0 125.55" fill="none" stroke="#262626" stroke-width="1.2"/></svg><svg class="a" style="left:597.40px;top:121.80px;overflow:visible;" width="14.00" height="11.00" viewBox="597.40 121.80 14.00 11.00"><path d="M600.9 125.55 L604.4 129.05 L607.9 125.55" fill="none" stroke="#262626" stroke-width="1.2"/></svg><svg class="a" style="left:646.30px;top:121.80px;overflow:visible;" width="14.00" height="11.00" viewBox="646.30 121.80 14.00 11.00"><path d="M649.8 125.55 L653.3 129.05 L656.8 125.55" fill="none" stroke="#262626" stroke-width="1.2"/></svg><svg class="a" style="left:675.70px;top:162.00px;overflow:visible;" width="14.00" height="11.00" viewBox="675.70 162.00 14.00 11.00"><path d="M679.2 165.75 L682.7 169.25 L686.2 165.75" fill="none" stroke="#262626" stroke-width="1.2"/></svg><svg class="a" style="left:732.20px;top:162.00px;overflow:visible;" width="14.00" height="11.00" viewBox="732.20 162.00 14.00 11.00"><path d="M735.7 165.75 L739.2 169.25 L742.7 165.75" fill="none" stroke="#262626" stroke-width="1.2"/></svg><svg class="a" style="left:783.60px;top:162.00px;overflow:visible;" width="14.00" height="11.00" viewBox="783.60 162.00 14.00 11.00"><path d="M787.1 165.75 L790.6 169.25 L794.1 165.75" fill="none" stroke="#262626" stroke-width="1.2"/></svg><div class="a" style="left:669.00px;top:112.00px;width:1.00px;height:29.80px;background:#a2a2a2;"></div><div class="a" style="left:736.00px;top:112.00px;width:1.00px;height:29.80px;background:#a2a2a2;"></div><div class="a" style="left:771.10px;top:112.00px;width:1.00px;height:29.80px;background:#a2a2a2;"></div><div class="a" style="left:642.90px;top:152.30px;width:1.00px;height:29.10px;background:#a2a2a2;"></div><div class="a" style="left:698.00px;top:152.30px;width:1.00px;height:29.10px;background:#a2a2a2;"></div><div id="t173" class="a tx" style="top:203.25px;font-size:13.2px;line-height:13.2px;color:#262626;left:618.00px;transform:scaleX(0.9856);">Paragraph</div><svg class="a" style="left:798.00px;top:204.00px;overflow:visible;" width="12.00" height="12.00" viewBox="798.00 204.00 12.00 12.00"><path d="M799 215 V205 H809" fill="none" stroke="#3a3a3a" stroke-width="1"/><path d="M802 208 L808.5 214.5 M808.5 210 V214.5 H804" fill="none" stroke="#3a3a3a" stroke-width="1"/></svg><div class="a" style="left:813.10px;top:104.00px;width:1.00px;height:110.50px;background:#a2a2a2;"></div><div class="a" style="left:825.70px;top:112.40px;width:695.70px;height:73.90px;background:transparent;border:1px solid #8a8a8a;border-radius:4px"></div><div class="a" style="left:827.30px;top:114.40px;width:134.50px;height:69.10px;background:#c8c8c8;border:1px solid #8a8a8a"></div><div class="a" style="left:832.00px;top:118.90px;width:125.30px;height:60.10px;background:#ffffff;"></div><div class="a" style="left:967.00px;top:118.90px;width:125.30px;height:60.10px;background:#ffffff;"></div><div class="a" style="left:1102.00px;top:118.90px;width:125.30px;height:60.10px;background:#ffffff;"></div><div class="a" style="left:1237.00px;top:118.90px;width:125.30px;height:60.10px;background:#ffffff;"></div><div class="a" style="left:1372.00px;top:118.90px;width:125.30px;height:60.10px;background:#ffffff;"></div><div id="t174" class="a tx" style="top:140.45px;font-size:17.3px;line-height:17.3px;color:#0a0a0a;left:866.80px;transform:scaleX(0.9966);">Normal</div><svg class="a" style="left:975.00px;top:144.00px;overflow:visible;" width="9.00" height="10.00" viewBox="975.00 144.00 9.00 10.00"><circle cx="979.3" cy="149.2" r="3" fill="#0a0a0a"/></svg><div id="t175" class="a tx" style="top:140.45px;font-size:17.3px;line-height:17.3px;color:#0a0a0a;left:991.70px;transform:scaleX(0.9645);">Bulleted List</div><div class="a" style="left:1102px;top:119px;width:125px;height:60px;overflow:hidden"><div id="t176" class="a tx" style="top:21.45px;font-size:17.3px;line-height:17.3px;color:#0b3a7a;font-weight:700;left:2.60px;transform:scaleX(1.0182);">General Emph</div></div><div class="a" style="left:1237px;top:119px;width:125px;height:60px;overflow:hidden"><div id="t177" class="a tx" style="top:18.60px;font-size:26px;line-height:26px;color:#0b2550;letter-spacing:2.5px;left:3.30px;transform:scaleX(1.1682);-webkit-text-stroke:0.7px #0b2550">HEADING 1</div><div class="a" style="left:3.30px;top:43.00px;width:118.70px;height:2.50px;background:#0b2550;"></div></div><div id="t178" class="a tx" style="top:138.95px;font-size:22px;line-height:22px;color:#0d2c5e;letter-spacing:3.5px;left:1375.00px;transform:scaleX(0.9380);-webkit-text-stroke:0.8px #0d2c5e">HEADING</div><div class="a" style="left:1503.60px;top:112.40px;width:1.00px;height:73.90px;background:#8a8a8a;"></div><div class="a" style="left:1504.00px;top:137.30px;width:17.00px;height:1.00px;background:#8a8a8a;"></div><div class="a" style="left:1504.00px;top:160.70px;width:17.00px;height:1.00px;background:#8a8a8a;"></div><svg class="a" style="left:1506.00px;top:120.00px;overflow:visible;" width="13.00" height="9.00" viewBox="1506.00 120.00 13.00 9.00"><path d="M1509.3 126 L1512.5 123 L1515.7 126" fill="none" stroke="#9a9a9a" stroke-width="1"/></svg><svg class="a" style="left:1506.00px;top:145.00px;overflow:visible;" width="13.00" height="10.00" viewBox="1506.00 145.00 13.00 10.00"><path d="M1509.25 148.5 L1512.5 151.5 L1515.75 148.5" fill="none" stroke="#262626" stroke-width="1.1"/></svg><div class="a" style="left:1509.00px;top:169.50px;width:7.50px;height:1.00px;background:#262626;"></div><svg class="a" style="left:1506.00px;top:169.50px;overflow:visible;" width="13.00" height="10.00" viewBox="1506.00 169.50 13.00 10.00"><path d="M1509.25 173.0 L1512.5 176.0 L1515.75 173.0" fill="none" stroke="#262626" stroke-width="1.1"/></svg><div id="t179" class="a tx" style="top:203.25px;font-size:13.2px;line-height:13.2px;color:#262626;left:1147.75px;transform:scaleX(0.9050);">Styles</div><svg class="a" style="left:1519.60px;top:204.00px;overflow:visible;" width="12.00" height="12.00" viewBox="1519.60 204.00 12.00 12.00"><path d="M1520.6 215 V205 H1530.6" fill="none" stroke="#3a3a3a" stroke-width="1"/><path d="M1523.6 208 L1530.1 214.5 M1530.1 210 V214.5 H1525.6" fill="none" stroke="#3a3a3a" stroke-width="1"/></svg><div class="a" style="left:1535.20px;top:104.00px;width:1.00px;height:110.50px;background:#a2a2a2;"></div><svg class="a" style="left:1550.00px;top:106.00px;overflow:visible;" width="24.00" height="22.00" viewBox="1550.00 106.00 24.00 22.00"><circle cx="1564" cy="115.2" r="6.8" fill="#e0e0e0" stroke="#3a3a3a" stroke-width="1.2"/><path d="M1559 120 L1552.3 126" stroke="#3a3a3a" stroke-width="1.4"/></svg><div id="t180" class="a tx" style="top:109.98px;font-size:15.8px;line-height:15.8px;color:#262626;left:1576.50px;transform:scaleX(0.8786);">Find</div><svg class="a" style="left:1616.30px;top:111.80px;overflow:visible;" width="14.00" height="11.00" viewBox="1616.30 111.80 14.00 11.00"><path d="M1619.8 115.55 L1623.3 119.05 L1626.8 115.55" fill="none" stroke="#262626" stroke-width="1.2"/></svg><div id="t181" class="a tx" style="top:139.62px;font-size:10px;line-height:10px;color:#b0287c;left:1558.00px;transform:scaleX(1.0788);">b</div><div id="t182" class="a tx" style="top:150.62px;font-size:10px;line-height:10px;color:#1565c0;left:1563.00px;transform:scaleX(1.2000);">c</div><svg class="a" style="left:1549.00px;top:141.00px;overflow:visible;" width="13.00" height="19.00" viewBox="1549.00 141.00 13.00 19.00"><path d="M1556 146 C1551 147 1550.5 154 1555 155.5 L1559.5 155.5 M1557 153 L1559.5 155.5 L1557 158" fill="none" stroke="#1565c0" stroke-width="1.2"/></svg><div id="t183" class="a tx" style="top:142.23px;font-size:15.8px;line-height:15.8px;color:#262626;left:1576.50px;transform:scaleX(0.8972);">Replace</div><svg class="a" style="left:1552.00px;top:170.00px;overflow:visible;" width="16.00" height="22.00" viewBox="1552.00 170.00 16.00 22.00"><path d="M1553.5 172 V188 L1557.5 184.5 L1560.5 190.5 L1563 189.3 L1560 183 H1565.5 Z" fill="#e8e8e8" stroke="#3a3a3a" stroke-width="1.1"/></svg><div id="t184" class="a tx" style="top:173.68px;font-size:15.8px;line-height:15.8px;color:#262626;left:1576.50px;transform:scaleX(0.8906);">Select</div><svg class="a" style="left:1617.50px;top:175.50px;overflow:visible;" width="14.00" height="11.00" viewBox="1617.50 175.50 14.00 11.00"><path d="M1621.0 179.25 L1624.5 182.75 L1628.0 179.25" fill="none" stroke="#262626" stroke-width="1.2"/></svg><div id="t185" class="a tx" style="top:204.25px;font-size:13.2px;line-height:13.2px;color:#262626;left:1573.30px;transform:scaleX(0.9697);">Editing</div><div class="a" style="left:1649.80px;top:104.00px;width:1.00px;height:110.50px;background:#a2a2a2;"></div><svg class="a" style="left:1672.00px;top:105.00px;overflow:visible;" width="30.00" height="41.00" viewBox="1672.00 105.00 30.00 41.00"><rect x="1679.8" y="107.3" width="14" height="26.5" rx="7" fill="#a9d4f5" stroke="#1565c0" stroke-width="1.4"/><path d="M1675.5 124 C1675.5 141 1698.5 141 1698.5 124" fill="none" stroke="#5a5a5a" stroke-width="1.3"/><path d="M1687 136.5 V144.5" stroke="#5a5a5a" stroke-width="1.3"/></svg><div id="t186" class="a tx" style="top:153.08px;font-size:15.8px;line-height:15.8px;color:#262626;left:1663.70px;transform:scaleX(0.9519);">Dictate</div><svg class="a" style="left:1679.30px;top:174.30px;overflow:visible;" width="14.00" height="11.00" viewBox="1679.30 174.30 14.00 11.00"><path d="M1682.8 178.05 L1686.3 181.55 L1689.8 178.05" fill="none" stroke="#262626" stroke-width="1.2"/></svg><div id="t187" class="a tx" style="top:204.25px;font-size:13.2px;line-height:13.2px;color:#262626;left:1671.30px;transform:scaleX(0.9362);">Voice</div><div class="a" style="left:1723.00px;top:104.00px;width:1.00px;height:110.50px;background:#a2a2a2;"></div><svg class="a" style="left:1739.00px;top:105.00px;overflow:visible;" width="42.00" height="42.00" viewBox="1739.00 105.00 42.00 42.00"><path d="M1751 124 H1776 A3.5 3.5 0 0 1 1776 131 H1749 Z M1753 115 H1777 A3 3 0 0 1 1777 121 H1751 Z M1749 133 H1773 A3 3 0 0 1 1773 139.5 H1746 Z" fill="#1a5cc8"/><path d="M1741.5 144.3 L1744 135 L1762.5 109 L1768 113 L1749.5 139 Z" fill="#e8e8e8" stroke="#1a5cc8" stroke-width="1.5"/><path d="M1762.5 109 L1764 107.3 L1769.5 111 L1768 113 Z" fill="#1a5cc8"/></svg><div id="t188" class="a tx" style="top:151.28px;font-size:15.8px;line-height:15.8px;color:#262626;left:1740.80px;transform:scaleX(0.9499);">Editor</div><div id="t189" class="a tx" style="top:204.25px;font-size:13.2px;line-height:13.2px;color:#262626;left:1742.40px;">Editor</div><div class="a" style="left:1794.80px;top:104.00px;width:1.00px;height:110.50px;background:#a2a2a2;"></div><svg class="a" style="left:1814.00px;top:106.00px;overflow:visible;" width="40.00" height="40.00" viewBox="1814.00 106.00 40.00 40.00"><rect x="1817" y="109.2" width="33.7" height="33.2" fill="none" stroke="#e35d2a" stroke-width="1.9"/><rect x="1820.8" y="112.8" width="11.5" height="11.5" fill="none" stroke="#e35d2a" stroke-width="1.5"/><rect x="1835.5" y="112.8" width="11.5" height="11.5" fill="none" stroke="#e35d2a" stroke-width="1.5"/><rect x="1820.8" y="127.3" width="11.5" height="11.5" fill="none" stroke="#e35d2a" stroke-width="1.5"/><rect x="1835.5" y="127.3" width="11.5" height="11.5" fill="none" stroke="#e35d2a" stroke-width="1.5"/></svg><div id="t190" class="a tx" style="top:151.28px;font-size:15.8px;line-height:15.8px;color:#262626;left:1808.00px;transform:scaleX(0.9615);">Add-ins</div><div id="t191" class="a tx" style="top:204.25px;font-size:13.2px;line-height:13.2px;color:#262626;left:1811.00px;transform:scaleX(0.9930);">Add-ins</div><div class="a" style="left:1871.90px;top:104.00px;width:1.00px;height:110.50px;background:#a2a2a2;"></div><svg class="a" style="left:1878.50px;top:196.30px;overflow:visible;" width="26.00" height="17.00" viewBox="1878.50 196.30 26.00 17.00"><path d="M1885.0 201.55 L1891.5 208.05 L1898.0 201.55" fill="none" stroke="#262626" stroke-width="1.3"/></svg><div class="a" style="left:580.00px;top:226.00px;width:773.00px;height:18.00px;background:#6b6b6b;"></div><svg class="a" style="left:440.00px;top:222.00px;overflow:visible;" width="1040.00" height="30.00" viewBox="440.00 222.00 1040.00 30.00"><rect x="452.4" y="232" width="1.3" height="7.5" fill="#e8e8e8"/><rect x="467.3" y="234.6" width="1.4" height="2.8" fill="#e8e8e8"/><rect x="482.3" y="234.6" width="1.4" height="2.8" fill="#e8e8e8"/><rect x="497.3" y="234.6" width="1.4" height="2.8" fill="#e8e8e8"/><rect x="512.4" y="232" width="1.3" height="7.5" fill="#e8e8e8"/><rect x="527.3" y="234.6" width="1.4" height="2.8" fill="#e8e8e8"/><rect x="542.3" y="234.6" width="1.4" height="2.8" fill="#e8e8e8"/><rect x="557.3" y="234.6" width="1.4" height="2.8" fill="#e8e8e8"/><rect x="572.4" y="232" width="1.3" height="7.5" fill="#e8e8e8"/><rect x="587.3" y="234.6" width="1.4" height="2.8" fill="#e8e8e8"/><rect x="602.3" y="234.6" width="1.4" height="2.8" fill="#e8e8e8"/><rect x="617.3" y="234.6" width="1.4" height="2.8" fill="#e8e8e8"/><rect x="632.4" y="232" width="1.3" height="7.5" fill="#e8e8e8"/><rect x="647.3" y="234.6" width="1.4" height="2.8" fill="#e8e8e8"/><rect x="662.3" y="234.6" width="1.4" height="2.8" fill="#e8e8e8"/><rect x="677.3" y="234.6" width="1.4" height="2.8" fill="#e8e8e8"/><rect x="707.3" y="234.6" width="1.4" height="2.8" fill="#e8e8e8"/><rect x="722.3" y="234.6" width="1.4" height="2.8" fill="#e8e8e8"/><rect x="737.3" y="234.6" width="1.4" height="2.8" fill="#e8e8e8"/><rect x="752.4" y="232" width="1.3" height="7.5" fill="#e8e8e8"/><rect x="767.3" y="234.6" width="1.4" height="2.8" fill="#e8e8e8"/><rect x="782.3" y="234.6" width="1.4" height="2.8" fill="#e8e8e8"/><rect x="797.3" y="234.6" width="1.4" height="2.8" fill="#e8e8e8"/><rect x="827.3" y="234.6" width="1.4" height="2.8" fill="#e8e8e8"/><rect x="842.3" y="234.6" width="1.4" height="2.8" fill="#e8e8e8"/><rect x="857.3" y="234.6" width="1.4" height="2.8" fill="#e8e8e8"/><rect x="872.4" y="232" width="1.3" height="7.5" fill="#e8e8e8"/><rect x="887.3" y="234.6" width="1.4" height="2.8" fill="#e8e8e8"/><rect x="902.3" y="234.6" width="1.4" height="2.8" fill="#e8e8e8"/><rect x="917.3" y="234.6" width="1.4" height="2.8" fill="#e8e8e8"/><rect x="947.3" y="234.6" width="1.4" height="2.8" fill="#e8e8e8"/><rect x="962.3" y="234.6" width="1.4" height="2.8" fill="#e8e8e8"/><rect x="977.3" y="234.6" width="1.4" height="2.8" fill="#e8e8e8"/><rect x="992.4" y="232" width="1.3" height="7.5" fill="#e8e8e8"/><rect x="1007.3" y="234.6" width="1.4" height="2.8" fill="#e8e8e8"/><rect x="1022.3" y="234.6" width="1.4" height="2.8" fill="#e8e8e8"/><rect x="1037.3" y="234.6" width="1.4" height="2.8" fill="#e8e8e8"/><rect x="1067.3" y="234.6" width="1.4" height="2.8" fill="#e8e8e8"/><rect x="1082.3" y="234.6" width="1.4" height="2.8" fill="#e8e8e8"/><rect x="1097.3" y="234.6" width="1.4" height="2.8" fill="#e8e8e8"/><rect x="1112.4" y="232" width="1.3" height="7.5" fill="#e8e8e8"/><rect x="1127.3" y="234.6" width="1.4" height="2.8" fill="#e8e8e8"/><rect x="1142.3" y="234.6" width="1.4" height="2.8" fill="#e8e8e8"/><rect x="1157.3" y="234.6" width="1.4" height="2.8" fill="#e8e8e8"/><rect x="1187.3" y="234.6" width="1.4" height="2.8" fill="#e8e8e8"/><rect x="1202.3" y="234.6" width="1.4" height="2.8" fill="#e8e8e8"/><rect x="1217.3" y="234.6" width="1.4" height="2.8" fill="#e8e8e8"/><rect x="1232.4" y="232" width="1.3" height="7.5" fill="#e8e8e8"/><rect x="1247.3" y="234.6" width="1.4" height="2.8" fill="#e8e8e8"/><rect x="1262.3" y="234.6" width="1.4" height="2.8" fill="#e8e8e8"/><rect x="1277.3" y="234.6" width="1.4" height="2.8" fill="#e8e8e8"/><rect x="1307.3" y="234.6" width="1.4" height="2.8" fill="#e8e8e8"/><rect x="1322.3" y="234.6" width="1.4" height="2.8" fill="#e8e8e8"/><rect x="1337.3" y="234.6" width="1.4" height="2.8" fill="#e8e8e8"/><rect x="1352.4" y="232" width="1.3" height="7.5" fill="#e8e8e8"/><rect x="1367.3" y="234.6" width="1.4" height="2.8" fill="#e8e8e8"/><rect x="1382.3" y="234.6" width="1.4" height="2.8" fill="#e8e8e8"/><rect x="1397.3" y="234.6" width="1.4" height="2.8" fill="#e8e8e8"/><rect x="1412.4" y="232" width="1.3" height="7.5" fill="#e8e8e8"/><rect x="1427.3" y="234.6" width="1.4" height="2.8" fill="#e8e8e8"/><rect x="1442.3" y="234.6" width="1.4" height="2.8" fill="#e8e8e8"/><rect x="1457.3" y="234.6" width="1.4" height="2.8" fill="#e8e8e8"/></svg><div id="t192" class="a tx" style="top:228.85px;font-size:13px;line-height:13px;color:#e8e8e8;left:689.50px;transform:scaleX(0.9682);">1</div><div id="t193" class="a tx" style="top:228.85px;font-size:13px;line-height:13px;color:#e8e8e8;left:809.50px;transform:scaleX(0.9682);">2</div><div id="t194" class="a tx" style="top:228.85px;font-size:13px;line-height:13px;color:#e8e8e8;left:929.50px;transform:scaleX(0.9682);">3</div><div id="t195" class="a tx" style="top:228.85px;font-size:13px;line-height:13px;color:#e8e8e8;left:1049.50px;transform:scaleX(0.9682);">4</div><div id="t196" class="a tx" style="top:228.85px;font-size:13px;line-height:13px;color:#e8e8e8;left:1169.50px;transform:scaleX(0.9682);">5</div><div id="t197" class="a tx" style="top:228.85px;font-size:13px;line-height:13px;color:#e8e8e8;left:1289.50px;transform:scaleX(0.9682);">6</div><svg class="a" style="left:566.00px;top:224.00px;overflow:visible;" width="16.00" height="28.00" viewBox="566.00 224.00 16.00 28.00"><path d="M567.7 225.5 H580.3 V229 L574 236 L567.7 229 Z" fill="#c9c9c9"/><path d="M574 236 L580.3 242.5 V245.5 H567.7 V242.5 Z" fill="#c9c9c9"/><rect x="567.7" y="246.5" width="12.6" height="5.5" fill="#c9c9c9"/></svg><svg class="a" style="left:1346.00px;top:235.00px;overflow:visible;" width="15.00" height="12.00" viewBox="1346.00 235.00 15.00 12.00"><path d="M1353.5 236.3 L1359.8 241.5 V245.2 H1347.2 V241.5 Z" fill="#c4c4c4"/></svg><svg class="a" style="left:9.00px;top:232.00px;overflow:visible;" width="10.00" height="11.00" viewBox="9.00 232.00 10.00 11.00"><path d="M11.3 233.6 V241 H17.7" fill="none" stroke="#f0f0f0" stroke-width="2.2"/></svg><div class="a" style="left:0.00px;top:251.00px;width:1920.00px;height:1.00px;background:#6a6a6a;"></div><div class="a" style="left:28.80px;top:222.00px;width:1.00px;height:901.00px;background:#666666;"></div><div class="a" style="left:4.00px;top:291.00px;width:19.00px;height:832.00px;background:#6b6b6b;"></div><svg class="a" style="left:0.00px;top:252.00px;overflow:visible;" width="30.00" height="871.00" viewBox="0.00 252.00 30.00 871.00"><rect x="13.6" y="259.8" width="2.8" height="1.4" fill="#e8e8e8"/><rect x="13.6" y="274.8" width="2.8" height="1.4" fill="#e8e8e8"/><rect x="13.6" y="304.8" width="2.8" height="1.4" fill="#e8e8e8"/><rect x="13.6" y="319.8" width="2.8" height="1.4" fill="#e8e8e8"/><rect x="13.6" y="334.8" width="2.8" height="1.4" fill="#e8e8e8"/><rect x="11.5" y="350.5" width="7" height="1.2" fill="#e8e8e8"/><rect x="13.6" y="364.8" width="2.8" height="1.4" fill="#e8e8e8"/><rect x="13.6" y="379.8" width="2.8" height="1.4" fill="#e8e8e8"/><rect x="13.6" y="394.8" width="2.8" height="1.4" fill="#e8e8e8"/><rect x="13.6" y="424.8" width="2.8" height="1.4" fill="#e8e8e8"/><rect x="13.6" y="439.8" width="2.8" height="1.4" fill="#e8e8e8"/><rect x="13.6" y="454.8" width="2.8" height="1.4" fill="#e8e8e8"/><rect x="11.5" y="470.5" width="7" height="1.2" fill="#e8e8e8"/><rect x="13.6" y="484.8" width="2.8" height="1.4" fill="#e8e8e8"/><rect x="13.6" y="499.8" width="2.8" height="1.4" fill="#e8e8e8"/><rect x="13.6" y="514.8" width="2.8" height="1.4" fill="#e8e8e8"/><rect x="13.6" y="544.8" width="2.8" height="1.4" fill="#e8e8e8"/><rect x="13.6" y="559.8" width="2.8" height="1.4" fill="#e8e8e8"/><rect x="13.6" y="574.8" width="2.8" height="1.4" fill="#e8e8e8"/><rect x="11.5" y="590.5" width="7" height="1.2" fill="#e8e8e8"/><rect x="13.6" y="604.8" width="2.8" height="1.4" fill="#e8e8e8"/><rect x="13.6" y="619.8" width="2.8" height="1.4" fill="#e8e8e8"/><rect x="13.6" y="634.8" width="2.8" height="1.4" fill="#e8e8e8"/><rect x="13.6" y="664.8" width="2.8" height="1.4" fill="#e8e8e8"/><rect x="13.6" y="679.8" width="2.8" height="1.4" fill="#e8e8e8"/><rect x="13.6" y="694.8" width="2.8" height="1.4" fill="#e8e8e8"/><rect x="11.5" y="710.5" width="7" height="1.2" fill="#e8e8e8"/><rect x="13.6" y="724.8" width="2.8" height="1.4" fill="#e8e8e8"/><rect x="13.6" y="739.8" width="2.8" height="1.4" fill="#e8e8e8"/><rect x="13.6" y="754.8" width="2.8" height="1.4" fill="#e8e8e8"/><rect x="13.6" y="784.8" width="2.8" height="1.4" fill="#e8e8e8"/><rect x="13.6" y="799.8" width="2.8" height="1.4" fill="#e8e8e8"/><rect x="13.6" y="814.8" width="2.8" height="1.4" fill="#e8e8e8"/><rect x="11.5" y="830.5" width="7" height="1.2" fill="#e8e8e8"/><rect x="13.6" y="844.8" width="2.8" height="1.4" fill="#e8e8e8"/><rect x="13.6" y="859.8" width="2.8" height="1.4" fill="#e8e8e8"/><rect x="13.6" y="874.8" width="2.8" height="1.4" fill="#e8e8e8"/><rect x="13.6" y="904.8" width="2.8" height="1.4" fill="#e8e8e8"/><rect x="13.6" y="919.8" width="2.8" height="1.4" fill="#e8e8e8"/><rect x="13.6" y="934.8" width="2.8" height="1.4" fill="#e8e8e8"/><rect x="11.5" y="950.5" width="7" height="1.2" fill="#e8e8e8"/><rect x="13.6" y="964.8" width="2.8" height="1.4" fill="#e8e8e8"/><rect x="13.6" y="979.8" width="2.8" height="1.4" fill="#e8e8e8"/><rect x="13.6" y="994.8" width="2.8" height="1.4" fill="#e8e8e8"/><rect x="13.6" y="1024.8" width="2.8" height="1.4" fill="#e8e8e8"/><rect x="13.6" y="1039.8" width="2.8" height="1.4" fill="#e8e8e8"/><rect x="13.6" y="1054.8" width="2.8" height="1.4" fill="#e8e8e8"/><rect x="11.5" y="1070.5" width="7" height="1.2" fill="#e8e8e8"/><rect x="13.6" y="1084.8" width="2.8" height="1.4" fill="#e8e8e8"/><rect x="13.6" y="1099.8" width="2.8" height="1.4" fill="#e8e8e8"/><rect x="13.6" y="1114.8" width="2.8" height="1.4" fill="#e8e8e8"/></svg><div class="a" style="left:8px;top:404px;width:14px;height:14px;"><div id="t198" class="a tx" style="top:0.65px;font-size:13px;line-height:13px;color:#e8e8e8;left:3.50px;transform:scaleX(0.9682);transform-origin:50% 50%;rotate:-90deg">1</div></div><div class="a" style="left:8px;top:524px;width:14px;height:14px;"><div id="t199" class="a tx" style="top:0.65px;font-size:13px;line-height:13px;color:#e8e8e8;left:3.50px;transform:scaleX(0.9682);transform-origin:50% 50%;rotate:-90deg">2</div></div><div class="a" style="left:8px;top:644px;width:14px;height:14px;"><div id="t200" class="a tx" style="top:0.65px;font-size:13px;line-height:13px;color:#e8e8e8;left:3.50px;transform:scaleX(0.9682);transform-origin:50% 50%;rotate:-90deg">3</div></div><div class="a" style="left:8px;top:764px;width:14px;height:14px;"><div id="t201" class="a tx" style="top:0.65px;font-size:13px;line-height:13px;color:#e8e8e8;left:3.50px;transform:scaleX(0.9682);transform-origin:50% 50%;rotate:-90deg">4</div></div><div class="a" style="left:8px;top:884px;width:14px;height:14px;"><div id="t202" class="a tx" style="top:0.65px;font-size:13px;line-height:13px;color:#e8e8e8;left:3.50px;transform:scaleX(0.9682);transform-origin:50% 50%;rotate:-90deg">5</div></div><div class="a" style="left:8px;top:1004px;width:14px;height:14px;"><div id="t203" class="a tx" style="top:0.65px;font-size:13px;line-height:13px;color:#e8e8e8;left:3.50px;transform:scaleX(0.9682);transform-origin:50% 50%;rotate:-90deg">6</div></div><div class="a" style="left:30px;top:252px;width:1890px;height:871px;overflow:hidden"><div class="a" style="left:-30px;top:-252px;width:1920px;height:1200px"><div class="a" style="left:454.00px;top:252.00px;width:1020.00px;height:446.60px;background:#ffffff;"></div><div class="a" style="left:454.00px;top:722.00px;width:1020.00px;height:401.00px;background:#ffffff;"></div><div class="a" style="left:0;top:252px;width:1920px;height:446.6px;overflow:hidden"><div class="a" style="left:574px;top:-6.400000000000006px;width:3840px;height:1200px;transform:scale(0.203125);transform-origin:0 0;overflow:hidden"><div class="a" style="left:0.00px;top:0.00px;width:1920.00px;height:1200.00px;background:#535353;"></div><div class="a" style="left:711.00px;top:10.00px;width:517.00px;height:40.00px;background:#767676;border-radius:4px"></div><div class="a" style="left:1550.00px;top:64.00px;width:243.00px;height:30.00px;background:#c6c6c6;"></div><div class="a" style="left:1804.00px;top:64.00px;width:101.00px;height:30.00px;background:#85adf1;"></div><div class="a" style="left:10.00px;top:98.00px;width:1900.00px;height:124.00px;background:#bfbfbf;border-radius:9px"></div><div class="a" style="left:30.00px;top:108.00px;width:780.00px;height:34.00px;background:#a8a8a8;"></div><div class="a" style="left:30.00px;top:152.00px;width:780.00px;height:30.00px;background:#acacac;"></div><div class="a" style="left:1545.00px;top:105.00px;width:355.00px;height:85.00px;background:#ababab;"></div><div class="a" style="left:832.00px;top:119.00px;width:665.00px;height:60.00px;background:#ffffff;"></div><div class="a" style="left:957.00px;top:119.00px;width:10.00px;height:60.00px;background:#c5c5c5;"></div><div class="a" style="left:1092.00px;top:119.00px;width:10.00px;height:60.00px;background:#c5c5c5;"></div><div class="a" style="left:1227.00px;top:119.00px;width:10.00px;height:60.00px;background:#c5c5c5;"></div><div class="a" style="left:1362.00px;top:119.00px;width:10.00px;height:60.00px;background:#c5c5c5;"></div><div class="a" style="left:1237.00px;top:140.00px;width:125.00px;height:20.00px;background:#6a7a96;"></div><div class="a" style="left:1375.00px;top:141.00px;width:117.00px;height:17.00px;background:#8090aa;"></div><div class="a" style="left:1816.00px;top:108.00px;width:36.00px;height:36.00px;background:#e8a080;"></div><div class="a" style="left:580.00px;top:226.00px;width:773.00px;height:18.00px;background:#6b6b6b;"></div><div class="a" style="left:454.00px;top:252.00px;width:1020.00px;height:871.00px;background:#ffffff;"></div><div class="a" style="left:0;top:252px;width:1920px;height:871px;overflow:hidden"><div class="a" style="left:574.00px;top:100.00px;width:390.00px;height:243.75px;background:#535353;"></div><div class="a" style="left:576.03px;top:119.91px;width:385.94px;height:25.19px;background:#c5c5c5;"></div><div class="a" style="left:743.00px;top:124.17px;width:135.08px;height:12.19px;background:#f4f4f4;"></div><div class="a" style="left:666.22px;top:151.19px;width:207.19px;height:176.92px;background:#ffffff;"></div><div class="a" style="left:690.59px;top:160.94px;width:79.22px;height:49.56px;background:#666666;"></div><div class="a" style="left:709.28px;top:171.30px;width:42.05px;height:35.95px;background:#e8e8e8;"></div><div class="a" style="left:769.81px;top:160.94px;width:79.22px;height:49.56px;background:#f0f0f0;"></div><div class="a" style="left:769.81px;top:205.42px;width:79.22px;height:5.08px;background:#111111;"></div><div class="a" style="left:690.59px;top:213.75px;width:79.22px;height:49.56px;background:#666666;"></div><div class="a" style="left:709.28px;top:224.11px;width:42.05px;height:35.95px;background:#e8e8e8;"></div><div class="a" style="left:769.81px;top:213.75px;width:79.22px;height:49.56px;background:#f0f0f0;"></div><div class="a" style="left:769.81px;top:258.23px;width:79.22px;height:5.08px;background:#111111;"></div><div class="a" style="left:690.59px;top:266.56px;width:79.22px;height:49.56px;background:#666666;"></div><div class="a" style="left:709.28px;top:276.92px;width:42.05px;height:35.95px;background:#e8e8e8;"></div><div class="a" style="left:769.81px;top:266.56px;width:79.22px;height:49.56px;background:#f0f0f0;"></div><div class="a" style="left:769.81px;top:311.05px;width:79.22px;height:5.08px;background:#111111;"></div><div class="a" style="left:574.00px;top:328.11px;width:390.00px;height:15.64px;background:#454443;"></div><div class="a" style="left:586.19px;top:333.59px;width:73.12px;height:10.16px;background:#e0e0e0;"></div><div class="a" style="left:964.00px;top:100.00px;width:390.00px;height:17.67px;background:#161616;"></div><div class="a" style="left:964.00px;top:117.67px;width:390.00px;height:193.58px;background:#ffffff;"></div><div class="a" style="left:968.88px;top:139.41px;width:301.64px;height:171.84px;background:#d9d9d9;"></div><div class="a" style="left:1041.59px;top:139.41px;width:156.20px;height:159.66px;background:#f7f7f7;"></div><div class="a" style="left:1275.80px;top:139.61px;width:72.31px;height:158.44px;background:#444a52;"></div><div class="a" style="left:1277.62px;top:146.11px;width:69.06px;height:149.30px;background:#f4f4f4;"></div><div class="a" style="left:964.00px;top:311.25px;width:390.00px;height:32.50px;background:#0a0a0a;"></div><div class="a" style="left:574.00px;top:348.00px;width:390.00px;height:243.75px;background:#535353;"></div><div class="a" style="left:576.03px;top:367.91px;width:385.94px;height:25.19px;background:#c5c5c5;"></div><div class="a" style="left:743.00px;top:372.17px;width:135.08px;height:12.19px;background:#f4f4f4;"></div><div class="a" style="left:666.22px;top:399.19px;width:207.19px;height:176.92px;background:#ffffff;"></div><div class="a" style="left:690.59px;top:408.94px;width:79.22px;height:49.56px;background:#666666;"></div><div class="a" style="left:709.28px;top:419.30px;width:42.05px;height:35.95px;background:#e8e8e8;"></div><div class="a" style="left:769.81px;top:408.94px;width:79.22px;height:49.56px;background:#f0f0f0;"></div><div class="a" style="left:769.81px;top:453.42px;width:79.22px;height:5.08px;background:#111111;"></div><div class="a" style="left:690.59px;top:461.75px;width:79.22px;height:49.56px;background:#666666;"></div><div class="a" style="left:709.28px;top:472.11px;width:42.05px;height:35.95px;background:#e8e8e8;"></div><div class="a" style="left:769.81px;top:461.75px;width:79.22px;height:49.56px;background:#f0f0f0;"></div><div class="a" style="left:769.81px;top:506.23px;width:79.22px;height:5.08px;background:#111111;"></div><div class="a" style="left:690.59px;top:514.56px;width:79.22px;height:49.56px;background:#666666;"></div><div class="a" style="left:709.28px;top:524.92px;width:42.05px;height:35.95px;background:#e8e8e8;"></div><div class="a" style="left:769.81px;top:514.56px;width:79.22px;height:49.56px;background:#f0f0f0;"></div><div class="a" style="left:769.81px;top:559.05px;width:79.22px;height:5.08px;background:#111111;"></div><div class="a" style="left:574.00px;top:576.11px;width:390.00px;height:15.64px;background:#454443;"></div><div class="a" style="left:586.19px;top:581.59px;width:73.12px;height:10.16px;background:#e0e0e0;"></div><div class="a" style="left:964.00px;top:348.00px;width:390.00px;height:17.67px;background:#161616;"></div><div class="a" style="left:964.00px;top:365.67px;width:390.00px;height:193.58px;background:#ffffff;"></div><div class="a" style="left:968.88px;top:387.41px;width:301.64px;height:171.84px;background:#d9d9d9;"></div><div class="a" style="left:1041.59px;top:387.41px;width:156.20px;height:159.66px;background:#f7f7f7;"></div><div class="a" style="left:1275.80px;top:387.61px;width:72.31px;height:158.44px;background:#444a52;"></div><div class="a" style="left:1277.62px;top:394.11px;width:69.06px;height:149.30px;background:#f4f4f4;"></div><div class="a" style="left:964.00px;top:559.25px;width:390.00px;height:32.50px;background:#0a0a0a;"></div><div class="a" style="left:574.00px;top:596.00px;width:390.00px;height:243.75px;background:#535353;"></div><div class="a" style="left:576.03px;top:615.91px;width:385.94px;height:25.19px;background:#c5c5c5;"></div><div class="a" style="left:743.00px;top:620.17px;width:135.08px;height:12.19px;background:#f4f4f4;"></div><div class="a" style="left:666.22px;top:647.19px;width:207.19px;height:176.92px;background:#ffffff;"></div><div class="a" style="left:690.59px;top:656.94px;width:79.22px;height:49.56px;background:#666666;"></div><div class="a" style="left:709.28px;top:667.30px;width:42.05px;height:35.95px;background:#e8e8e8;"></div><div class="a" style="left:769.81px;top:656.94px;width:79.22px;height:49.56px;background:#f0f0f0;"></div><div class="a" style="left:769.81px;top:701.42px;width:79.22px;height:5.08px;background:#111111;"></div><div class="a" style="left:690.59px;top:709.75px;width:79.22px;height:49.56px;background:#666666;"></div><div class="a" style="left:709.28px;top:720.11px;width:42.05px;height:35.95px;background:#e8e8e8;"></div><div class="a" style="left:769.81px;top:709.75px;width:79.22px;height:49.56px;background:#f0f0f0;"></div><div class="a" style="left:769.81px;top:754.23px;width:79.22px;height:5.08px;background:#111111;"></div><div class="a" style="left:690.59px;top:762.56px;width:79.22px;height:49.56px;background:#666666;"></div><div class="a" style="left:709.28px;top:772.92px;width:42.05px;height:35.95px;background:#e8e8e8;"></div><div class="a" style="left:769.81px;top:762.56px;width:79.22px;height:49.56px;background:#f0f0f0;"></div><div class="a" style="left:769.81px;top:807.05px;width:79.22px;height:5.08px;background:#111111;"></div><div class="a" style="left:574.00px;top:824.11px;width:390.00px;height:15.64px;background:#454443;"></div><div class="a" style="left:586.19px;top:829.59px;width:73.12px;height:10.16px;background:#e0e0e0;"></div><div class="a" style="left:964.00px;top:596.00px;width:390.00px;height:17.67px;background:#161616;"></div><div class="a" style="left:964.00px;top:613.67px;width:390.00px;height:193.58px;background:#ffffff;"></div><div class="a" style="left:968.88px;top:635.41px;width:301.64px;height:171.84px;background:#d9d9d9;"></div><div class="a" style="left:1041.59px;top:635.41px;width:156.20px;height:159.66px;background:#f7f7f7;"></div><div class="a" style="left:1275.80px;top:635.61px;width:72.31px;height:158.44px;background:#444a52;"></div><div class="a" style="left:1277.62px;top:642.11px;width:69.06px;height:149.30px;background:#f4f4f4;"></div><div class="a" style="left:964.00px;top:807.25px;width:390.00px;height:32.50px;background:#0a0a0a;"></div></div><div class="a" style="left:0.00px;top:1123.00px;width:1920.00px;height:27.00px;background:#4b4b4b;"></div><div class="a" style="left:0.00px;top:1150.00px;width:1920.00px;height:50.00px;background:#3c3b39;"></div><div class="a" style="left:60.00px;top:1150.00px;width:360.00px;height:50.00px;background:#f2f2f2;"></div><div class="a" style="left:325.00px;top:1155.00px;width:90.00px;height:39.00px;background:#e2e2e2;"></div><div class="a" style="left:351.00px;top:1162.00px;width:38.00px;height:27.00px;background:#e09010;"></div><div class="a" style="left:1920.00px;top:0.00px;width:1920.00px;height:40.00px;background:#000;"></div><div class="a" style="left:1920.00px;top:40.00px;width:1920.00px;height:47.00px;background:#282828;"></div><div class="a" style="left:2040.00px;top:46.00px;width:1626.00px;height:33.00px;background:#3c3c3c;border-radius:17px"></div><div class="a" style="left:1920.00px;top:87.00px;width:1920.00px;height:953.00px;background:#ffffff;"></div><div class="a" style="left:1944.00px;top:111.00px;width:132.00px;height:35.00px;background:#0b6fd3;"></div><div class="a" style="left:2092.00px;top:111.00px;width:143.00px;height:35.00px;background:#fff;border:2px solid #0b6fd3"></div><div class="a" style="left:3654.00px;top:111.00px;width:162.00px;height:35.00px;background:#0b6fd3;"></div><div class="a" style="left:1944.00px;top:194.00px;width:1485.00px;height:846.00px;background:#d9d9d9;"></div><div class="a" style="left:2302.00px;top:194.00px;width:769.00px;height:786.00px;background:#ffffff;"></div><div class="a" style="left:2316.00px;top:230.00px;width:740.00px;height:45.00px;background:#efefef;"></div><div class="a" style="left:2316.00px;top:290.00px;width:740.00px;height:45.00px;background:#efefef;"></div><div class="a" style="left:2316.00px;top:350.00px;width:740.00px;height:45.00px;background:#efefef;"></div><div class="a" style="left:2316.00px;top:410.00px;width:740.00px;height:45.00px;background:#efefef;"></div><div class="a" style="left:2316.00px;top:470.00px;width:740.00px;height:45.00px;background:#efefef;"></div><div class="a" style="left:2316.00px;top:590.00px;width:740.00px;height:45.00px;background:#efefef;"></div><div class="a" style="left:2316.00px;top:700.00px;width:740.00px;height:45.00px;background:#efefef;"></div><div class="a" style="left:2316.00px;top:760.00px;width:740.00px;height:45.00px;background:#efefef;"></div><div class="a" style="left:3455.00px;top:195.00px;width:356.00px;height:780.00px;background:#222831;border-radius:37px"></div><div class="a" style="left:3464.00px;top:227.00px;width:340.00px;height:735.00px;background:#f4f4f4;border-radius:20px"></div><div class="a" style="left:3464.00px;top:870.00px;width:340.00px;height:92.00px;background:#d9d9d9;"></div><div class="a" style="left:1920.00px;top:1040.00px;width:1920.00px;height:40.00px;background:#3d3c3a;"></div><div class="a" style="left:1920.00px;top:1080.00px;width:1920.00px;height:120.00px;background:#000000;"></div></div></div><div class="a" style="left:574px;top:839px;width:3840px;height:1200px;transform:scale(0.203125);transform-origin:0 0;overflow:hidden"><div class="a" style="left:0.00px;top:0.00px;width:1920.00px;height:1200.00px;background:#535353;"></div><div class="a" style="left:711.00px;top:10.00px;width:517.00px;height:40.00px;background:#767676;border-radius:4px"></div><div class="a" style="left:1550.00px;top:64.00px;width:243.00px;height:30.00px;background:#c6c6c6;"></div><div class="a" style="left:1804.00px;top:64.00px;width:101.00px;height:30.00px;background:#85adf1;"></div><div class="a" style="left:10.00px;top:98.00px;width:1900.00px;height:124.00px;background:#bfbfbf;border-radius:9px"></div><div class="a" style="left:30.00px;top:108.00px;width:780.00px;height:34.00px;background:#a8a8a8;"></div><div class="a" style="left:30.00px;top:152.00px;width:780.00px;height:30.00px;background:#acacac;"></div><div class="a" style="left:1545.00px;top:105.00px;width:355.00px;height:85.00px;background:#ababab;"></div><div class="a" style="left:832.00px;top:119.00px;width:665.00px;height:60.00px;background:#ffffff;"></div><div class="a" style="left:957.00px;top:119.00px;width:10.00px;height:60.00px;background:#c5c5c5;"></div><div class="a" style="left:1092.00px;top:119.00px;width:10.00px;height:60.00px;background:#c5c5c5;"></div><div class="a" style="left:1227.00px;top:119.00px;width:10.00px;height:60.00px;background:#c5c5c5;"></div><div class="a" style="left:1362.00px;top:119.00px;width:10.00px;height:60.00px;background:#c5c5c5;"></div><div class="a" style="left:1237.00px;top:140.00px;width:125.00px;height:20.00px;background:#6a7a96;"></div><div class="a" style="left:1375.00px;top:141.00px;width:117.00px;height:17.00px;background:#8090aa;"></div><div class="a" style="left:1816.00px;top:108.00px;width:36.00px;height:36.00px;background:#e8a080;"></div><div class="a" style="left:580.00px;top:226.00px;width:773.00px;height:18.00px;background:#6b6b6b;"></div><div class="a" style="left:454.00px;top:252.00px;width:1020.00px;height:871.00px;background:#ffffff;"></div><div class="a" style="left:0;top:252px;width:1920px;height:871px;overflow:hidden"><div class="a" style="left:574.00px;top:100.00px;width:390.00px;height:243.75px;background:#535353;"></div><div class="a" style="left:576.03px;top:119.91px;width:385.94px;height:25.19px;background:#c5c5c5;"></div><div class="a" style="left:743.00px;top:124.17px;width:135.08px;height:12.19px;background:#f4f4f4;"></div><div class="a" style="left:666.22px;top:151.19px;width:207.19px;height:176.92px;background:#ffffff;"></div><div class="a" style="left:690.59px;top:160.94px;width:79.22px;height:49.56px;background:#666666;"></div><div class="a" style="left:709.28px;top:171.30px;width:42.05px;height:35.95px;background:#e8e8e8;"></div><div class="a" style="left:769.81px;top:160.94px;width:79.22px;height:49.56px;background:#f0f0f0;"></div><div class="a" style="left:769.81px;top:205.42px;width:79.22px;height:5.08px;background:#111111;"></div><div class="a" style="left:690.59px;top:213.75px;width:79.22px;height:49.56px;background:#666666;"></div><div class="a" style="left:709.28px;top:224.11px;width:42.05px;height:35.95px;background:#e8e8e8;"></div><div class="a" style="left:769.81px;top:213.75px;width:79.22px;height:49.56px;background:#f0f0f0;"></div><div class="a" style="left:769.81px;top:258.23px;width:79.22px;height:5.08px;background:#111111;"></div><div class="a" style="left:690.59px;top:266.56px;width:79.22px;height:49.56px;background:#666666;"></div><div class="a" style="left:709.28px;top:276.92px;width:42.05px;height:35.95px;background:#e8e8e8;"></div><div class="a" style="left:769.81px;top:266.56px;width:79.22px;height:49.56px;background:#f0f0f0;"></div><div class="a" style="left:769.81px;top:311.05px;width:79.22px;height:5.08px;background:#111111;"></div><div class="a" style="left:574.00px;top:328.11px;width:390.00px;height:15.64px;background:#454443;"></div><div class="a" style="left:586.19px;top:333.59px;width:73.12px;height:10.16px;background:#e0e0e0;"></div><div class="a" style="left:964.00px;top:100.00px;width:390.00px;height:17.67px;background:#161616;"></div><div class="a" style="left:964.00px;top:117.67px;width:390.00px;height:193.58px;background:#ffffff;"></div><div class="a" style="left:968.88px;top:139.41px;width:301.64px;height:171.84px;background:#d9d9d9;"></div><div class="a" style="left:1041.59px;top:139.41px;width:156.20px;height:159.66px;background:#f7f7f7;"></div><div class="a" style="left:1275.80px;top:139.61px;width:72.31px;height:158.44px;background:#444a52;"></div><div class="a" style="left:1277.62px;top:146.11px;width:69.06px;height:149.30px;background:#f4f4f4;"></div><div class="a" style="left:964.00px;top:311.25px;width:390.00px;height:32.50px;background:#0a0a0a;"></div><div class="a" style="left:574.00px;top:348.00px;width:390.00px;height:243.75px;background:#535353;"></div><div class="a" style="left:576.03px;top:367.91px;width:385.94px;height:25.19px;background:#c5c5c5;"></div><div class="a" style="left:743.00px;top:372.17px;width:135.08px;height:12.19px;background:#f4f4f4;"></div><div class="a" style="left:666.22px;top:399.19px;width:207.19px;height:176.92px;background:#ffffff;"></div><div class="a" style="left:690.59px;top:408.94px;width:79.22px;height:49.56px;background:#666666;"></div><div class="a" style="left:709.28px;top:419.30px;width:42.05px;height:35.95px;background:#e8e8e8;"></div><div class="a" style="left:769.81px;top:408.94px;width:79.22px;height:49.56px;background:#f0f0f0;"></div><div class="a" style="left:769.81px;top:453.42px;width:79.22px;height:5.08px;background:#111111;"></div><div class="a" style="left:690.59px;top:461.75px;width:79.22px;height:49.56px;background:#666666;"></div><div class="a" style="left:709.28px;top:472.11px;width:42.05px;height:35.95px;background:#e8e8e8;"></div><div class="a" style="left:769.81px;top:461.75px;width:79.22px;height:49.56px;background:#f0f0f0;"></div><div class="a" style="left:769.81px;top:506.23px;width:79.22px;height:5.08px;background:#111111;"></div><div class="a" style="left:690.59px;top:514.56px;width:79.22px;height:49.56px;background:#666666;"></div><div class="a" style="left:709.28px;top:524.92px;width:42.05px;height:35.95px;background:#e8e8e8;"></div><div class="a" style="left:769.81px;top:514.56px;width:79.22px;height:49.56px;background:#f0f0f0;"></div><div class="a" style="left:769.81px;top:559.05px;width:79.22px;height:5.08px;background:#111111;"></div><div class="a" style="left:574.00px;top:576.11px;width:390.00px;height:15.64px;background:#454443;"></div><div class="a" style="left:586.19px;top:581.59px;width:73.12px;height:10.16px;background:#e0e0e0;"></div><div class="a" style="left:964.00px;top:348.00px;width:390.00px;height:17.67px;background:#161616;"></div><div class="a" style="left:964.00px;top:365.67px;width:390.00px;height:193.58px;background:#ffffff;"></div><div class="a" style="left:968.88px;top:387.41px;width:301.64px;height:171.84px;background:#d9d9d9;"></div><div class="a" style="left:1041.59px;top:387.41px;width:156.20px;height:159.66px;background:#f7f7f7;"></div><div class="a" style="left:1275.80px;top:387.61px;width:72.31px;height:158.44px;background:#444a52;"></div><div class="a" style="left:1277.62px;top:394.11px;width:69.06px;height:149.30px;background:#f4f4f4;"></div><div class="a" style="left:964.00px;top:559.25px;width:390.00px;height:32.50px;background:#0a0a0a;"></div><div class="a" style="left:574.00px;top:596.00px;width:390.00px;height:243.75px;background:#535353;"></div><div class="a" style="left:576.03px;top:615.91px;width:385.94px;height:25.19px;background:#c5c5c5;"></div><div class="a" style="left:743.00px;top:620.17px;width:135.08px;height:12.19px;background:#f4f4f4;"></div><div class="a" style="left:666.22px;top:647.19px;width:207.19px;height:176.92px;background:#ffffff;"></div><div class="a" style="left:690.59px;top:656.94px;width:79.22px;height:49.56px;background:#666666;"></div><div class="a" style="left:709.28px;top:667.30px;width:42.05px;height:35.95px;background:#e8e8e8;"></div><div class="a" style="left:769.81px;top:656.94px;width:79.22px;height:49.56px;background:#f0f0f0;"></div><div class="a" style="left:769.81px;top:701.42px;width:79.22px;height:5.08px;background:#111111;"></div><div class="a" style="left:690.59px;top:709.75px;width:79.22px;height:49.56px;background:#666666;"></div><div class="a" style="left:709.28px;top:720.11px;width:42.05px;height:35.95px;background:#e8e8e8;"></div><div class="a" style="left:769.81px;top:709.75px;width:79.22px;height:49.56px;background:#f0f0f0;"></div><div class="a" style="left:769.81px;top:754.23px;width:79.22px;height:5.08px;background:#111111;"></div><div class="a" style="left:690.59px;top:762.56px;width:79.22px;height:49.56px;background:#666666;"></div><div class="a" style="left:709.28px;top:772.92px;width:42.05px;height:35.95px;background:#e8e8e8;"></div><div class="a" style="left:769.81px;top:762.56px;width:79.22px;height:49.56px;background:#f0f0f0;"></div><div class="a" style="left:769.81px;top:807.05px;width:79.22px;height:5.08px;background:#111111;"></div><div class="a" style="left:574.00px;top:824.11px;width:390.00px;height:15.64px;background:#454443;"></div><div class="a" style="left:586.19px;top:829.59px;width:73.12px;height:10.16px;background:#e0e0e0;"></div><div class="a" style="left:964.00px;top:596.00px;width:390.00px;height:17.67px;background:#161616;"></div><div class="a" style="left:964.00px;top:613.67px;width:390.00px;height:193.58px;background:#ffffff;"></div><div class="a" style="left:968.88px;top:635.41px;width:301.64px;height:171.84px;background:#d9d9d9;"></div><div class="a" style="left:1041.59px;top:635.41px;width:156.20px;height:159.66px;background:#f7f7f7;"></div><div class="a" style="left:1275.80px;top:635.61px;width:72.31px;height:158.44px;background:#444a52;"></div><div class="a" style="left:1277.62px;top:642.11px;width:69.06px;height:149.30px;background:#f4f4f4;"></div><div class="a" style="left:964.00px;top:807.25px;width:390.00px;height:32.50px;background:#0a0a0a;"></div></div><div class="a" style="left:0.00px;top:1123.00px;width:1920.00px;height:27.00px;background:#4b4b4b;"></div><div class="a" style="left:0.00px;top:1150.00px;width:1920.00px;height:50.00px;background:#3c3b39;"></div><div class="a" style="left:60.00px;top:1150.00px;width:360.00px;height:50.00px;background:#f2f2f2;"></div><div class="a" style="left:325.00px;top:1155.00px;width:90.00px;height:39.00px;background:#e2e2e2;"></div><div class="a" style="left:351.00px;top:1162.00px;width:38.00px;height:27.00px;background:#e09010;"></div><div class="a" style="left:1920.00px;top:0.00px;width:1920.00px;height:40.00px;background:#000;"></div><div class="a" style="left:1920.00px;top:40.00px;width:1920.00px;height:47.00px;background:#282828;"></div><div class="a" style="left:2040.00px;top:46.00px;width:1626.00px;height:33.00px;background:#3c3c3c;border-radius:17px"></div><div class="a" style="left:1920.00px;top:87.00px;width:1920.00px;height:953.00px;background:#ffffff;"></div><div class="a" style="left:1944.00px;top:111.00px;width:132.00px;height:35.00px;background:#0b6fd3;"></div><div class="a" style="left:2092.00px;top:111.00px;width:143.00px;height:35.00px;background:#fff;border:2px solid #0b6fd3"></div><div class="a" style="left:3654.00px;top:111.00px;width:162.00px;height:35.00px;background:#0b6fd3;"></div><div class="a" style="left:1944.00px;top:194.00px;width:1485.00px;height:846.00px;background:#d9d9d9;"></div><div class="a" style="left:2302.00px;top:194.00px;width:769.00px;height:786.00px;background:#ffffff;"></div><div class="a" style="left:2316.00px;top:230.00px;width:740.00px;height:45.00px;background:#efefef;"></div><div class="a" style="left:2316.00px;top:290.00px;width:740.00px;height:45.00px;background:#efefef;"></div><div class="a" style="left:2316.00px;top:350.00px;width:740.00px;height:45.00px;background:#efefef;"></div><div class="a" style="left:2316.00px;top:410.00px;width:740.00px;height:45.00px;background:#efefef;"></div><div class="a" style="left:2316.00px;top:470.00px;width:740.00px;height:45.00px;background:#efefef;"></div><div class="a" style="left:2316.00px;top:590.00px;width:740.00px;height:45.00px;background:#efefef;"></div><div class="a" style="left:2316.00px;top:700.00px;width:740.00px;height:45.00px;background:#efefef;"></div><div class="a" style="left:2316.00px;top:760.00px;width:740.00px;height:45.00px;background:#efefef;"></div><div class="a" style="left:3455.00px;top:195.00px;width:356.00px;height:780.00px;background:#222831;border-radius:37px"></div><div class="a" style="left:3464.00px;top:227.00px;width:340.00px;height:735.00px;background:#f4f4f4;border-radius:20px"></div><div class="a" style="left:3464.00px;top:870.00px;width:340.00px;height:92.00px;background:#d9d9d9;"></div><div class="a" style="left:1920.00px;top:1040.00px;width:1920.00px;height:40.00px;background:#3d3c3a;"></div><div class="a" style="left:1920.00px;top:1080.00px;width:1920.00px;height:120.00px;background:#000000;"></div></div><div class="a" style="left:1358.00px;top:1087.00px;width:76.00px;height:29.00px;background:#d4d4d4;border:1px solid #a9a9a9"></div><div class="a" style="left:1365.00px;top:1093.00px;width:14.00px;height:17.00px;background:#e8e8e8;border:1.5px solid #d9a520"></div><div id="t125" class="a tx" style="top:1094.23px;font-size:15.5px;line-height:15.5px;color:#1f2a44;left:1385.50px;transform:scaleX(0.9004);">(Ctrl)</div><div class="a" style="left:1422.50px;top:1099.50px;width:7.00px;height:4.00px;background:#222;"></div></div></div><div class="a" style="left:0.00px;top:1123.00px;width:1920.00px;height:27.00px;background:#505050;"></div><div class="a" style="left:0.00px;top:1122.50px;width:1920.00px;height:1.00px;background:#3c3c3c;"></div><div id="t204" class="a tx" style="top:1130.95px;font-size:13.2px;line-height:13.2px;color:#e8e8e8;left:15.20px;transform:scaleX(0.9903);">Page 1 of 1</div><div id="t205" class="a tx" style="top:1130.95px;font-size:13.2px;line-height:13.2px;color:#e8e8e8;left:106.20px;transform:scaleX(1.0166);">11 words</div><svg class="a" style="left:182.00px;top:1127.00px;overflow:visible;" width="21.00" height="20.00" viewBox="182.00 1127.00 21.00 20.00"><path d="M184.5 1129 H190.5 C192.5 1129 192.5 1131 192.5 1131 C192.5 1131 192.5 1129 194.5 1129 H200.5 V1142 H194 L192.5 1144.5 L191 1142 H184.5 Z" fill="none" stroke="#e0e0e0" stroke-width="1.1"/><path d="M192.5 1131 V1141 M194.5 1141 L197 1144 L201.5 1138" fill="none" stroke="#e0e0e0" stroke-width="1.1"/></svg><div id="t206" class="a tx" style="top:1130.95px;font-size:13.2px;line-height:13.2px;color:#e8e8e8;left:227.00px;transform:scaleX(0.9745);">Text Predictions: On</div><svg class="a" style="left:364.00px;top:1127.00px;overflow:visible;" width="23.00" height="21.00" viewBox="364.00 1127.00 23.00 21.00"><circle cx="374" cy="1130" r="2" fill="none" stroke="#e0e0e0" stroke-width="1.1"/><path d="M367 1133.5 H381 M374 1133.5 V1139 L370.5 1145 M374 1139 L377.5 1145" fill="none" stroke="#e0e0e0" stroke-width="1.1"/><path d="M377 1139 L385 1147 M385 1139 L377 1147" stroke="#e0e0e0" stroke-width="1.1"/></svg><div id="t207" class="a tx" style="top:1130.95px;font-size:13.2px;line-height:13.2px;color:#e8e8e8;font-weight:700;left:389.00px;transform:scaleX(0.9646);">Accessibility: Investigate</div><svg class="a" style="left:1343.00px;top:1126.00px;overflow:visible;" width="22.00" height="22.00" viewBox="1343.00 1126.00 22.00 22.00"><rect x="1345.5" y="1129.5" width="16.5" height="11" fill="none" stroke="#e0e0e0" stroke-width="1.1"/><circle cx="1357" cy="1142" r="3.5" fill="#4b4b4b" stroke="#e0e0e0" stroke-width="1.4" stroke-dasharray="1.5 1"/></svg><div id="t208" class="a tx" style="top:1130.95px;font-size:13.2px;line-height:13.2px;color:#e8e8e8;left:1366.00px;transform:scaleX(0.9667);">Display Settings</div><svg class="a" style="left:1477.00px;top:1126.00px;overflow:visible;" width="22.00" height="22.00" viewBox="1477.00 1126.00 22.00 22.00"><path d="M1480 1132 V1129 H1483 M1493 1129 H1496 V1132 M1496 1142 V1145 H1493 M1483 1145 H1480 V1142" fill="none" stroke="#e0e0e0" stroke-width="1.1"/><path d="M1484 1131 H1489.5 L1492.5 1134 V1143 H1484 Z" fill="none" stroke="#e0e0e0" stroke-width="1.1"/></svg><div id="t209" class="a tx" style="top:1130.95px;font-size:13.2px;line-height:13.2px;color:#e8e8e8;left:1500.50px;transform:scaleX(0.8883);">Focus</div><svg class="a" style="left:1562.00px;top:1127.00px;overflow:visible;" width="21.00" height="20.00" viewBox="1562.00 1127.00 21.00 20.00"><path d="M1564.5 1129.5 H1572.5 V1144 H1564.5 Z M1572.5 1129.5 H1580.5 V1144 H1572.5 Z" fill="none" stroke="#e0e0e0" stroke-width="1.1"/><path d="M1566.5 1133 H1570.5 M1566.5 1136 H1570.5 M1566.5 1139 H1570.5 M1574.5 1133 H1578.5 M1574.5 1136 H1578.5 M1574.5 1139 H1578.5" stroke="#e0e0e0" stroke-width="0.9"/></svg><div class="a" style="left:1598.00px;top:1124.00px;width:50.00px;height:26.00px;background:#5d5d5d;"></div><svg class="a" style="left:1613.00px;top:1127.00px;overflow:visible;" width="19.00" height="20.00" viewBox="1613.00 1127.00 19.00 20.00"><rect x="1615.5" y="1128.5" width="14" height="17" fill="none" stroke="#e0e0e0" stroke-width="1.1"/><path d="M1618 1132 H1627 M1618 1135 H1627 M1618 1138 H1627 M1618 1141 H1627" stroke="#e0e0e0" stroke-width="0.9"/></svg><svg class="a" style="left:1662.00px;top:1127.00px;overflow:visible;" width="22.00" height="21.00" viewBox="1662.00 1127.00 22.00 21.00"><rect x="1664.5" y="1128.5" width="15.5" height="16.5" fill="none" stroke="#e0e0e0" stroke-width="1.1"/><path d="M1664.5 1132 H1680 M1667 1135 H1673 M1667 1138 H1673" stroke="#e0e0e0" stroke-width="0.9"/><circle cx="1677.5" cy="1141.5" r="4.3" fill="#4b4b4b" stroke="#e0e0e0" stroke-width="1"/></svg><div class="a" style="left:1705.00px;top:1136.00px;width:10.00px;height:1.20px;background:#e0e0e0;"></div><div class="a" style="left:1721.00px;top:1136.20px;width:125.00px;height:0.80px;background:#d0d0d0;"></div><div class="a" style="left:1781.00px;top:1130.00px;width:6.00px;height:14.00px;background:#c8c8c8;"></div><div class="a" style="left:1852.00px;top:1136.00px;width:9.60px;height:1.20px;background:#e0e0e0;"></div><div class="a" style="left:1856.20px;top:1131.60px;width:1.20px;height:10.00px;background:#e0e0e0;"></div><div id="t210" class="a tx" style="top:1130.95px;font-size:13.2px;line-height:13.2px;color:#e8e8e8;left:1878.60px;transform:scaleX(0.9102);">100%</div><div class="a" style="left:0.00px;top:1150.00px;width:1920.00px;height:50.00px;background:#3e3c3a;"></div><svg class="a" style="left:0.00px;top:1150.00px;overflow:visible;" width="1920.00" height="50.00" viewBox="0.00 1150.00 1920.00 50.00"><path d="M19.5 1167.37 L28.2125 1165.115 V1174.135 H19.5 Z M29.4425 1164.5 L40 1163.885 V1174.135 H29.4425 Z M19.5 1175.365 H28.2125 V1184.385 L19.5 1182.13 Z M29.4425 1175.365 H40 V1185 L29.4425 1184.385 Z" fill="#fff"/><rect x="60" y="1150" width="360" height="50" fill="#f2f2f2"/><rect x="60" y="1150" width="360" height="1" fill="#bdbdbd"/><circle cx="88" cy="1171.8" r="6.8" fill="none" stroke="#1a1a1a" stroke-width="1.3"/><path d="M83.2 1176.8 L75.2 1184.6" stroke="#1a1a1a" stroke-width="1.4"/><rect x="325" y="1155" width="90" height="39" rx="4" fill="#e2e2e2"/><rect x="351" y="1166" width="38" height="23" rx="3" fill="#d98a0b"/><rect x="351" y="1166" width="38" height="9" rx="3" fill="#f0a818"/><path d="M362 1166 V1161 H378 V1166" fill="none" stroke="#3a3a3a" stroke-width="2"/><rect x="367.5" y="1173" width="5" height="4" fill="#f7e07a"/><path d="M441 1164.5 H454 M441 1183.5 H454" stroke="#fff" stroke-width="1.3"/><rect x="442" y="1168" width="11" height="12" fill="none" stroke="#fff" stroke-width="1.3"/><path d="M459.5 1164 V1166 M459.5 1169 V1184" stroke="#fff" stroke-width="1.3"/><g transform="translate(499.3,1160.5) scale(1.0107142857142857)"><path d="M0 3 H9 L11 5 H28 V24 H0 Z" fill="#e8a712"/><rect x="0" y="7" width="28" height="17" fill="#fbd365"/><path d="M7 24 V15 H21 V24 H17.5 V19 H10.5 V24 Z" fill="#3a8ee6"/></g><circle cx="575.6" cy="1174.6" r="14" fill="#1ed760"/><path d="M567.2 1170.3999999999999 C574.2 1167.6 580.5 1169.0 584.28 1172.08" fill="none" stroke="#191414" stroke-width="2.3800000000000003" stroke-linecap="round"/><path d="M568.6 1175.3 C574.2 1173.1999999999998 579.8000000000001 1174.32 582.88 1176.6999999999998" fill="none" stroke="#191414" stroke-width="1.9600000000000002" stroke-linecap="round"/><path d="M569.72 1179.78 C574.2 1178.3799999999999 578.6800000000001 1178.8 581.48 1180.62" fill="none" stroke="#191414" stroke-width="1.68" stroke-linecap="round"/><g transform="translate(622.6,1161) scale(1.0133333333333332)"><path d="M10 4 L20 0 L30 5 V20 H10 Z" fill="#0f78d4"/><path d="M20 0 L30 5 V12 L20 6 Z" fill="#50b0f0"/><path d="M14 12 L30 12 V24 H14 Z" fill="#1160b8"/><rect x="0" y="6" width="16" height="16" rx="1.5" fill="#0a64c8"/><circle cx="8" cy="14" r="4.3" fill="none" stroke="#fff" stroke-width="2.2"/><rect x="12" y="19" width="18" height="7" rx="1" fill="#19c3d8"/><text x="21" y="25.3" font-size="6.5" font-weight="700" text-anchor="middle" fill="#0b2d5a" font-family="Liberation Sans">NEW</text></g><g transform="translate(687,1161) scale(1.0)"><circle cx="17" cy="4" r="3.5" fill="#7b83eb"/><circle cx="25" cy="7" r="2.8" fill="#5059c9"/><rect x="12" y="10" width="17" height="12" rx="3" fill="#5059c9"/><rect x="0" y="6" width="17" height="17" rx="1.5" fill="#4b53bc"/><path d="M4 10 H13 M8.5 10 V19" stroke="#fff" stroke-width="2.4"/><rect x="10" y="19" width="18" height="7" rx="1" fill="#19c3d8"/><circle cx="20" cy="20" r="7.5" fill="#d13438"/></g><circle cx="762" cy="1174.5" r="14.2" fill="#f4f4f4"/><g transform="translate(762,1174.5) scale(1.0142857142857142)" stroke-linecap="round" stroke-width="3.6"><path d="M-3 -8 V-1" stroke="#36c5f0"/><path d="M-8 -3 H-6" stroke="#36c5f0"/><path d="M8 -3 H1" stroke="#2eb67d"/><path d="M3 -8 V-6" stroke="#2eb67d"/><path d="M3 8 V1" stroke="#ecb22e"/><path d="M8 3 H6" stroke="#ecb22e"/><path d="M-8 3 H-1" stroke="#e01e5a"/><path d="M-3 8 V6" stroke="#e01e5a"/></g><rect x="794" y="1150" width="61" height="50" fill="#5e5d5c"/><circle cx="824.5" cy="1174.5" r="15.5" fill="#34a853"/><path d="M824.5 1174.5 L811.077 1166.75 A15.5 15.5 0 0 1 837.923 1166.75 Z" fill="#ea4335"/><path d="M824.5 1174.5 L837.923 1166.75 A15.5 15.5 0 0 1 824.5 1190.0 Z" fill="#fbbc04"/><circle cx="824.5" cy="1174.5" r="6.9750000000000005" fill="#fff"/><circle cx="824.5" cy="1174.5" r="5.58" fill="#4285f4"/><circle cx="831.475" cy="1181.475" r="8.99" fill="#e8ddd0"/><path d="M825.275 1186.125 C825.275 1174.5 837.675 1174.5 837.675 1186.125" fill="#4a3426"/><circle cx="831.475" cy="1180.39" r="3.41" fill="#d9b08c"/><path d="M825.275 1190.0 C827.6 1185.35 835.35 1185.35 837.675 1190.0" fill="#f1ece6"/><g transform="translate(871,1162) scale(0.98)"><rect x="7" y="0" width="23" height="26" rx="2" fill="#2b7cd3"/><rect x="7" y="0" width="23" height="8.7" rx="2" fill="#41a5ee"/><rect x="7" y="17.3" width="23" height="8.7" rx="2" fill="#103f91"/><rect x="0" y="6" width="15" height="15" rx="1.5" fill="#185abd"/><text x="7.5" y="18" font-size="11" font-weight="700" text-anchor="middle" fill="#fff" font-family="Liberation Sans">W</text></g><g transform="translate(933,1162) scale(0.98)"><rect x="7" y="0" width="23" height="26" rx="2" fill="#21a366"/><rect x="7" y="0" width="23" height="8.7" rx="2" fill="#33c481"/><rect x="7" y="17.3" width="23" height="8.7" rx="2" fill="#185c37"/><rect x="0" y="6" width="15" height="15" rx="1.5" fill="#107c41"/><text x="7.5" y="18" font-size="11" font-weight="700" text-anchor="middle" fill="#fff" font-family="Liberation Sans">X</text></g><rect x="489" y="1197" width="51" height="3" fill="#66d9cc"/><rect x="613" y="1197" width="40" height="3" fill="#66d9cc"/><rect x="674.8" y="1197" width="51.200000000000045" height="3" fill="#66d9cc"/><rect x="794" y="1197" width="61" height="3" fill="#66d9cc"/><rect x="861" y="1197" width="39" height="3" fill="#66d9cc"/><rect x="654" y="1197" width="10" height="3" fill="#4aa39a"/><rect x="901.5" y="1197" width="10.200000000000045" height="3" fill="#4aa39a"/><rect x="1458" y="1162" width="8" height="20" rx="4" fill="#a8d3f7"/><circle cx="1462" cy="1184" r="5" fill="#5fb2f2"/><rect x="1460.6" y="1167" width="2.8" height="14" fill="#e04050"/><path d="M1473.5 1188 V1174 M1470 1177.5 L1473.5 1172 L1477 1177.5" fill="none" stroke="#ff1a1a" stroke-width="2.2"/><path d="M1627.5 1179 L1635 1171.5 L1642.5 1179" fill="none" stroke="#fff" stroke-width="1.4"/><path d="M1658 1183 C1653 1183 1654 1175 1659.5 1176 C1660 1169 1670 1169 1671 1175 C1676 1175 1676 1183 1671 1183 Z" fill="#1e88e5"/><circle cx="1670" cy="1181" r="5.5" fill="#1565c0"/><rect x="1669.3" y="1179.5" width="1.6" height="4.5" fill="#fff"/><rect x="1669.3" y="1177" width="1.6" height="1.6" fill="#fff"/><path d="M1685.5 1171 H1690 L1695 1166.5 V1183.5 L1690 1179 H1685.5 Z" fill="none" stroke="#fff" stroke-width="1.2"/><path d="M1698 1172 C1700 1174 1700 1176 1698 1178 M1701 1169.5 C1704.5 1173 1704.5 1177 1701 1180.5" fill="none" stroke="#fff" stroke-width="1.1"/><path d="M1703.5 1167 C1709 1172 1709 1178 1703.5 1183" fill="none" stroke="#888" stroke-width="1.1"/><rect x="1720" y="1169.5" width="14" height="9" fill="none" stroke="#fff" stroke-width="1.2"/><rect x="1722" y="1171.5" width="7" height="5" fill="#fff"/><rect x="1734" y="1172" width="1.8" height="4" fill="#fff"/><path d="M1716 1168 V1173 M1714 1170 H1719" stroke="#fff" stroke-width="1.2"/><path d="M1748 1184 A16 16 0 0 1 1764 1168 M1752 1184 A12 12 0 0 1 1764 1172 M1756 1184 A8 8 0 0 1 1764 1176" fill="none" stroke="#fff" stroke-width="1.2"/><circle cx="1762" cy="1183" r="1.5" fill="#fff"/><path d="M1869 1165 H1888.5 V1180.5 H1869 Z" fill="#fff"/><path d="M1872 1169 H1885 M1872 1172.5 H1885 M1872 1176 H1885" stroke="#3c3b39" stroke-width="1.1"/><circle cx="1887" cy="1184" r="10.5" fill="#3c3b39" stroke="#8c8c8c" stroke-width="1"/><rect x="1914" y="1150" width="1" height="50" fill="#6d6c6a"/></svg><div id="t211" class="a tx" style="top:1166.12px;font-size:19px;line-height:19px;color:#1f1f1f;left:110.00px;transform:scaleX(0.9766);">Type here to search</div><div id="t212" class="a tx" style="top:1166.86px;font-size:18.5px;line-height:18.5px;color:#ffffff;left:1492.00px;transform:scaleX(0.9281);">57&deg;F&nbsp; Mostly cloudy</div><div id="t213" class="a tx" style="top:1155.93px;font-size:15.5px;line-height:15.5px;color:#ffffff;left:1785.90px;transform:scaleX(0.8956);">4:13 PM</div><div id="t214" class="a tx" style="top:1178.73px;font-size:15.5px;line-height:15.5px;color:#ffffff;left:1777.70px;transform:scaleX(0.9905);">4/16/2024</div><div id="t215" class="a tx" style="top:1177.66px;font-size:14px;line-height:14px;color:#ffffff;font-weight:700;left:1879.75px;transform:scaleX(0.9311);">22</div></div><div class="a" style="left:1920px;top:0;width:1920px;height:1200px;overflow:hidden"><div class="a" style="left:0.00px;top:0.00px;width:1920.00px;height:1200.00px;background:#000;"></div><div class="a" style="left:0.00px;top:0.00px;width:1920.00px;height:40.00px;background:#000000;"></div><svg class="a" style="left:0.00px;top:0.00px;overflow:visible;" width="1920.00" height="87.00" viewBox="0.00 0.00 1920.00 87.00"><rect x="6" y="6.3" width="27.5" height="27.2" rx="8" fill="#2a2a2a"/><path d="M16 18 L20 22 L24 18" fill="none" stroke="#e8e8e8" stroke-width="1.8"/><path d="M267.7 40 A10 10 0 0 0 277.7 30 V16.3 A10 10 0 0 1 287.7 6.3 H500.6 A10 10 0 0 1 510.6 16.3 V30 A10 10 0 0 0 520.6 40 Z" fill="#2a2a2a"/><defs><linearGradient id="xm48" x1="0" y1="0" x2="1" y2="1"><stop offset="0" stop-color="#21dbaa"/><stop offset="0.5" stop-color="#00b4ef"/><stop offset="1" stop-color="#5f3ae8"/></linearGradient></defs><defs><linearGradient id="xm286" x1="0" y1="0" x2="1" y2="1"><stop offset="0" stop-color="#21dbaa"/><stop offset="0.5" stop-color="#00b4ef"/><stop offset="1" stop-color="#5f3ae8"/></linearGradient></defs><path d="M251.5 15.8 L259.8 24.1 M259.8 15.8 L251.5 24.1" stroke="#e0e0e0" stroke-width="1.6"/><path d="M489.8 15.8 L498.1 24.1 M498.1 15.8 L489.8 24.1" stroke="#e0e0e0" stroke-width="1.6"/><path d="M529.3 14 V26 M523.3 20 H535.3" stroke="#e8e8e8" stroke-width="1.8"/><rect x="1798.6" y="19.5" width="12" height="1.1" fill="#e8e8e8"/><rect x="1846.5" y="16.5" width="8" height="8" fill="none" stroke="#e8e8e8" stroke-width="1.1"/><path d="M1848.5 16.5 V14.5 H1856.5 V22.5 H1854.5" fill="none" stroke="#e8e8e8" stroke-width="1.1"/><path d="M1891.3 14.2 L1902.8 25.7 M1902.8 14.2 L1891.3 25.7" stroke="#e8e8e8" stroke-width="1.2"/><path d="M0 87 V50 A10 10 0 0 1 10 40 H1910 A10 10 0 0 1 1920 50 V87 Z" fill="#2a2a2a"/><rect x="120" y="45.8" width="1625.7" height="33.6" rx="16.8" fill="#3c3c3c"/><path d="M29 63 H15.5 M21.5 57 L15.5 63 L21.5 69" fill="none" stroke="#8f8f8f" stroke-width="1.6"/><path d="M50.5 63 H64 M58 57 L64 63 L58 69" fill="none" stroke="#8f8f8f" stroke-width="1.6"/><path d="M99.5 59.5 A6.8 6.8 0 1 0 100.5 65" fill="none" stroke="#e3e3e3" stroke-width="1.7"/><path d="M96 56.5 H100.8 V61.3 Z" fill="#e3e3e3"/><circle cx="136.8" cy="62.6" r="11.7" fill="#2a2a2a"/><path d="M136.5 59.8 H143.3 M130.5 65.5 H137" stroke="#e3e3e3" stroke-width="1.6"/><circle cx="132.8" cy="59.8" r="1.8" fill="none" stroke="#e3e3e3" stroke-width="1.3"/><circle cx="140.8" cy="65.5" r="1.8" fill="none" stroke="#e3e3e3" stroke-width="1.3"/><path d="M1722.2 55.8 L1724.3 60.6 L1729.5 61 L1725.5 64.4 L1726.8 69.5 L1722.2 66.8 L1717.6 69.5 L1718.9 64.4 L1714.9 61 L1720.1 60.6 Z" fill="none" stroke="#e3e3e3" stroke-width="1.3"/><path d="M1764 70.8 V64 A8 8 0 1 1 1771.5 70.8 Z" fill="#13856d" stroke="#e8e8e8" stroke-width="0.8"/><path d="M1775.2 59.8 A4.8 4.8 0 1 0 1775.8 64.3 H1771.8" fill="none" stroke="#fff" stroke-width="1.8"/><path d="M1802 58 H1806 A2.3 2.3 0 0 1 1810.5 58 H1815 V62.5 A2.3 2.3 0 0 1 1815 67 V71 H1802 Z" fill="none" stroke="#e3e3e3" stroke-width="1.5"/><rect x="1833.5" y="55" width="2" height="16" fill="#000"/><defs><clipPath id="avc"><circle cx="1862" cy="63" r="10"/></clipPath></defs><g clip-path="url(#avc)"><rect x="1850" y="51" width="24" height="24" fill="#ecebe8"/><path d="M1855 75 C1853 62 1855 54 1862 54 C1868 54 1871 60 1872 75 Z" fill="#7a5236"/><ellipse cx="1862.5" cy="61.5" rx="3.8" ry="5" fill="#e2b894"/><path d="M1853 76 C1855 69 1869 69 1872 76" fill="#d9d2c4"/><path d="M1859 60.3 H1861.8 M1863.2 60.3 H1866" stroke="#222" stroke-width="1"/></g><circle cx="1898" cy="57" r="1.7" fill="#e3e3e3"/><circle cx="1898" cy="63" r="1.7" fill="#e3e3e3"/><circle cx="1898" cy="69" r="1.7" fill="#e3e3e3"/></svg><div id="t236" class="a tx" style="top:13.81px;font-size:13.5px;line-height:13.5px;color:transparent;font-weight:700;left:48.00px;transform:scaleX(0.7901);background:linear-gradient(90deg,#21dbaa,#00a3f0 55%,#5f3ae8);-webkit-background-clip:text;background-clip:text">XM</div><div id="t237" class="a tx" style="top:13.81px;font-size:13.5px;line-height:13.5px;color:transparent;font-weight:700;left:286.00px;transform:scaleX(0.8198);background:linear-gradient(90deg,#21dbaa,#00a3f0 55%,#5f3ae8);-webkit-background-clip:text;background-clip:text">XM</div><div class="a" style="left:72px;top:8px;width:168px;height:26px;overflow:hidden;-webkit-mask-image:linear-gradient(90deg,#000 86%,rgba(0,0,0,0.25));mask-image:linear-gradient(90deg,#000 86%,rgba(0,0,0,0.25))"><div id="t238" class="a tx" style="top:6.10px;font-size:13px;line-height:13px;color:#e3e3e3;left:0.00px;transform:scaleX(0.8936);">Distribute Survey | Qualtrics Exp</div></div><div class="a" style="left:310px;top:8px;width:168px;height:26px;overflow:hidden;-webkit-mask-image:linear-gradient(90deg,#000 86%,rgba(0,0,0,0.25));mask-image:linear-gradient(90deg,#000 86%,rgba(0,0,0,0.25))"><div id="t239" class="a tx" style="top:6.10px;font-size:13px;line-height:13px;color:#ffffff;left:0.00px;transform:scaleX(0.8868);">Preview - Qualtrics Survey | Qua</div></div><div id="t240" class="a tx" style="top:55.77px;font-size:15.2px;line-height:15.2px;color:#e3e3e3;left:157.00px;transform:scaleX(0.8962);">pacificresearch.qualtrics.com</div><div id="t241" class="a tx" style="top:55.77px;font-size:15.2px;line-height:15.2px;color:#a9a9a9;left:333.00px;transform:scaleX(0.9056);">/jfe/preview/previewId/8e7915d0-3184-491f-be92-bc2a2c54b6b1/SV_57SePKbS35aO6Wi?Q_CHL=preview&amp;Q_SurveyVersionID=current</div><div class="a" style="left:0.00px;top:87.00px;width:1920.00px;height:953.00px;background:#ffffff;"></div><div class="a" style="left:24.00px;top:111.00px;width:131.80px;height:35.50px;background:#0b6fd3;border-radius:3px"></div><div id="t216" class="a tx" style="top:122.26px;font-size:13.8px;line-height:13.8px;color:#ffffff;font-weight:700;left:45.10px;transform:scaleX(0.9261);">Restart Survey</div><div class="a" style="left:171.80px;top:111.00px;width:143.20px;height:35.50px;background:#fff;border:1.5px solid #0b6fd3;border-radius:3px"></div><div id="t217" class="a tx" style="top:122.26px;font-size:13.8px;line-height:13.8px;color:#0b6fd3;left:193.40px;">Place Bookmark</div><div class="a" style="left:339.00px;top:111.00px;width:1.00px;height:35.50px;background:#d5d5d5;"></div><div id="t218" class="a tx" style="top:122.26px;font-size:13.8px;line-height:13.8px;color:#3a3a3a;left:378.30px;transform:scaleX(0.9842);">Tools</div><svg class="a" style="left:465.20px;top:122.50px;overflow:visible;" width="16.00" height="12.00" viewBox="465.20 122.50 16.00 12.00"><path d="M469.2 126.5 L473.2 130.5 L477.2 126.5" fill="none" stroke="#3a3a3a" stroke-width="1.3"/></svg><div class="a" style="left:508.00px;top:111.00px;width:57.80px;height:35.50px;background:#e6e6e6;"></div><svg class="a" style="left:528.00px;top:117.00px;overflow:visible;" width="18.00" height="25.00" viewBox="528.00 117.00 18.00 25.00"><rect x="530.5" y="120" width="12.5" height="20" rx="2.2" fill="none" stroke="#222" stroke-width="1.8"/><rect x="534.5" y="135.5" width="4.5" height="1.8" fill="#222"/></svg><div class="a" style="left:1734.00px;top:111.00px;width:162.00px;height:35.50px;background:#0b6fd3;border-radius:3px"></div><svg class="a" style="left:1754.00px;top:118.00px;overflow:visible;" width="24.00" height="22.00" viewBox="1754.00 118.00 24.00 22.00"><circle cx="1773" cy="122.5" r="3.2" fill="none" stroke="#fff" stroke-width="1.8"/><circle cx="1759.5" cy="129" r="3.2" fill="none" stroke="#fff" stroke-width="1.8"/><circle cx="1773" cy="135.5" r="3.2" fill="none" stroke="#fff" stroke-width="1.8"/><path d="M1762.5 127.5 L1770 124 M1762.5 130.5 L1770 134" stroke="#fff" stroke-width="1.8"/></svg><div id="t219" class="a tx" style="top:122.26px;font-size:13.8px;line-height:13.8px;color:#ffffff;font-weight:700;left:1786.70px;transform:scaleX(0.9360);">Share Preview</div><div class="a" style="left:0.00px;top:170.50px;width:1920.00px;height:2.00px;background:#f2f2f2;"></div><div class="a" style="left:24.00px;top:195.00px;width:1485.00px;height:845.00px;background:#d9d9d9;"></div><svg class="a" style="left:735.50px;top:273.00px;overflow:visible;" width="60.00" height="38.00" viewBox="735.50 273.00 60.00 38.00"><g transform="translate(765.5,275) scale(1.0)"><path d="M0 0 L16.5 16.7 L0 33.4 L-16.5 16.7 Z" fill="#0d5fb0"/><path d="M-16.5 16.7 L-5 5 V28.5 Z" fill="#9fd0f2"/><rect x="-5" y="4.5" width="5" height="24.5" fill="#fff"/><path d="M1.5 15 H10 C10 21 6 24 1.5 24 Z" fill="#6cb43f"/><path d="M1.5 8 H10" stroke="#fff" stroke-width="2"/></g></svg><div id="t220" class="a tx" style="top:310.12px;font-size:14.5px;line-height:14.5px;color:#1a1a1a;font-family:'Liberation Serif',serif;left:738.00px;transform:scaleX(1.0135);">PACIFIC</div><div id="t221" class="a tx" style="top:324.83px;font-size:11.0px;line-height:11.0px;color:#1a1a1a;font-family:'Liberation Serif',serif;left:738.00px;transform:scaleX(1.0656);">Research &amp;</div><div id="t222" class="a tx" style="top:335.13px;font-size:11.0px;line-height:11.0px;color:#1a1a1a;font-family:'Liberation Serif',serif;left:739.00px;transform:scaleX(1.1122);">Evaluation</div><div class="a" style="left:382.00px;top:364.00px;width:768.60px;height:303.60px;background:#ffffff;border-radius:4px"></div><div id="t223" class="a tx" style="top:386.28px;font-size:24px;line-height:24px;color:#6a6a6a;left:395.00px;transform:scaleX(1.1003);">What is your ZIP code? (5 digits only please)</div><div id="t224" class="a tx" style="top:474.17px;font-size:15px;line-height:15px;color:#7a7a7a;left:395.00px;transform:scaleX(1.2715);">US Postal Code:</div><div class="a" style="left:582.50px;top:457.40px;width:134.50px;height:51.60px;background:#f4f4f4;border:2px solid #8a8a8a"></div><div class="a" style="left:399.00px;top:610.00px;width:81.00px;height:41.00px;background:#a9d0f2;border-radius:3px"></div><div id="t225" class="a tx" style="top:623.17px;font-size:15px;line-height:15px;color:#1a3a6a;font-weight:700;left:421.57px;">Back</div><div class="a" style="left:1055.00px;top:610.00px;width:78.00px;height:41.00px;background:#a9d0f2;border-radius:3px"></div><div id="t226" class="a tx" style="top:623.17px;font-size:15px;line-height:15px;color:#1a3a6a;font-weight:700;left:1077.74px;">Next</div><div class="a" style="left:1302.00px;top:1000.00px;width:207.00px;height:40.00px;background:#bcbcbe;border-radius:5px 0 0 0"></div><div id="t227" class="a tx" style="top:1014.86px;font-size:13.8px;line-height:13.8px;color:#7b7b80;left:1325.60px;transform:scaleX(1.0982);">Powered by Qualtrics</div><svg class="a" style="left:1450.00px;top:190.00px;overflow:visible;" width="450.00" height="790.00" viewBox="1450.00 190.00 450.00 790.00"><rect x="1533" y="280.6" width="3.5" height="28" rx="1.5" fill="#222831"/><rect x="1533" y="338" width="3.5" height="46" rx="1.5" fill="#222831"/><rect x="1533" y="398" width="3.5" height="46" rx="1.5" fill="#222831"/><rect x="1889.5" y="338" width="4" height="79" rx="1.5" fill="#222831"/><rect x="1535.7" y="195" width="355.5" height="780.4" rx="37" fill="#222831"/><rect x="1683" y="211.5" width="40" height="6" rx="3" fill="#0f1318"/><circle cx="1739" cy="214.3" r="3.6" fill="none" stroke="#0f1318" stroke-width="1.6"/></svg><div class="a" style="left:1544px;top:226.6px;width:340px;height:735.4px;border-radius:20px 20px 28px 28px;overflow:hidden"><div class="a" style="left:0.00px;top:0.00px;width:340.00px;height:735.40px;background:#d9d9d9;"></div><div class="a" style="left:0.00px;top:0.00px;width:340.00px;height:35.40px;background:#ffffff;"></div><div id="t228" class="a tx" style="top:10.82px;font-size:14.5px;line-height:14.5px;color:#000;font-weight:700;left:15.00px;transform:scaleX(0.9276);">12:29</div><div class="a" style="left:306.70px;top:14.80px;width:16.00px;height:7.50px;background:#000;border-radius:2px"></div><svg class="a" style="left:150.10px;top:63.50px;overflow:visible;" width="37.80" height="24.68" viewBox="150.10 63.50 37.80 24.68"><g transform="translate(169,65.5) scale(0.63)"><path d="M0 0 L16.5 16.7 L0 33.4 L-16.5 16.7 Z" fill="#0d5fb0"/><path d="M-16.5 16.7 L-5 5 V28.5 Z" fill="#9fd0f2"/><rect x="-5" y="4.5" width="5" height="24.5" fill="#fff"/><path d="M1.5 15 H10 C10 21 6 24 1.5 24 Z" fill="#6cb43f"/><path d="M1.5 8 H10" stroke="#fff" stroke-width="2"/></g></svg><div id="t229" class="a tx" style="top:87.62px;font-size:9.135px;line-height:9.135px;color:#1a1a1a;font-family:'Liberation Serif',serif;left:151.68px;transform:scaleX(1.0146);">PACIFIC</div><div id="t230" class="a tx" style="top:96.89px;font-size:6.93px;line-height:6.93px;color:#1a1a1a;font-family:'Liberation Serif',serif;left:151.68px;transform:scaleX(1.0668);">Research &amp;</div><div id="t231" class="a tx" style="top:103.38px;font-size:6.93px;line-height:6.93px;color:#1a1a1a;font-family:'Liberation Serif',serif;left:152.31px;transform:scaleX(1.1135);">Evaluation</div><div class="a" style="left:0.00px;top:126.00px;width:340.00px;height:306.00px;background:#ffffff;"></div><div id="t232" class="a tx" style="top:153.10px;font-size:17px;line-height:17px;color:#6a6a6a;left:15.00px;transform:scaleX(1.2659);">What is your ZIP code? (5 digits</div><div id="t233" class="a tx" style="top:181.10px;font-size:17px;line-height:17px;color:#6a6a6a;left:15.00px;transform:scaleX(1.2000);">only please)</div><div id="t234" class="a tx" style="top:250.54px;font-size:12px;line-height:12px;color:#7a7a7a;left:15.00px;transform:scaleX(1.1273);">US Postal Code:</div><div class="a" style="left:169.00px;top:242.00px;width:150.00px;height:44.40px;background:#f4f4f4;border:2px solid #8a8a8a"></div><div class="a" style="left:12.00px;top:383.40px;width:72.00px;height:39.00px;background:#a9d0f2;border-radius:3px"></div><div class="a" style="left:255.00px;top:383.40px;width:70.00px;height:39.00px;background:#a9d0f2;border-radius:3px"></div><div id="t235" class="a tx" style="top:477.05px;font-size:13px;line-height:13px;color:#7a7a7a;left:108.22px;">Powered by Qualtrics</div></div><svg class="a" style="left:0.00px;top:1040.00px;overflow:visible;" width="1920.00" height="40.00" viewBox="0.00 1040.00 1920.00 40.00"><rect x="0" y="1040" width="1920" height="40" fill="#3d3c3a"/><path d="M16 1053.81 L23.0125 1051.995 V1059.255 H16 Z M24.002499999999998 1051.5 L32.5 1051.005 V1059.255 H24.002499999999998 Z M16 1060.245 H23.0125 V1067.505 L16 1065.69 Z M24.002499999999998 1060.245 H32.5 V1068 L24.002499999999998 1067.505 Z" fill="#fff"/><circle cx="74" cy="1057" r="7.8" fill="none" stroke="#fff" stroke-width="1.6"/><path d="M68.5 1062.5 L62 1069" stroke="#fff" stroke-width="1.9"/><path d="M112 1051.5 H122 M112 1068 H122" stroke="#fff" stroke-width="1.1"/><rect x="112.5" y="1054.5" width="9" height="10" fill="none" stroke="#fff" stroke-width="1.1"/><path d="M127.3 1051 V1053 M127.3 1055 V1068" stroke="#fff" stroke-width="1.1"/><g transform="translate(159.5,1049) scale(0.8035714285714286)"><path d="M0 3 H9 L11 5 H28 V24 H0 Z" fill="#e8a712"/><rect x="0" y="7" width="28" height="17" fill="#fbd365"/><path d="M7 24 V15 H21 V24 H17.5 V19 H10.5 V24 Z" fill="#3a8ee6"/></g><circle cx="219.6" cy="1059" r="11" fill="#1ed760"/><path d="M213.0 1055.7 C218.5 1053.5 223.45 1054.6 226.42 1057.02" fill="none" stroke="#191414" stroke-width="1.87" stroke-linecap="round"/><path d="M214.1 1059.55 C218.5 1057.9 222.9 1058.78 225.32 1060.65" fill="none" stroke="#191414" stroke-width="1.54" stroke-linecap="round"/><path d="M214.98 1063.07 C218.5 1061.97 222.01999999999998 1062.3 224.22 1063.73" fill="none" stroke="#191414" stroke-width="1.3199999999999998" stroke-linecap="round"/><g transform="translate(257,1049) scale(0.8)"><path d="M10 4 L20 0 L30 5 V20 H10 Z" fill="#0f78d4"/><path d="M20 0 L30 5 V12 L20 6 Z" fill="#50b0f0"/><path d="M14 12 L30 12 V24 H14 Z" fill="#1160b8"/><rect x="0" y="6" width="16" height="16" rx="1.5" fill="#0a64c8"/><circle cx="8" cy="14" r="4.3" fill="none" stroke="#fff" stroke-width="2.2"/><rect x="12" y="19" width="18" height="7" rx="1" fill="#19c3d8"/><text x="21" y="25.3" font-size="6.5" font-weight="700" text-anchor="middle" fill="#0b2d5a" font-family="Liberation Sans">NEW</text></g><g transform="translate(306,1049) scale(0.8)"><circle cx="17" cy="4" r="3.5" fill="#7b83eb"/><circle cx="25" cy="7" r="2.8" fill="#5059c9"/><rect x="12" y="10" width="17" height="12" rx="3" fill="#5059c9"/><rect x="0" y="6" width="17" height="17" rx="1.5" fill="#4b53bc"/><path d="M4 10 H13 M8.5 10 V19" stroke="#fff" stroke-width="2.4"/><rect x="10" y="19" width="18" height="7" rx="1" fill="#19c3d8"/><circle cx="20" cy="20" r="7.5" fill="#d13438"/></g><circle cx="366.7" cy="1059" r="11.5" fill="#f4f4f4"/><g transform="translate(366.7,1059) scale(0.8214285714285714)" stroke-linecap="round" stroke-width="3.6"><path d="M-3 -8 V-1" stroke="#36c5f0"/><path d="M-8 -3 H-6" stroke="#36c5f0"/><path d="M8 -3 H1" stroke="#2eb67d"/><path d="M3 -8 V-6" stroke="#2eb67d"/><path d="M3 8 V1" stroke="#ecb22e"/><path d="M8 3 H6" stroke="#ecb22e"/><path d="M-8 3 H-1" stroke="#e01e5a"/><path d="M-3 8 V6" stroke="#e01e5a"/></g><rect x="392" y="1040" width="48" height="40" fill="#5e5d5c"/><circle cx="415.7" cy="1059" r="12" fill="#34a853"/><path d="M415.7 1059 L405.308 1053.0 A12 12 0 0 1 426.092 1053.0 Z" fill="#ea4335"/><path d="M415.7 1059 L426.092 1053.0 A12 12 0 0 1 415.7 1071 Z" fill="#fbbc04"/><circle cx="415.7" cy="1059" r="5.4" fill="#fff"/><circle cx="415.7" cy="1059" r="4.32" fill="#4285f4"/><circle cx="421.09999999999997" cy="1064.4" r="6.959999999999999" fill="#e8ddd0"/><path d="M416.3 1068.0 C416.3 1059 425.9 1059 425.9 1068.0" fill="#4a3426"/><circle cx="421.09999999999997" cy="1063.56" r="2.64" fill="#d9b08c"/><path d="M416.3 1071.0 C418.09999999999997 1067.4 424.09999999999997 1067.4 425.9 1071.0" fill="#f1ece6"/><g transform="translate(452.5,1049) scale(0.7666666666666667)"><rect x="7" y="0" width="23" height="26" rx="2" fill="#2b7cd3"/><rect x="7" y="0" width="23" height="8.7" rx="2" fill="#41a5ee"/><rect x="7" y="17.3" width="23" height="8.7" rx="2" fill="#103f91"/><rect x="0" y="6" width="15" height="15" rx="1.5" fill="#185abd"/><text x="7.5" y="18" font-size="11" font-weight="700" text-anchor="middle" fill="#fff" font-family="Liberation Sans">W</text></g><g transform="translate(502,1049) scale(0.7666666666666667)"><rect x="7" y="0" width="23" height="26" rx="2" fill="#21a366"/><rect x="7" y="0" width="23" height="8.7" rx="2" fill="#33c481"/><rect x="7" y="17.3" width="23" height="8.7" rx="2" fill="#185c37"/><rect x="0" y="6" width="15" height="15" rx="1.5" fill="#107c41"/><text x="7.5" y="18" font-size="11" font-weight="700" text-anchor="middle" fill="#fff" font-family="Liberation Sans">X</text></g><rect x="151" y="1078" width="40" height="2" fill="#66d9cc"/><rect x="249" y="1078" width="31" height="2" fill="#66d9cc"/><rect x="298" y="1078" width="40" height="2" fill="#66d9cc"/><rect x="392" y="1078" width="48" height="2" fill="#66d9cc"/><rect x="445" y="1078" width="31" height="2" fill="#66d9cc"/><rect x="281" y="1078" width="8" height="2" fill="#4aa39a"/><rect x="477" y="1078" width="8" height="2" fill="#4aa39a"/></svg><div id="t242" class="a tx" style="top:1044.98px;font-size:11.5px;line-height:11.5px;color:#ffffff;left:1866.00px;transform:scaleX(0.9947);">4:13 PM</div><div id="t243" class="a tx" style="top:1062.38px;font-size:11.5px;line-height:11.5px;color:#ffffff;left:1861.00px;transform:scaleX(1.0301);">4/16/2024</div></div></div><div class="a" style="left:1358.00px;top:786.00px;width:76.00px;height:29.00px;background:#d4d4d4;border:1px solid #a9a9a9"></div><svg class="a" style="left:1361.00px;top:788.00px;overflow:visible;" width="22.00" height="25.00" viewBox="1361.00 788.00 22.00 25.00"><path d="M1365 793 V809.5 H1372" fill="none" stroke="#e0a81c" stroke-width="1.8"/><rect x="1366" y="792" width="13" height="17" fill="none" stroke="#555" stroke-width="1"/><rect x="1369" y="790" width="7" height="3.5" fill="#d4d4d4" stroke="#555" stroke-width="1"/><rect x="1373" y="799" width="8" height="11" fill="#e8e8e8" stroke="#555" stroke-width="1"/></svg><div id="t244" class="a tx" style="top:793.23px;font-size:15.5px;line-height:15.5px;color:#1f2a44;left:1385.50px;transform:scaleX(0.9004);">(Ctrl)</div><svg class="a" style="left:1420.00px;top:795.00px;overflow:visible;" width="12.00" height="11.00" viewBox="1420.00 795.00 12.00 11.00"><path d="M1422.5 798.5 H1429.5 L1426 802.5 Z" fill="#222"/></svg></div></div><div class="a" style="left:0.00px;top:1123.00px;width:1920.00px;height:27.00px;background:#505050;"></div><div class="a" style="left:0.00px;top:1122.50px;width:1920.00px;height:1.00px;background:#3c3c3c;"></div><div id="t323" class="a tx" style="top:1130.95px;font-size:13.2px;line-height:13.2px;color:#e8e8e8;left:15.20px;transform:scaleX(0.9903);">Page 6 of 6</div><div id="t324" class="a tx" style="top:1130.95px;font-size:13.2px;line-height:13.2px;color:#e8e8e8;left:106.20px;transform:scaleX(0.9979);">22 words</div><svg class="a" style="left:182.00px;top:1127.00px;overflow:visible;" width="21.00" height="20.00" viewBox="182.00 1127.00 21.00 20.00"><path d="M184.5 1129 H190.5 C192.5 1129 192.5 1131 192.5 1131 C192.5 1131 192.5 1129 194.5 1129 H200.5 V1142 H194 L192.5 1144.5 L191 1142 H184.5 Z" fill="none" stroke="#e0e0e0" stroke-width="1.1"/><path d="M192.5 1131 V1141 M194.5 1141 L197 1144 L201.5 1138" fill="none" stroke="#e0e0e0" stroke-width="1.1"/></svg><div id="t325" class="a tx" style="top:1130.95px;font-size:13.2px;line-height:13.2px;color:#e8e8e8;left:227.00px;transform:scaleX(0.9745);">Text Predictions: On</div><svg class="a" style="left:364.00px;top:1127.00px;overflow:visible;" width="23.00" height="21.00" viewBox="364.00 1127.00 23.00 21.00"><circle cx="374" cy="1130" r="2" fill="none" stroke="#e0e0e0" stroke-width="1.1"/><path d="M367 1133.5 H381 M374 1133.5 V1139 L370.5 1145 M374 1139 L377.5 1145" fill="none" stroke="#e0e0e0" stroke-width="1.1"/><path d="M377 1139 L385 1147 M385 1139 L377 1147" stroke="#e0e0e0" stroke-width="1.1"/></svg><div id="t326" class="a tx" style="top:1130.95px;font-size:13.2px;line-height:13.2px;color:#e8e8e8;font-weight:700;left:389.00px;transform:scaleX(0.9646);">Accessibility: Investigate</div><svg class="a" style="left:1343.00px;top:1126.00px;overflow:visible;" width="22.00" height="22.00" viewBox="1343.00 1126.00 22.00 22.00"><rect x="1345.5" y="1129.5" width="16.5" height="11" fill="none" stroke="#e0e0e0" stroke-width="1.1"/><circle cx="1357" cy="1142" r="3.5" fill="#4b4b4b" stroke="#e0e0e0" stroke-width="1.4" stroke-dasharray="1.5 1"/></svg><div id="t327" class="a tx" style="top:1130.95px;font-size:13.2px;line-height:13.2px;color:#e8e8e8;left:1366.00px;transform:scaleX(0.9667);">Display Settings</div><svg class="a" style="left:1477.00px;top:1126.00px;overflow:visible;" width="22.00" height="22.00" viewBox="1477.00 1126.00 22.00 22.00"><path d="M1480 1132 V1129 H1483 M1493 1129 H1496 V1132 M1496 1142 V1145 H1493 M1483 1145 H1480 V1142" fill="none" stroke="#e0e0e0" stroke-width="1.1"/><path d="M1484 1131 H1489.5 L1492.5 1134 V1143 H1484 Z" fill="none" stroke="#e0e0e0" stroke-width="1.1"/></svg><div id="t328" class="a tx" style="top:1130.95px;font-size:13.2px;line-height:13.2px;color:#e8e8e8;left:1500.50px;transform:scaleX(0.8883);">Focus</div><svg class="a" style="left:1562.00px;top:1127.00px;overflow:visible;" width="21.00" height="20.00" viewBox="1562.00 1127.00 21.00 20.00"><path d="M1564.5 1129.5 H1572.5 V1144 H1564.5 Z M1572.5 1129.5 H1580.5 V1144 H1572.5 Z" fill="none" stroke="#e0e0e0" stroke-width="1.1"/><path d="M1566.5 1133 H1570.5 M1566.5 1136 H1570.5 M1566.5 1139 H1570.5 M1574.5 1133 H1578.5 M1574.5 1136 H1578.5 M1574.5 1139 H1578.5" stroke="#e0e0e0" stroke-width="0.9"/></svg><div class="a" style="left:1598.00px;top:1124.00px;width:50.00px;height:26.00px;background:#5d5d5d;"></div><svg class="a" style="left:1613.00px;top:1127.00px;overflow:visible;" width="19.00" height="20.00" viewBox="1613.00 1127.00 19.00 20.00"><rect x="1615.5" y="1128.5" width="14" height="17" fill="none" stroke="#e0e0e0" stroke-width="1.1"/><path d="M1618 1132 H1627 M1618 1135 H1627 M1618 1138 H1627 M1618 1141 H1627" stroke="#e0e0e0" stroke-width="0.9"/></svg><svg class="a" style="left:1662.00px;top:1127.00px;overflow:visible;" width="22.00" height="21.00" viewBox="1662.00 1127.00 22.00 21.00"><rect x="1664.5" y="1128.5" width="15.5" height="16.5" fill="none" stroke="#e0e0e0" stroke-width="1.1"/><path d="M1664.5 1132 H1680 M1667 1135 H1673 M1667 1138 H1673" stroke="#e0e0e0" stroke-width="0.9"/><circle cx="1677.5" cy="1141.5" r="4.3" fill="#4b4b4b" stroke="#e0e0e0" stroke-width="1"/></svg><div class="a" style="left:1705.00px;top:1136.00px;width:10.00px;height:1.20px;background:#e0e0e0;"></div><div class="a" style="left:1721.00px;top:1136.20px;width:125.00px;height:0.80px;background:#d0d0d0;"></div><div class="a" style="left:1781.00px;top:1130.00px;width:6.00px;height:14.00px;background:#c8c8c8;"></div><div class="a" style="left:1852.00px;top:1136.00px;width:9.60px;height:1.20px;background:#e0e0e0;"></div><div class="a" style="left:1856.20px;top:1131.60px;width:1.20px;height:10.00px;background:#e0e0e0;"></div><div id="t329" class="a tx" style="top:1130.95px;font-size:13.2px;line-height:13.2px;color:#e8e8e8;left:1878.60px;transform:scaleX(0.9102);">100%</div><div class="a" style="left:0.00px;top:1150.00px;width:1920.00px;height:50.00px;background:#3e3c3a;"></div><svg class="a" style="left:0.00px;top:1150.00px;overflow:visible;" width="1920.00" height="50.00" viewBox="0.00 1150.00 1920.00 50.00"><path d="M19.5 1167.37 L28.2125 1165.115 V1174.135 H19.5 Z M29.4425 1164.5 L40 1163.885 V1174.135 H29.4425 Z M19.5 1175.365 H28.2125 V1184.385 L19.5 1182.13 Z M29.4425 1175.365 H40 V1185 L29.4425 1184.385 Z" fill="#fff"/><rect x="60" y="1150" width="360" height="50" fill="#f2f2f2"/><rect x="60" y="1150" width="360" height="1" fill="#bdbdbd"/><circle cx="88" cy="1171.8" r="6.8" fill="none" stroke="#1a1a1a" stroke-width="1.3"/><path d="M83.2 1176.8 L75.2 1184.6" stroke="#1a1a1a" stroke-width="1.4"/><rect x="325" y="1155" width="90" height="39" rx="4" fill="#e2e2e2"/><rect x="351" y="1166" width="38" height="23" rx="3" fill="#d98a0b"/><rect x="351" y="1166" width="38" height="9" rx="3" fill="#f0a818"/><path d="M362 1166 V1161 H378 V1166" fill="none" stroke="#3a3a3a" stroke-width="2"/><rect x="367.5" y="1173" width="5" height="4" fill="#f7e07a"/><path d="M441 1164.5 H454 M441 1183.5 H454" stroke="#fff" stroke-width="1.3"/><rect x="442" y="1168" width="11" height="12" fill="none" stroke="#fff" stroke-width="1.3"/><path d="M459.5 1164 V1166 M459.5 1169 V1184" stroke="#fff" stroke-width="1.3"/><g transform="translate(499.3,1160.5) scale(1.0107142857142857)"><path d="M0 3 H9 L11 5 H28 V24 H0 Z" fill="#e8a712"/><rect x="0" y="7" width="28" height="17" fill="#fbd365"/><path d="M7 24 V15 H21 V24 H17.5 V19 H10.5 V24 Z" fill="#3a8ee6"/></g><circle cx="575.6" cy="1174.6" r="14" fill="#1ed760"/><path d="M567.2 1170.3999999999999 C574.2 1167.6 580.5 1169.0 584.28 1172.08" fill="none" stroke="#191414" stroke-width="2.3800000000000003" stroke-linecap="round"/><path d="M568.6 1175.3 C574.2 1173.1999999999998 579.8000000000001 1174.32 582.88 1176.6999999999998" fill="none" stroke="#191414" stroke-width="1.9600000000000002" stroke-linecap="round"/><path d="M569.72 1179.78 C574.2 1178.3799999999999 578.6800000000001 1178.8 581.48 1180.62" fill="none" stroke="#191414" stroke-width="1.68" stroke-linecap="round"/><g transform="translate(622.6,1161) scale(1.0133333333333332)"><path d="M10 4 L20 0 L30 5 V20 H10 Z" fill="#0f78d4"/><path d="M20 0 L30 5 V12 L20 6 Z" fill="#50b0f0"/><path d="M14 12 L30 12 V24 H14 Z" fill="#1160b8"/><rect x="0" y="6" width="16" height="16" rx="1.5" fill="#0a64c8"/><circle cx="8" cy="14" r="4.3" fill="none" stroke="#fff" stroke-width="2.2"/><rect x="12" y="19" width="18" height="7" rx="1" fill="#19c3d8"/><text x="21" y="25.3" font-size="6.5" font-weight="700" text-anchor="middle" fill="#0b2d5a" font-family="Liberation Sans">NEW</text></g><g transform="translate(687,1161) scale(1.0)"><circle cx="17" cy="4" r="3.5" fill="#7b83eb"/><circle cx="25" cy="7" r="2.8" fill="#5059c9"/><rect x="12" y="10" width="17" height="12" rx="3" fill="#5059c9"/><rect x="0" y="6" width="17" height="17" rx="1.5" fill="#4b53bc"/><path d="M4 10 H13 M8.5 10 V19" stroke="#fff" stroke-width="2.4"/><rect x="10" y="19" width="18" height="7" rx="1" fill="#19c3d8"/><circle cx="20" cy="20" r="7.5" fill="#d13438"/></g><circle cx="762" cy="1174.5" r="14.2" fill="#f4f4f4"/><g transform="translate(762,1174.5) scale(1.0142857142857142)" stroke-linecap="round" stroke-width="3.6"><path d="M-3 -8 V-1" stroke="#36c5f0"/><path d="M-8 -3 H-6" stroke="#36c5f0"/><path d="M8 -3 H1" stroke="#2eb67d"/><path d="M3 -8 V-6" stroke="#2eb67d"/><path d="M3 8 V1" stroke="#ecb22e"/><path d="M8 3 H6" stroke="#ecb22e"/><path d="M-8 3 H-1" stroke="#e01e5a"/><path d="M-3 8 V6" stroke="#e01e5a"/></g><rect x="794" y="1150" width="61" height="50" fill="#5e5d5c"/><circle cx="824.5" cy="1174.5" r="15.5" fill="#34a853"/><path d="M824.5 1174.5 L811.077 1166.75 A15.5 15.5 0 0 1 837.923 1166.75 Z" fill="#ea4335"/><path d="M824.5 1174.5 L837.923 1166.75 A15.5 15.5 0 0 1 824.5 1190.0 Z" fill="#fbbc04"/><circle cx="824.5" cy="1174.5" r="6.9750000000000005" fill="#fff"/><circle cx="824.5" cy="1174.5" r="5.58" fill="#4285f4"/><circle cx="831.475" cy="1181.475" r="8.99" fill="#e8ddd0"/><path d="M825.275 1186.125 C825.275 1174.5 837.675 1174.5 837.675 1186.125" fill="#4a3426"/><circle cx="831.475" cy="1180.39" r="3.41" fill="#d9b08c"/><path d="M825.275 1190.0 C827.6 1185.35 835.35 1185.35 837.675 1190.0" fill="#f1ece6"/><g transform="translate(871,1162) scale(0.98)"><rect x="7" y="0" width="23" height="26" rx="2" fill="#2b7cd3"/><rect x="7" y="0" width="23" height="8.7" rx="2" fill="#41a5ee"/><rect x="7" y="17.3" width="23" height="8.7" rx="2" fill="#103f91"/><rect x="0" y="6" width="15" height="15" rx="1.5" fill="#185abd"/><text x="7.5" y="18" font-size="11" font-weight="700" text-anchor="middle" fill="#fff" font-family="Liberation Sans">W</text></g><g transform="translate(933,1162) scale(0.98)"><rect x="7" y="0" width="23" height="26" rx="2" fill="#21a366"/><rect x="7" y="0" width="23" height="8.7" rx="2" fill="#33c481"/><rect x="7" y="17.3" width="23" height="8.7" rx="2" fill="#185c37"/><rect x="0" y="6" width="15" height="15" rx="1.5" fill="#107c41"/><text x="7.5" y="18" font-size="11" font-weight="700" text-anchor="middle" fill="#fff" font-family="Liberation Sans">X</text></g><rect x="489" y="1197" width="51" height="3" fill="#66d9cc"/><rect x="613" y="1197" width="40" height="3" fill="#66d9cc"/><rect x="674.8" y="1197" width="51.200000000000045" height="3" fill="#66d9cc"/><rect x="794" y="1197" width="61" height="3" fill="#66d9cc"/><rect x="861" y="1197" width="39" height="3" fill="#66d9cc"/><rect x="654" y="1197" width="10" height="3" fill="#4aa39a"/><rect x="901.5" y="1197" width="10.200000000000045" height="3" fill="#4aa39a"/><rect x="1458" y="1162" width="8" height="20" rx="4" fill="#a8d3f7"/><circle cx="1462" cy="1184" r="5" fill="#5fb2f2"/><rect x="1460.6" y="1167" width="2.8" height="14" fill="#e04050"/><path d="M1473.5 1188 V1174 M1470 1177.5 L1473.5 1172 L1477 1177.5" fill="none" stroke="#ff1a1a" stroke-width="2.2"/><path d="M1627.5 1179 L1635 1171.5 L1642.5 1179" fill="none" stroke="#fff" stroke-width="1.4"/><path d="M1658 1183 C1653 1183 1654 1175 1659.5 1176 C1660 1169 1670 1169 1671 1175 C1676 1175 1676 1183 1671 1183 Z" fill="#1e88e5"/><circle cx="1670" cy="1181" r="5.5" fill="#1565c0"/><rect x="1669.3" y="1179.5" width="1.6" height="4.5" fill="#fff"/><rect x="1669.3" y="1177" width="1.6" height="1.6" fill="#fff"/><path d="M1685.5 1171 H1690 L1695 1166.5 V1183.5 L1690 1179 H1685.5 Z" fill="none" stroke="#fff" stroke-width="1.2"/><path d="M1698 1172 C1700 1174 1700 1176 1698 1178 M1701 1169.5 C1704.5 1173 1704.5 1177 1701 1180.5" fill="none" stroke="#fff" stroke-width="1.1"/><path d="M1703.5 1167 C1709 1172 1709 1178 1703.5 1183" fill="none" stroke="#888" stroke-width="1.1"/><rect x="1720" y="1169.5" width="14" height="9" fill="none" stroke="#fff" stroke-width="1.2"/><rect x="1722" y="1171.5" width="7" height="5" fill="#fff"/><rect x="1734" y="1172" width="1.8" height="4" fill="#fff"/><path d="M1716 1168 V1173 M1714 1170 H1719" stroke="#fff" stroke-width="1.2"/><path d="M1748 1184 A16 16 0 0 1 1764 1168 M1752 1184 A12 12 0 0 1 1764 1172 M1756 1184 A8 8 0 0 1 1764 1176" fill="none" stroke="#fff" stroke-width="1.2"/><circle cx="1762" cy="1183" r="1.5" fill="#fff"/><path d="M1869 1165 H1888.5 V1180.5 H1869 Z" fill="#fff"/><path d="M1872 1169 H1885 M1872 1172.5 H1885 M1872 1176 H1885" stroke="#3c3b39" stroke-width="1.1"/><circle cx="1887" cy="1184" r="10.5" fill="#3c3b39" stroke="#8c8c8c" stroke-width="1"/><rect x="1914" y="1150" width="1" height="50" fill="#6d6c6a"/></svg><div id="t330" class="a tx" style="top:1166.12px;font-size:19px;line-height:19px;color:#1f1f1f;left:110.00px;transform:scaleX(0.9766);">Type here to search</div><div id="t331" class="a tx" style="top:1166.86px;font-size:18.5px;line-height:18.5px;color:#ffffff;left:1492.00px;transform:scaleX(0.9454);">Temps to rise</div><div id="t332" class="a tx" style="top:1155.93px;font-size:15.5px;line-height:15.5px;color:#ffffff;left:1785.90px;transform:scaleX(0.8956);">4:14 PM</div><div id="t333" class="a tx" style="top:1178.73px;font-size:15.5px;line-height:15.5px;color:#ffffff;left:1777.70px;transform:scaleX(0.9905);">4/16/2024</div><div id="t334" class="a tx" style="top:1177.66px;font-size:14px;line-height:14px;color:#ffffff;font-weight:700;left:1879.75px;transform:scaleX(0.9311);">22</div></div><div class="a" style="left:1920px;top:0;width:1920px;height:1200px;overflow:hidden"><div class="a" style="left:0.00px;top:0.00px;width:1920.00px;height:1200.00px;background:#000;"></div><div class="a" style="left:0.00px;top:0.00px;width:1920.00px;height:40.00px;background:#000000;"></div><svg class="a" style="left:0.00px;top:0.00px;overflow:visible;" width="1920.00" height="87.00" viewBox="0.00 0.00 1920.00 87.00"><rect x="6" y="6.3" width="27.5" height="27.2" rx="8" fill="#2a2a2a"/><path d="M16 18 L20 22 L24 18" fill="none" stroke="#e8e8e8" stroke-width="1.8"/><path d="M267.7 40 A10 10 0 0 0 277.7 30 V16.3 A10 10 0 0 1 287.7 6.3 H500.6 A10 10 0 0 1 510.6 16.3 V30 A10 10 0 0 0 520.6 40 Z" fill="#2a2a2a"/><defs><linearGradient id="xm48" x1="0" y1="0" x2="1" y2="1"><stop offset="0" stop-color="#21dbaa"/><stop offset="0.5" stop-color="#00b4ef"/><stop offset="1" stop-color="#5f3ae8"/></linearGradient></defs><defs><linearGradient id="xm286" x1="0" y1="0" x2="1" y2="1"><stop offset="0" stop-color="#21dbaa"/><stop offset="0.5" stop-color="#00b4ef"/><stop offset="1" stop-color="#5f3ae8"/></linearGradient></defs><path d="M251.5 15.8 L259.8 24.1 M259.8 15.8 L251.5 24.1" stroke="#e0e0e0" stroke-width="1.6"/><path d="M489.8 15.8 L498.1 24.1 M498.1 15.8 L489.8 24.1" stroke="#e0e0e0" stroke-width="1.6"/><path d="M529.3 14 V26 M523.3 20 H535.3" stroke="#e8e8e8" stroke-width="1.8"/><rect x="1798.6" y="19.5" width="12" height="1.1" fill="#e8e8e8"/><rect x="1846.5" y="16.5" width="8" height="8" fill="none" stroke="#e8e8e8" stroke-width="1.1"/><path d="M1848.5 16.5 V14.5 H1856.5 V22.5 H1854.5" fill="none" stroke="#e8e8e8" stroke-width="1.1"/><path d="M1891.3 14.2 L1902.8 25.7 M1902.8 14.2 L1891.3 25.7" stroke="#e8e8e8" stroke-width="1.2"/><path d="M0 87 V50 A10 10 0 0 1 10 40 H1910 A10 10 0 0 1 1920 50 V87 Z" fill="#2a2a2a"/><rect x="120" y="45.8" width="1625.7" height="33.6" rx="16.8" fill="#3c3c3c"/><path d="M29 63 H15.5 M21.5 57 L15.5 63 L21.5 69" fill="none" stroke="#8f8f8f" stroke-width="1.6"/><path d="M50.5 63 H64 M58 57 L64 63 L58 69" fill="none" stroke="#8f8f8f" stroke-width="1.6"/><path d="M99.5 59.5 A6.8 6.8 0 1 0 100.5 65" fill="none" stroke="#e3e3e3" stroke-width="1.7"/><path d="M96 56.5 H100.8 V61.3 Z" fill="#e3e3e3"/><circle cx="136.8" cy="62.6" r="11.7" fill="#2a2a2a"/><path d="M136.5 59.8 H143.3 M130.5 65.5 H137" stroke="#e3e3e3" stroke-width="1.6"/><circle cx="132.8" cy="59.8" r="1.8" fill="none" stroke="#e3e3e3" stroke-width="1.3"/><circle cx="140.8" cy="65.5" r="1.8" fill="none" stroke="#e3e3e3" stroke-width="1.3"/><path d="M1722.2 55.8 L1724.3 60.6 L1729.5 61 L1725.5 64.4 L1726.8 69.5 L1722.2 66.8 L1717.6 69.5 L1718.9 64.4 L1714.9 61 L1720.1 60.6 Z" fill="none" stroke="#e3e3e3" stroke-width="1.3"/><path d="M1764 70.8 V64 A8 8 0 1 1 1771.5 70.8 Z" fill="#13856d" stroke="#e8e8e8" stroke-width="0.8"/><path d="M1775.2 59.8 A4.8 4.8 0 1 0 1775.8 64.3 H1771.8" fill="none" stroke="#fff" stroke-width="1.8"/><path d="M1802 58 H1806 A2.3 2.3 0 0 1 1810.5 58 H1815 V62.5 A2.3 2.3 0 0 1 1815 67 V71 H1802 Z" fill="none" stroke="#e3e3e3" stroke-width="1.5"/><rect x="1833.5" y="55" width="2" height="16" fill="#000"/><defs><clipPath id="avc"><circle cx="1862" cy="63" r="10"/></clipPath></defs><g clip-path="url(#avc)"><rect x="1850" y="51" width="24" height="24" fill="#ecebe8"/><path d="M1855 75 C1853 62 1855 54 1862 54 C1868 54 1871 60 1872 75 Z" fill="#7a5236"/><ellipse cx="1862.5" cy="61.5" rx="3.8" ry="5" fill="#e2b894"/><path d="M1853 76 C1855 69 1869 69 1872 76" fill="#d9d2c4"/><path d="M1859 60.3 H1861.8 M1863.2 60.3 H1866" stroke="#222" stroke-width="1"/></g><circle cx="1898" cy="57" r="1.7" fill="#e3e3e3"/><circle cx="1898" cy="63" r="1.7" fill="#e3e3e3"/><circle cx="1898" cy="69" r="1.7" fill="#e3e3e3"/></svg><div id="t354" class="a tx" style="top:13.81px;font-size:13.5px;line-height:13.5px;color:transparent;font-weight:700;left:48.00px;transform:scaleX(0.7901);background:linear-gradient(90deg,#21dbaa,#00a3f0 55%,#5f3ae8);-webkit-background-clip:text;background-clip:text">XM</div><div id="t355" class="a tx" style="top:13.81px;font-size:13.5px;line-height:13.5px;color:transparent;font-weight:700;left:286.00px;transform:scaleX(0.8198);background:linear-gradient(90deg,#21dbaa,#00a3f0 55%,#5f3ae8);-webkit-background-clip:text;background-clip:text">XM</div><div class="a" style="left:72px;top:8px;width:168px;height:26px;overflow:hidden;-webkit-mask-image:linear-gradient(90deg,#000 86%,rgba(0,0,0,0.25));mask-image:linear-gradient(90deg,#000 86%,rgba(0,0,0,0.25))"><div id="t356" class="a tx" style="top:6.10px;font-size:13px;line-height:13px;color:#e3e3e3;left:0.00px;transform:scaleX(0.8936);">Distribute Survey | Qualtrics Exp</div></div><div class="a" style="left:310px;top:8px;width:168px;height:26px;overflow:hidden;-webkit-mask-image:linear-gradient(90deg,#000 86%,rgba(0,0,0,0.25));mask-image:linear-gradient(90deg,#000 86%,rgba(0,0,0,0.25))"><div id="t357" class="a tx" style="top:6.10px;font-size:13px;line-height:13px;color:#ffffff;left:0.00px;transform:scaleX(0.8868);">Preview - Qualtrics Survey | Qua</div></div><div id="t358" class="a tx" style="top:55.77px;font-size:15.2px;line-height:15.2px;color:#e3e3e3;left:157.00px;transform:scaleX(0.8962);">pacificresearch.qualtrics.com</div><div id="t359" class="a tx" style="top:55.77px;font-size:15.2px;line-height:15.2px;color:#a9a9a9;left:333.00px;transform:scaleX(0.9056);">/jfe/preview/previewId/8e7915d0-3184-491f-be92-bc2a2c54b6b1/SV_57SePKbS35aO6Wi?Q_CHL=preview&amp;Q_SurveyVersionID=current</div><div class="a" style="left:0.00px;top:87.00px;width:1920.00px;height:953.00px;background:#ffffff;"></div><div class="a" style="left:24.00px;top:111.00px;width:131.80px;height:35.50px;background:#0b6fd3;border-radius:3px"></div><div id="t335" class="a tx" style="top:122.26px;font-size:13.8px;line-height:13.8px;color:#ffffff;font-weight:700;left:45.10px;transform:scaleX(0.9261);">Restart Survey</div><div class="a" style="left:171.80px;top:111.00px;width:143.20px;height:35.50px;background:#fff;border:1.5px solid #0b6fd3;border-radius:3px"></div><div id="t336" class="a tx" style="top:122.26px;font-size:13.8px;line-height:13.8px;color:#0b6fd3;left:193.40px;">Place Bookmark</div><div class="a" style="left:339.00px;top:111.00px;width:1.00px;height:35.50px;background:#d5d5d5;"></div><div id="t337" class="a tx" style="top:122.26px;font-size:13.8px;line-height:13.8px;color:#3a3a3a;left:378.30px;transform:scaleX(0.9842);">Tools</div><svg class="a" style="left:465.20px;top:122.50px;overflow:visible;" width="16.00" height="12.00" viewBox="465.20 122.50 16.00 12.00"><path d="M469.2 126.5 L473.2 130.5 L477.2 126.5" fill="none" stroke="#3a3a3a" stroke-width="1.3"/></svg><div class="a" style="left:508.00px;top:111.00px;width:57.80px;height:35.50px;background:#e6e6e6;"></div><svg class="a" style="left:528.00px;top:117.00px;overflow:visible;" width="18.00" height="25.00" viewBox="528.00 117.00 18.00 25.00"><rect x="530.5" y="120" width="12.5" height="20" rx="2.2" fill="none" stroke="#222" stroke-width="1.8"/><rect x="534.5" y="135.5" width="4.5" height="1.8" fill="#222"/></svg><div class="a" style="left:1734.00px;top:111.00px;width:162.00px;height:35.50px;background:#0b6fd3;border-radius:3px"></div><svg class="a" style="left:1754.00px;top:118.00px;overflow:visible;" width="24.00" height="22.00" viewBox="1754.00 118.00 24.00 22.00"><circle cx="1773" cy="122.5" r="3.2" fill="none" stroke="#fff" stroke-width="1.8"/><circle cx="1759.5" cy="129" r="3.2" fill="none" stroke="#fff" stroke-width="1.8"/><circle cx="1773" cy="135.5" r="3.2" fill="none" stroke="#fff" stroke-width="1.8"/><path d="M1762.5 127.5 L1770 124 M1762.5 130.5 L1770 134" stroke="#fff" stroke-width="1.8"/></svg><div id="t338" class="a tx" style="top:122.26px;font-size:13.8px;line-height:13.8px;color:#ffffff;font-weight:700;left:1786.70px;transform:scaleX(0.9360);">Share Preview</div><div class="a" style="left:0.00px;top:170.50px;width:1920.00px;height:2.00px;background:#f2f2f2;"></div><div class="a" style="left:24.00px;top:195.00px;width:1485.00px;height:845.00px;background:#d9d9d9;"></div><svg class="a" style="left:735.50px;top:273.00px;overflow:visible;" width="60.00" height="38.00" viewBox="735.50 273.00 60.00 38.00"><g transform="translate(765.5,275) scale(1.0)"><path d="M0 0 L16.5 16.7 L0 33.4 L-16.5 16.7 Z" fill="#0d5fb0"/><path d="M-16.5 16.7 L-5 5 V28.5 Z" fill="#9fd0f2"/><rect x="-5" y="4.5" width="5" height="24.5" fill="#fff"/><path d="M1.5 15 H10 C10 21 6 24 1.5 24 Z" fill="#6cb43f"/><path d="M1.5 8 H10" stroke="#fff" stroke-width="2"/></g></svg><div id="t339" class="a tx" style="top:310.12px;font-size:14.5px;line-height:14.5px;color:#1a1a1a;font-family:'Liberation Serif',serif;left:738.00px;transform:scaleX(1.0135);">PACIFIC</div><div id="t340" class="a tx" style="top:324.83px;font-size:11.0px;line-height:11.0px;color:#1a1a1a;font-family:'Liberation Serif',serif;left:738.00px;transform:scaleX(1.0656);">Research &amp;</div><div id="t341" class="a tx" style="top:335.13px;font-size:11.0px;line-height:11.0px;color:#1a1a1a;font-family:'Liberation Serif',serif;left:739.00px;transform:scaleX(1.1122);">Evaluation</div><div class="a" style="left:382.00px;top:365.00px;width:769.50px;height:225.00px;background:#ffffff;border-radius:4px"></div><div id="t342" class="a tx" style="top:443.99px;font-size:16.8px;line-height:16.8px;color:#737373;left:640.40px;transform:scaleX(1.0316);">Thank you for taking our survey!</div><div id="t343" class="a tx" style="top:494.59px;font-size:16.8px;line-height:16.8px;color:#737373;font-style:italic;left:438.00px;transform:scaleX(1.0354);">Please show this end page to the data collectors to receive your NASA or NMNH pin.</div><div class="a" style="left:1302.00px;top:1000.00px;width:207.00px;height:40.00px;background:#bcbcbe;border-radius:5px 0 0 0"></div><div id="t344" class="a tx" style="top:1014.86px;font-size:13.8px;line-height:13.8px;color:#7b7b80;left:1325.60px;transform:scaleX(1.0982);">Powered by Qualtrics</div><svg class="a" style="left:1472.00px;top:1013.00px;overflow:visible;" width="16.00" height="15.00" viewBox="1472.00 1013.00 16.00 15.00"><path d="M1478.5 1016.5 H1474 V1026.3 H1484.2 V1021.5 M1479 1021.5 L1485.5 1015 M1481.5 1015 H1485.5 V1019" fill="none" stroke="#7b7b80" stroke-width="1.1"/></svg><svg class="a" style="left:1450.00px;top:190.00px;overflow:visible;" width="450.00" height="790.00" viewBox="1450.00 190.00 450.00 790.00"><rect x="1533" y="280.6" width="3.5" height="28" rx="1.5" fill="#222831"/><rect x="1533" y="338" width="3.5" height="46" rx="1.5" fill="#222831"/><rect x="1533" y="398" width="3.5" height="46" rx="1.5" fill="#222831"/><rect x="1889.5" y="338" width="4" height="79" rx="1.5" fill="#222831"/><rect x="1535.7" y="195" width="355.5" height="780.4" rx="37" fill="#222831"/><rect x="1683" y="211.5" width="40" height="6" rx="3" fill="#0f1318"/><circle cx="1739" cy="214.3" r="3.6" fill="none" stroke="#0f1318" stroke-width="1.6"/></svg><div class="a" style="left:1544px;top:226.6px;width:340px;height:735.4px;border-radius:20px 20px 28px 28px;overflow:hidden;background:#d9d9d9"><div class="a" style="left:0.00px;top:0.00px;width:340.00px;height:35.40px;background:#ffffff;"></div><div id="t345" class="a tx" style="top:10.82px;font-size:14.5px;line-height:14.5px;color:#000000;font-weight:700;left:15.00px;transform:scaleX(0.9276);">12:29</div><svg class="a" style="left:280.00px;top:10.00px;overflow:visible;" width="50.00" height="16.00" viewBox="280.00 10.00 50.00 16.00"><rect x="281.7" y="20.5" width="2.2" height="3.5" fill="#000"/><rect x="285.2" y="18" width="2.2" height="6" fill="#000"/><rect x="288.7" y="15.5" width="2.2" height="8.5" fill="#000"/><rect x="292.2" y="13" width="2.2" height="11" fill="#bbb"/><rect x="306.7" y="14.8" width="16" height="7.5" rx="1.8" fill="#000"/><rect x="323.2" y="16.8" width="1.5" height="3.5" fill="#000"/></svg><svg class="a" style="left:150.10px;top:63.50px;overflow:visible;" width="37.80" height="24.68" viewBox="150.10 63.50 37.80 24.68"><g transform="translate(169,65.5) scale(0.63)"><path d="M0 0 L16.5 16.7 L0 33.4 L-16.5 16.7 Z" fill="#0d5fb0"/><path d="M-16.5 16.7 L-5 5 V28.5 Z" fill="#9fd0f2"/><rect x="-5" y="4.5" width="5" height="24.5" fill="#fff"/><path d="M1.5 15 H10 C10 21 6 24 1.5 24 Z" fill="#6cb43f"/><path d="M1.5 8 H10" stroke="#fff" stroke-width="2"/></g></svg><div id="t346" class="a tx" style="top:87.62px;font-size:9.135px;line-height:9.135px;color:#1a1a1a;font-family:'Liberation Serif',serif;left:151.68px;transform:scaleX(1.0146);">PACIFIC</div><div id="t347" class="a tx" style="top:96.89px;font-size:6.93px;line-height:6.93px;color:#1a1a1a;font-family:'Liberation Serif',serif;left:151.68px;transform:scaleX(1.0668);">Research &amp;</div><div id="t348" class="a tx" style="top:103.38px;font-size:6.93px;line-height:6.93px;color:#1a1a1a;font-family:'Liberation Serif',serif;left:152.31px;transform:scaleX(1.1135);">Evaluation</div><div class="a" style="left:0.00px;top:126.00px;width:340.00px;height:275.40px;background:#ffffff;"></div><div id="t349" class="a tx" style="top:190.49px;font-size:16.8px;line-height:16.8px;color:#737373;left:46.00px;transform:scaleX(1.0346);">Thank you for taking our survey!</div><div id="t350" class="a tx" style="top:240.79px;font-size:16.8px;line-height:16.8px;color:#737373;font-style:italic;left:54.65px;transform:scaleX(1.0523);">Please show this end page to</div><div id="t351" class="a tx" style="top:265.49px;font-size:16.8px;line-height:16.8px;color:#737373;font-style:italic;left:53.25px;transform:scaleX(1.0931);">the data collectors to receive</div><div id="t352" class="a tx" style="top:290.39px;font-size:16.8px;line-height:16.8px;color:#737373;font-style:italic;left:79.00px;transform:scaleX(0.9614);">your NASA or NMNH pin.</div><div id="t353" class="a tx" style="top:427.76px;font-size:14.2px;line-height:14.2px;color:#737373;left:89.70px;transform:scaleX(1.0680);">Powered by Qualtrics</div><svg class="a" style="left:236.00px;top:427.00px;overflow:visible;" width="15.00" height="15.00" viewBox="236.00 427.00 15.00 15.00"><path d="M242.5 429.5 H238.2 V440 H248.5 V435.7 M243.5 434.7 L249 429 M245 429 H249 V433" fill="none" stroke="#6b6b6b" stroke-width="1.1"/></svg></div><svg class="a" style="left:0.00px;top:1040.00px;overflow:visible;" width="1920.00" height="40.00" viewBox="0.00 1040.00 1920.00 40.00"><rect x="0" y="1040" width="1920" height="40" fill="#3d3c3a"/><path d="M16 1053.81 L23.0125 1051.995 V1059.255 H16 Z M24.002499999999998 1051.5 L32.5 1051.005 V1059.255 H24.002499999999998 Z M16 1060.245 H23.0125 V1067.505 L16 1065.69 Z M24.002499999999998 1060.245 H32.5 V1068 L24.002499999999998 1067.505 Z" fill="#fff"/><circle cx="74" cy="1057" r="7.8" fill="none" stroke="#fff" stroke-width="1.6"/><path d="M68.5 1062.5 L62 1069" stroke="#fff" stroke-width="1.9"/><path d="M112 1051.5 H122 M112 1068 H122" stroke="#fff" stroke-width="1.1"/><rect x="112.5" y="1054.5" width="9" height="10" fill="none" stroke="#fff" stroke-width="1.1"/><path d="M127.3 1051 V1053 M127.3 1055 V1068" stroke="#fff" stroke-width="1.1"/><g transform="translate(159.5,1049) scale(0.8035714285714286)"><path d="M0 3 H9 L11 5 H28 V24 H0 Z" fill="#e8a712"/><rect x="0" y="7" width="28" height="17" fill="#fbd365"/><path d="M7 24 V15 H21 V24 H17.5 V19 H10.5 V24 Z" fill="#3a8ee6"/></g><circle cx="219.6" cy="1059" r="11" fill="#1ed760"/><path d="M213.0 1055.7 C218.5 1053.5 223.45 1054.6 226.42 1057.02" fill="none" stroke="#191414" stroke-width="1.87" stroke-linecap="round"/><path d="M214.1 1059.55 C218.5 1057.9 222.9 1058.78 225.32 1060.65" fill="none" stroke="#191414" stroke-width="1.54" stroke-linecap="round"/><path d="M214.98 1063.07 C218.5 1061.97 222.01999999999998 1062.3 224.22 1063.73" fill="none" stroke="#191414" stroke-width="1.3199999999999998" stroke-linecap="round"/><g transform="translate(257,1049) scale(0.8)"><path d="M10 4 L20 0 L30 5 V20 H10 Z" fill="#0f78d4"/><path d="M20 0 L30 5 V12 L20 6 Z" fill="#50b0f0"/><path d="M14 12 L30 12 V24 H14 Z" fill="#1160b8"/><rect x="0" y="6" width="16" height="16" rx="1.5" fill="#0a64c8"/><circle cx="8" cy="14" r="4.3" fill="none" stroke="#fff" stroke-width="2.2"/><rect x="12" y="19" width="18" height="7" rx="1" fill="#19c3d8"/><text x="21" y="25.3" font-size="6.5" font-weight="700" text-anchor="middle" fill="#0b2d5a" font-family="Liberation Sans">NEW</text></g><g transform="translate(306,1049) scale(0.8)"><circle cx="17" cy="4" r="3.5" fill="#7b83eb"/><circle cx="25" cy="7" r="2.8" fill="#5059c9"/><rect x="12" y="10" width="17" height="12" rx="3" fill="#5059c9"/><rect x="0" y="6" width="17" height="17" rx="1.5" fill="#4b53bc"/><path d="M4 10 H13 M8.5 10 V19" stroke="#fff" stroke-width="2.4"/><rect x="10" y="19" width="18" height="7" rx="1" fill="#19c3d8"/><circle cx="20" cy="20" r="7.5" fill="#d13438"/></g><circle cx="366.7" cy="1059" r="11.5" fill="#f4f4f4"/><g transform="translate(366.7,1059) scale(0.8214285714285714)" stroke-linecap="round" stroke-width="3.6"><path d="M-3 -8 V-1" stroke="#36c5f0"/><path d="M-8 -3 H-6" stroke="#36c5f0"/><path d="M8 -3 H1" stroke="#2eb67d"/><path d="M3 -8 V-6" stroke="#2eb67d"/><path d="M3 8 V1" stroke="#ecb22e"/><path d="M8 3 H6" stroke="#ecb22e"/><path d="M-8 3 H-1" stroke="#e01e5a"/><path d="M-3 8 V6" stroke="#e01e5a"/></g><rect x="392" y="1040" width="48" height="40" fill="#5e5d5c"/><circle cx="415.7" cy="1059" r="12" fill="#34a853"/><path d="M415.7 1059 L405.308 1053.0 A12 12 0 0 1 426.092 1053.0 Z" fill="#ea4335"/><path d="M415.7 1059 L426.092 1053.0 A12 12 0 0 1 415.7 1071 Z" fill="#fbbc04"/><circle cx="415.7" cy="1059" r="5.4" fill="#fff"/><circle cx="415.7" cy="1059" r="4.32" fill="#4285f4"/><circle cx="421.09999999999997" cy="1064.4" r="6.959999999999999" fill="#e8ddd0"/><path d="M416.3 1068.0 C416.3 1059 425.9 1059 425.9 1068.0" fill="#4a3426"/><circle cx="421.09999999999997" cy="1063.56" r="2.64" fill="#d9b08c"/><path d="M416.3 1071.0 C418.09999999999997 1067.4 424.09999999999997 1067.4 425.9 1071.0" fill="#f1ece6"/><g transform="translate(452.5,1049) scale(0.7666666666666667)"><rect x="7" y="0" width="23" height="26" rx="2" fill="#2b7cd3"/><rect x="7" y="0" width="23" height="8.7" rx="2" fill="#41a5ee"/><rect x="7" y="17.3" width="23" height="8.7" rx="2" fill="#103f91"/><rect x="0" y="6" width="15" height="15" rx="1.5" fill="#185abd"/><text x="7.5" y="18" font-size="11" font-weight="700" text-anchor="middle" fill="#fff" font-family="Liberation Sans">W</text></g><g transform="translate(502,1049) scale(0.7666666666666667)"><rect x="7" y="0" width="23" height="26" rx="2" fill="#21a366"/><rect x="7" y="0" width="23" height="8.7" rx="2" fill="#33c481"/><rect x="7" y="17.3" width="23" height="8.7" rx="2" fill="#185c37"/><rect x="0" y="6" width="15" height="15" rx="1.5" fill="#107c41"/><text x="7.5" y="18" font-size="11" font-weight="700" text-anchor="middle" fill="#fff" font-family="Liberation Sans">X</text></g><rect x="151" y="1078" width="40" height="2" fill="#66d9cc"/><rect x="249" y="1078" width="31" height="2" fill="#66d9cc"/><rect x="298" y="1078" width="40" height="2" fill="#66d9cc"/><rect x="392" y="1078" width="48" height="2" fill="#66d9cc"/><rect x="445" y="1078" width="31" height="2" fill="#66d9cc"/><rect x="281" y="1078" width="8" height="2" fill="#4aa39a"/><rect x="477" y="1078" width="8" height="2" fill="#4aa39a"/></svg><div id="t360" class="a tx" style="top:1044.98px;font-size:11.5px;line-height:11.5px;color:#ffffff;left:1866.00px;transform:scaleX(0.9947);">4:14 PM</div><div id="t361" class="a tx" style="top:1062.38px;font-size:11.5px;line-height:11.5px;color:#ffffff;left:1861.00px;transform:scaleX(1.0301);">4/16/2024</div></div></body></html>
